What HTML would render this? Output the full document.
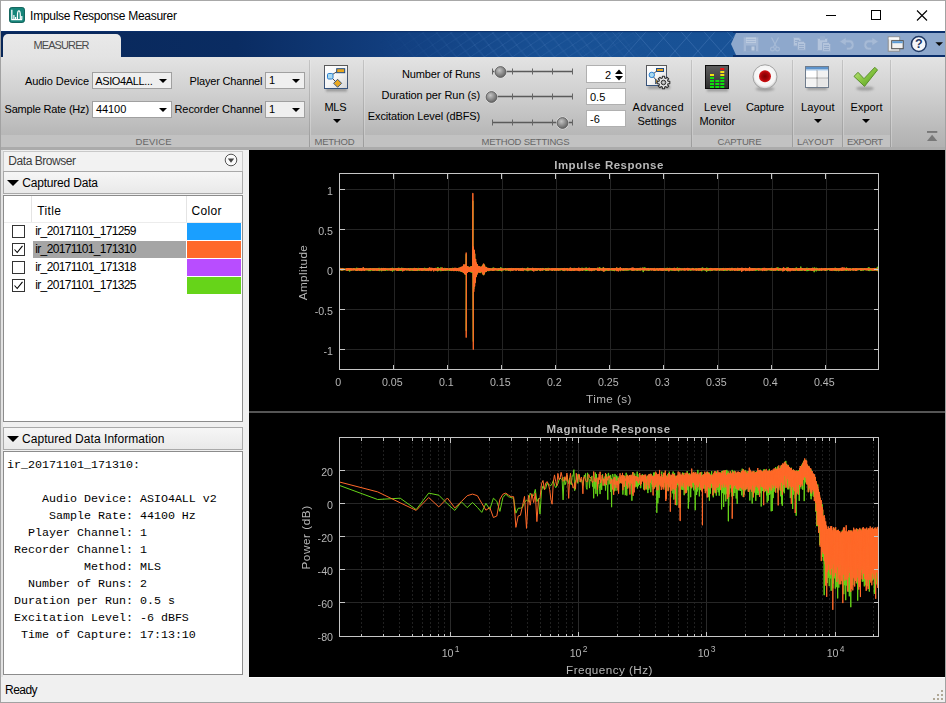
<!DOCTYPE html>
<html><head><meta charset="utf-8"><title>Impulse Response Measurer</title>
<style>

html,body{margin:0;padding:0;}
body{width:946px;height:703px;overflow:hidden;background:#f0f0f0;font-family:"Liberation Sans",sans-serif;font-size:12px;color:#000;}
#win{position:relative;width:946px;height:703px;overflow:hidden;background:#f0f0f0;box-sizing:border-box;}
.abs{position:absolute;}
#wb-top{position:absolute;left:0;top:0;width:946px;height:1px;background:#a8a8a8;z-index:50;}
#wb-left{position:absolute;left:0;top:0;width:1px;height:703px;background:#a2a2a2;z-index:50;}
#wb-right{position:absolute;left:945px;top:0;width:1px;height:703px;background:#a2a2a2;z-index:50;}
#wb-bot{position:absolute;left:0;top:702px;width:946px;height:1px;background:#a2a2a2;z-index:50;}
#titlebar{position:absolute;left:0;top:0;width:946px;height:31px;background:#fff;}
#title{position:absolute;left:30px;top:8px;font-size:12.4px;color:#000;white-space:nowrap;letter-spacing:0px;}
#tabbar{position:absolute;left:0;top:31px;width:946px;height:26px;background:linear-gradient(90deg,#092759 0%,#0a2c62 25%,#123f80 42%,#185094 58%,#1a5599 100%);overflow:hidden;}
#tab{position:absolute;left:3px;top:3px;width:118px;height:24px;background:linear-gradient(#e9e9e9,#e3e3e3);border-radius:5px 5px 0 0;}
#tab span{position:absolute;left:31px;top:5px;font-size:11.5px;color:#4a4a4a;letter-spacing:0.1px;}
#qat{position:absolute;left:731px;top:2px;width:215px;height:22px;}
#strip{position:absolute;left:0;top:57px;width:946px;height:93px;background:linear-gradient(#e3e3e3 0%,#d2d2d2 35%,#b9b9b9 80%,#b0b0b0 100%);}
#labels{position:absolute;left:0;top:135px;width:891px;height:12px;background:#c2c2c2;}
#labels span{position:absolute;top:2px;font-size:10.5px;color:#5f5f5f;white-space:nowrap;letter-spacing:0.2px;}
#stripline{position:absolute;left:0;top:147px;width:946px;height:3px;background:#ababab;}
.vsep{position:absolute;top:60px;width:1px;height:87px;background:linear-gradient(#c4c4c4,#9c9c9c);}
.vsep2{position:absolute;top:60px;width:1px;height:87px;background:linear-gradient(#e6e6e6,#c4c4c4);}
.tl{position:absolute;font-size:12px;white-space:nowrap;color:#000;}
.combo{position:absolute;height:17px;border:1px solid #a0a0a0;background:#efefef;box-sizing:border-box;font-size:11px;}
.combo span{position:absolute;left:3px;top:1px;white-space:nowrap;}
.combo i{position:absolute;right:4px;top:6px;width:0;height:0;border-left:4px solid transparent;border-right:4px solid transparent;border-top:4px solid #000;}
.tf{position:absolute;height:17px;width:40px;border:1px solid #b0b0b0;background:#fff;box-sizing:border-box;font-size:11px;}
.tf span{position:absolute;top:1.5px;white-space:nowrap;}
.btnl{position:absolute;font-size:12px;text-align:center;white-space:nowrap;line-height:14px;}
.dd{position:absolute;width:0;height:0;border-left:4px solid transparent;border-right:4px solid transparent;border-top:4px solid #000;}
#left{position:absolute;left:1px;top:150px;width:248px;height:527px;background:#f0f0f0;}
#status{position:absolute;left:1px;top:677px;width:944px;height:25px;background:#f0f0f0;}
#status span{position:absolute;left:4px;top:6px;font-size:12px;}
#plotbg{position:absolute;left:249px;top:150px;width:696px;height:527px;background:#000;}
.ph{position:absolute;box-sizing:border-box;border:1px solid #a9a9a9;background:linear-gradient(#f6f6f6,#e9e9e9);font-size:12px;}
.mono{font-family:"Liberation Mono",monospace;font-size:11px;white-space:pre;line-height:17px;}

</style></head>
<body>
<div id="win">
<div id="wb-top"></div><div id="wb-left"></div><div id="wb-right"></div><div id="wb-bot"></div>

<div id="titlebar">
<svg class="abs" style="left:9px;top:7px" width="16" height="16" viewBox="0 0 17 17">
<rect x="0.5" y="0.5" width="16" height="16" rx="2.5" fill="#16857a" stroke="#0d5f57"/>
<path d="M3 3 V13.5 H14" fill="none" stroke="#fff" stroke-width="1.4"/>
<path d="M5.2 13 V8.5 M7 13 V10.5 M9 13 V9 C9 6 9.6 4 10.5 4 C11.4 4 12 6 12 9 V13 M13.6 13 V9.5" fill="none" stroke="#fff" stroke-width="1.3"/>
</svg>
<div class="abs" style="left:30.1px;top:9.6px;font-size:12px;line-height:13.9px;letter-spacing:-0.271px;color:#000;white-space:nowrap;">Impulse Response Measurer</div>
<svg class="abs" style="left:820px;top:8px" width="120" height="16" viewBox="0 0 120 16">
<path d="M6 7.5 H16" stroke="#000" stroke-width="1" fill="none"/>
<rect x="51.500" y="2.500" width="9" height="9" stroke="#000" stroke-width="1" fill="none"/>
<path d="M97 2.5 L107 12.5 M107 2.5 L97 12.5" stroke="#000" stroke-width="1.1" fill="none"/>
</svg>
</div>
<div id="tabbar">
<svg class="abs" style="left:0;top:0" width="946" height="26" viewBox="0 0 946 26">
<defs><pattern id="hatch" width="46" height="52" patternUnits="userSpaceOnUse" patternTransform="translate(8,-6)">
<path d="M0 0 L46 52 M46 0 L0 52 M-23 0 L23 52 M69 0 L23 52 M23 0 L69 52 M23 0 L-23 52" stroke="#4d7fbd" stroke-width="1" fill="none" opacity="0.500"/></pattern>
<pattern id="hatch2" width="14" height="12" patternUnits="userSpaceOnUse" patternTransform="translate(3,2) skewX(-20)">
<path d="M0 0 L14 12 M14 0 L0 12" stroke="#3f72b3" stroke-width="0.800" fill="none" opacity="0.550"/></pattern>
<linearGradient id="hfade" x1="0" x2="1" y1="0" y2="0"><stop offset="0" stop-color="#fff" stop-opacity="0"/><stop offset="0.6" stop-color="#fff" stop-opacity="0"/><stop offset="0.68" stop-color="#fff" stop-opacity="0.800"/><stop offset="1" stop-color="#fff" stop-opacity="1"/></linearGradient>
<linearGradient id="hfade2" x1="0" x2="1" y1="0" y2="0"><stop offset="0" stop-color="#fff" stop-opacity="0"/><stop offset="0.4" stop-color="#fff" stop-opacity="0"/><stop offset="0.52" stop-color="#fff" stop-opacity="0.900"/><stop offset="0.62" stop-color="#fff" stop-opacity="0.900"/><stop offset="0.7" stop-color="#fff" stop-opacity="0"/><stop offset="1" stop-color="#fff" stop-opacity="0"/></linearGradient>
<mask id="hm"><rect width="946" height="26" fill="url(#hfade)"/></mask><mask id="hm2"><rect width="946" height="26" fill="url(#hfade2)"/></mask></defs>
<rect width="946" height="26" fill="url(#hatch2)" mask="url(#hm2)"/>
<rect width="946" height="26" fill="url(#hatch)" mask="url(#hm)"/>
<rect x="0" y="0" width="946" height="1.200" fill="#0b2f6b" opacity="0.850"/><rect x="733" y="0" width="213" height="2" fill="#0b2f6b"/><rect x="733" y="24" width="213" height="2" fill="#0b2f6b"/><path d="M731 13 L736 2 H946 V24 H736 Z" fill="#8ea8cc"/>
</svg>
<div id="tab"></div>
<svg id="qat" viewBox="0 0 215 22">
<!-- save -->
<path d="M12.500 4 H27.500 V18.500 H12.500 Z" fill="#a4b8d5" stroke="#94abcc" stroke-width="0.800"/>
<rect x="15" y="4.500" width="10" height="5.500" fill="#bccbe0"/>
<rect x="15.500" y="6" width="9" height="1" fill="#a4b8d5"/><rect x="15.500" y="8" width="9" height="1" fill="#a4b8d5"/>
<rect x="15" y="12.500" width="10" height="6" fill="#8fa7c9"/>
<rect x="20.500" y="13.500" width="3" height="4" fill="#bccbe0"/>
<!-- cut -->
<g fill="none" stroke="#a6bad6" stroke-width="1.200">
<path d="M40.500 4.500 L45.500 14 M47.500 4.500 L42.500 14"/><circle cx="41.500" cy="16" r="1.900"/><circle cx="46.500" cy="16" r="1.900"/>
</g>
<!-- copy -->
<g fill="#b3c4dc" stroke="#98aece" stroke-width="1">
<path d="M62.500 4.500 H68 L70 6.500 V13 H62.500 Z"/><path d="M66.500 8.500 H72.500 L74.500 10.500 V17 H66.500 Z"/>
</g>
<path d="M64 7.500 H68 M64 9.500 H66 M68 11.500 H73 M68 13.500 H73 M68 15.500 H73" stroke="#8ea6c8" stroke-width="0.800" fill="none"/>
<!-- paste -->
<g fill="#b3c4dc" stroke="#98aece" stroke-width="1">
<rect x="86.500" y="5.500" width="10" height="12"/><rect x="89.500" y="3.800" width="4" height="3" fill="#98aece"/><path d="M91.500 9.500 H97.500 L99.500 11.500 V18.300 H91.500 Z"/>
</g>
<path d="M93 12.500 H98 M93 14.500 H98 M93 16.500 H98" stroke="#8ea6c8" stroke-width="0.800" fill="none"/>
<!-- undo -->
<path d="M108.500 8.600 L115 4.300 V6.800 H119 C124.500 6.800 124.500 17 119 17 H115.500 V14.300 H118.500 C121 14.300 121 9.800 118.500 9.800 H115 V12.800 Z" fill="#a6bad6" stroke="#90a8ca" stroke-width="0.800"/>
<!-- redo -->
<path d="M147.500 8.600 L141 4.300 V6.800 H137 C131.500 6.800 131.500 17 137 17 H140.500 V14.300 H137.500 C135 14.300 135 9.800 137.500 9.800 H141 V12.800 Z" fill="#a6bad6" stroke="#90a8ca" stroke-width="0.800"/>
<!-- windows -->
<rect x="157.200" y="3.900" width="11.500" height="14.300" fill="#ececec" stroke="#8e8e8e" stroke-width="1"/>
<rect x="157.700" y="4.400" width="10.500" height="2" fill="#fbfbfb"/>
<rect x="160.700" y="7.700" width="11.500" height="8" fill="#f2f2f2" stroke="#4a4a4a" stroke-width="1"/>
<rect x="161.200" y="8.200" width="10.500" height="2" fill="#5b9bd5"/>
<!-- help -->
<circle cx="187.800" cy="11" r="7.400" fill="#f4f6fa" stroke="#1f3864" stroke-width="1.500"/>
<text x="187.800" y="15.300" font-family="Liberation Sans, sans-serif" font-weight="bold" font-size="12.500" text-anchor="middle" fill="#1f3864">?</text>
<path d="M204.400 9.200 H212 L208.200 13 Z" fill="#0a0a0a"/>
</svg>
</div>
<div class="abs" style="left:33.5px;top:38.6px;font-size:11px;line-height:12.8px;letter-spacing:-0.906px;color:#4a4a4a;white-space:nowrap;">MEASURER</div>

<div id="strip"></div>
<div id="labels">
</div>
<div class="abs" style="left:135.5px;top:136.1px;font-size:9.5px;line-height:11.0px;letter-spacing:0.126px;color:#666666;white-space:nowrap;">DEVICE</div>
<div class="abs" style="left:314.5px;top:136.1px;font-size:9.5px;line-height:11.0px;letter-spacing:-0.233px;color:#666666;white-space:nowrap;">METHOD</div>
<div class="abs" style="left:481.5px;top:136.1px;font-size:9.5px;line-height:11.0px;letter-spacing:-0.236px;color:#666666;white-space:nowrap;">METHOD SETTINGS</div>
<div class="abs" style="left:717.5px;top:136.1px;font-size:9.5px;line-height:11.0px;letter-spacing:-0.232px;color:#666666;white-space:nowrap;">CAPTURE</div>
<div class="abs" style="left:797.0px;top:136.1px;font-size:9.5px;line-height:11.0px;letter-spacing:-0.041px;color:#666666;white-space:nowrap;">LAYOUT</div>
<div class="abs" style="left:846.9px;top:136.1px;font-size:9.5px;line-height:11.0px;letter-spacing:-0.538px;color:#666666;white-space:nowrap;">EXPORT</div>
<div id="stripline"></div>
<div class="vsep" style="left:309px"></div><div class="vsep2" style="left:310px"></div>
<div class="vsep" style="left:363px"></div><div class="vsep2" style="left:364px"></div>
<div class="vsep" style="left:691px"></div><div class="vsep2" style="left:692px"></div>
<div class="vsep" style="left:792px"></div><div class="vsep2" style="left:793px"></div>
<div class="vsep" style="left:842px"></div><div class="vsep2" style="left:843px"></div>
<div class="vsep" style="left:890px"></div><div class="vsep2" style="left:891px"></div>

<div class="abs" style="left:24.9px;top:74.6px;font-size:11px;line-height:12.8px;letter-spacing:-0.056px;color:#000;white-space:nowrap;">Audio Device</div>
<div class="combo" style="left:92px;top:72px;width:80px"><i></i></div><div class="abs" style="left:95.2px;top:74.9px;font-size:11px;line-height:12.8px;letter-spacing:-0.364px;color:#000;white-space:nowrap;">ASIO4ALL...</div>
<div class="abs" style="left:4.5px;top:103.1px;font-size:11px;line-height:12.8px;letter-spacing:-0.188px;color:#000;white-space:nowrap;">Sample Rate (Hz)</div>
<div class="combo" style="left:92px;top:101px;width:80px;background:#fff"><i></i></div><div class="abs" style="left:95.9px;top:103.4px;font-size:11px;line-height:12.8px;letter-spacing:-0.047px;color:#000;white-space:nowrap;">44100</div>
<div class="abs" style="left:189.5px;top:74.6px;font-size:11px;line-height:12.8px;letter-spacing:-0.170px;color:#000;white-space:nowrap;">Player Channel</div>
<div class="combo" style="left:265px;top:72px;width:40px"><span>1</span><i></i></div>
<div class="abs" style="left:174.5px;top:103.1px;font-size:11px;line-height:12.8px;letter-spacing:-0.085px;color:#000;white-space:nowrap;">Recorder Channel</div>
<div class="combo" style="left:265px;top:101px;width:40px"><span>1</span><i></i></div>

<!-- MLS icon -->
<svg class="abs" style="left:322px;top:63px" width="29" height="31" viewBox="-2 -2 29 31">
<defs><linearGradient id="boxb" x1="0" y1="0" x2="0" y2="1"><stop offset="0" stop-color="#5a5a5a"/><stop offset="0.35" stop-color="#50596a"/><stop offset="1" stop-color="#35527c"/></linearGradient>
<linearGradient id="boxf" x1="0" y1="0" x2="1" y2="1"><stop offset="0" stop-color="#ffffff"/><stop offset="0.5" stop-color="#f6f6f6"/><stop offset="1" stop-color="#d4d4d4"/></linearGradient>
<filter id="blur1" x="-20%" y="-50%" width="140%" height="300%"><feGaussianBlur stdDeviation="1.2"/></filter></defs>
<rect x="2" y="23" width="21" height="3.500" fill="#6a6a6a" opacity="0.55" filter="url(#blur1)"/>
<rect x="0.500" y="0.500" width="23" height="23" fill="url(#boxf)" stroke="url(#boxb)"/>
<path d="M6 11 L14 6 M6 11 L13 18" stroke="#4a4a4a" stroke-width="1" fill="none"/>
<rect x="3.500" y="8.500" width="5.500" height="5.500" rx="1.200" fill="#a9daf0" stroke="#2b7fd2"/>
<rect x="12.700" y="3.700" width="8" height="4" fill="#eaa820" stroke="#1f4c86"/>
<path d="M13.600 14.300 L17.600 18.300 L13.600 22.300 L9.600 18.300 Z" fill="#eaa820" stroke="#2a4a78" stroke-width="0.900"/>
</svg>
<div class="abs" style="left:324.5px;top:100.9px;font-size:11px;line-height:12.8px;letter-spacing:-0.309px;color:#000;white-space:nowrap;">MLS</div>
<div class="dd" style="left:333px;top:119px"></div>

<div class="abs" style="left:401.9px;top:67.6px;font-size:11px;line-height:12.8px;letter-spacing:-0.138px;color:#000;white-space:nowrap;">Number of Runs</div>
<div class="abs" style="left:381.5px;top:89.2px;font-size:11px;line-height:12.8px;letter-spacing:-0.050px;color:#000;white-space:nowrap;">Duration per Run (s)</div>
<div class="abs" style="left:367.8px;top:110.1px;font-size:11px;line-height:12.8px;letter-spacing:-0.115px;color:#000;white-space:nowrap;">Excitation Level (dBFS)</div>
<svg class="abs" style="left:0;top:0" width="946" height="150" viewBox="0 0 946 150">
<defs><radialGradient id="thumbg" cx="0.4" cy="0.35" r="0.7"><stop offset="0" stop-color="#c4c4c4"/><stop offset="0.6" stop-color="#868686"/><stop offset="1" stop-color="#5e5e5e"/></radialGradient></defs>
<g><line x1="492" y1="71.5" x2="573" y2="71.5" stroke="#5a5a5a" stroke-width="1.300"/><line x1="492.5" y1="68.5" x2="492.5" y2="74.5" stroke="#666" stroke-width="1"/><line x1="512.5" y1="68.5" x2="512.5" y2="74.5" stroke="#666" stroke-width="1"/><line x1="532.5" y1="68.5" x2="532.5" y2="74.5" stroke="#666" stroke-width="1"/><line x1="552.5" y1="68.5" x2="552.5" y2="74.5" stroke="#666" stroke-width="1"/><line x1="572.5" y1="68.5" x2="572.5" y2="74.5" stroke="#666" stroke-width="1"/>
<circle cx="500.5" cy="72.0" r="6.400" fill="#e6e6e6" opacity="0.800"/><circle cx="500.5" cy="72.0" r="5.400" fill="url(#thumbg)" stroke="#5c5c5c" stroke-width="0.900"/></g>
<g><line x1="492" y1="96.5" x2="573" y2="96.5" stroke="#5a5a5a" stroke-width="1.300"/><line x1="492.5" y1="93.5" x2="492.5" y2="99.5" stroke="#666" stroke-width="1"/><line x1="512.5" y1="93.5" x2="512.5" y2="99.5" stroke="#666" stroke-width="1"/><line x1="532.5" y1="93.5" x2="532.5" y2="99.5" stroke="#666" stroke-width="1"/><line x1="552.5" y1="93.5" x2="552.5" y2="99.5" stroke="#666" stroke-width="1"/><line x1="572.5" y1="93.5" x2="572.5" y2="99.5" stroke="#666" stroke-width="1"/>
<circle cx="491.5" cy="97.0" r="6.400" fill="#e6e6e6" opacity="0.800"/><circle cx="491.5" cy="97.0" r="5.400" fill="url(#thumbg)" stroke="#5c5c5c" stroke-width="0.900"/></g>
<g><line x1="492" y1="122.5" x2="573" y2="122.5" stroke="#5a5a5a" stroke-width="1.300"/><line x1="492.5" y1="119.5" x2="492.5" y2="125.5" stroke="#666" stroke-width="1"/><line x1="512.5" y1="119.5" x2="512.5" y2="125.5" stroke="#666" stroke-width="1"/><line x1="532.5" y1="119.5" x2="532.5" y2="125.5" stroke="#666" stroke-width="1"/><line x1="552.5" y1="119.5" x2="552.5" y2="125.5" stroke="#666" stroke-width="1"/><line x1="572.5" y1="119.5" x2="572.5" y2="125.5" stroke="#666" stroke-width="1"/>
<circle cx="562.5" cy="123.0" r="6.400" fill="#e6e6e6" opacity="0.800"/><circle cx="562.5" cy="123.0" r="5.400" fill="url(#thumbg)" stroke="#5c5c5c" stroke-width="0.900"/></g>
</svg>
<div class="tf" style="left:586px;top:65px;height:18px"><span style="right:14px;top:2.500px">2</span>
<svg class="abs" style="left:27px;top:2.500px" width="10" height="12" viewBox="0 0 10 12"><path d="M1 5 L5 0.500 L9 5 Z M1 7 L5 11.500 L9 7 Z" fill="#000"/></svg></div>
<div class="tf" style="left:586px;top:88px"><span style="left:3px">0.5</span></div>
<div class="tf" style="left:586px;top:110px"><span style="left:3px">-6</span></div>

<!-- Advanced settings icon -->
<svg class="abs" style="left:644px;top:63px" width="30" height="31" viewBox="-2 -2 30 31">
<rect x="2" y="20.500" width="22" height="3.500" fill="#6a6a6a" opacity="0.500" filter="url(#blur1)"/>
<rect x="0.500" y="0.500" width="20" height="20" fill="url(#boxf)" stroke="url(#boxb)"/>
<path d="M5.800 10 L12 5 M5.800 10 L11 16" stroke="#4a4a4a" stroke-width="1" fill="none"/>
<circle cx="5.800" cy="9.900" r="2.700" fill="#a9daf0" stroke="#2b7fd2"/>
<rect x="10.500" y="3.500" width="7" height="3" fill="#eaa820" stroke="#1f4c86"/>
<path d="M9.500 14 L12 16.500 L9.500 19 Z" fill="#eaa820" stroke="#2a4a78" stroke-width="0.800"/>
<g transform="translate(17.500,17.500)">
<path d="M4.54 -1.21 L6.31 -1.08 L6.31 1.08 L4.54 1.21 L4.07 2.36 L5.23 3.69 L3.69 5.23 L2.36 4.07 L1.21 4.54 L1.08 6.31 L-1.08 6.31 L-1.21 4.54 L-2.36 4.07 L-3.69 5.23 L-5.23 3.69 L-4.07 2.36 L-4.54 1.21 L-6.31 1.08 L-6.31 -1.08 L-4.54 -1.21 L-4.07 -2.36 L-5.23 -3.69 L-3.69 -5.23 L-2.36 -4.07 L-1.21 -4.54 L-1.08 -6.31 L1.08 -6.31 L1.21 -4.54 L2.36 -4.07 L3.69 -5.23 L5.23 -3.69 L4.07 -2.36 Z" fill="#e4e4e4" stroke="#2e2e2e" stroke-width="1.100" stroke-linejoin="round"/>
<circle cx="0" cy="0" r="2.300" fill="#9a9a9a" stroke="#3a3a3a" stroke-width="1"/>
<circle cx="0" cy="0" r="1.100" fill="#d8d8d8"/>
</g>
</svg>
<div class="abs" style="left:632.5px;top:100.9px;font-size:11px;line-height:12.8px;letter-spacing:0.296px;color:#000;white-space:nowrap;">Advanced</div><div class="abs" style="left:637.5px;top:114.9px;font-size:11px;line-height:12.8px;letter-spacing:-0.107px;color:#000;white-space:nowrap;">Settings</div>

<!-- Level monitor icon -->
<svg class="abs" style="left:703px;top:63px" width="29" height="31" viewBox="-2 -2 29 31">
<defs><linearGradient id="lvg" x1="0" y1="0" x2="0" y2="1"><stop offset="0" stop-color="#5e5e5e"/><stop offset="1" stop-color="#2c2c2c"/></linearGradient></defs>
<rect x="2" y="23" width="21" height="3.500" fill="#6a6a6a" opacity="0.500" filter="url(#blur1)"/>
<rect x="0.500" y="0.500" width="23" height="23" fill="url(#lvg)" stroke="#0c0c0c"/>
<rect x="5" y="21" width="4" height="2" fill="#0ee00e"/><rect x="5" y="18" width="4" height="2" fill="#0ee00e"/><rect x="5" y="15" width="4" height="2" fill="#0ee00e"/><rect x="5" y="12" width="4" height="2" fill="#0ee00e"/><rect x="5" y="9" width="4" height="2" fill="#f2e214"/><rect x="10.3" y="21" width="4" height="2" fill="#0ee00e"/><rect x="10.3" y="18" width="4" height="2" fill="#0ee00e"/><rect x="10.3" y="15" width="4" height="2" fill="#0ee00e"/><rect x="15.3" y="21" width="4" height="2" fill="#0ee00e"/><rect x="15.3" y="18" width="4" height="2" fill="#0ee00e"/><rect x="15.3" y="15" width="4" height="2" fill="#0ee00e"/><rect x="15.3" y="12" width="4" height="2" fill="#0ee00e"/><rect x="15.3" y="9" width="4" height="2" fill="#f2e214"/><rect x="15.3" y="6" width="4" height="2" fill="#f2e214"/><rect x="15.3" y="3" width="4" height="2" fill="#ee1010"/>
</svg>
<div class="abs" style="left:704.0px;top:100.9px;font-size:11px;line-height:12.8px;letter-spacing:0.176px;color:#000;white-space:nowrap;">Level</div><div class="abs" style="left:699.5px;top:114.9px;font-size:11px;line-height:12.8px;letter-spacing:-0.163px;color:#000;white-space:nowrap;">Monitor</div>

<!-- Capture icon -->
<svg class="abs" style="left:751px;top:62px" width="28" height="32" viewBox="0 0 28 32">
<defs><radialGradient id="capg" cx="0.5" cy="0.45" r="0.55"><stop offset="0" stop-color="#ffffff"/><stop offset="0.78" stop-color="#f4f4f4"/><stop offset="1" stop-color="#c2c2c2"/></radialGradient>
<radialGradient id="redg" cx="0.5" cy="0.5" r="0.55"><stop offset="0" stop-color="#7e0000"/><stop offset="0.55" stop-color="#a80408"/><stop offset="1" stop-color="#e01a1a"/></radialGradient></defs>
<ellipse cx="14" cy="27" rx="9.500" ry="2.200" fill="#707070" opacity="0.500" filter="url(#blur1)"/>
<circle cx="14" cy="14.800" r="12" fill="url(#capg)" stroke="#a2a2a2" stroke-width="1"/>
<circle cx="14" cy="14.300" r="6" fill="url(#redg)"/>
</svg>
<div class="abs" style="left:746.0px;top:100.9px;font-size:11px;line-height:12.8px;letter-spacing:-0.156px;color:#000;white-space:nowrap;">Capture</div>

<!-- Layout icon -->
<svg class="abs" style="left:803px;top:64px" width="29" height="30" viewBox="-2 -2 29 30">
<rect x="2" y="20.500" width="20" height="3.500" fill="#6a6a6a" opacity="0.500" filter="url(#blur1)"/>
<rect x="0.500" y="0.500" width="23" height="21" fill="#f8f8f8" stroke="#6f7c8c"/>
<rect x="1" y="1" width="22" height="2.600" fill="#5d93cb"/>
<rect x="1" y="3.600" width="22" height="1" fill="#b7d3ee"/>
<path d="M12 4.500 V21 M1 12 H23" stroke="#8a8a8a" stroke-width="1.200"/>
<rect x="1.500" y="5" width="10" height="6.400" fill="#ffffff"/><rect x="12.700" y="5" width="10" height="6.400" fill="#f1f1f1"/>
<rect x="1.500" y="12.700" width="10" height="8" fill="#f3f3f3"/><rect x="12.700" y="12.700" width="10" height="8" fill="#e6e6e6"/>
</svg>
<div class="abs" style="left:801.1px;top:100.9px;font-size:11px;line-height:12.8px;letter-spacing:0.075px;color:#000;white-space:nowrap;">Layout</div>
<div class="dd" style="left:814px;top:119px"></div>

<!-- Export icon -->
<svg class="abs" style="left:850px;top:62px" width="32" height="32" viewBox="850 62 32 32">
<defs><linearGradient id="chk" x1="0" y1="0" x2="1" y2="1"><stop offset="0" stop-color="#c7ea86"/><stop offset="0.5" stop-color="#86c440"/><stop offset="1" stop-color="#4f9a1e"/></linearGradient></defs>
<ellipse cx="865" cy="88.500" rx="9" ry="2" fill="#6a6a6a" opacity="0.500" filter="url(#blur1)"/>
<path d="M854 76.400 L858 72.300 L864 78.700 L874.800 67.300 L877.500 70 L864.500 86.400 Z" fill="url(#chk)" stroke="#5a8f2c" stroke-width="1" stroke-linejoin="round"/>
</svg>
<div class="abs" style="left:850.5px;top:100.9px;font-size:11px;line-height:12.8px;letter-spacing:0.042px;color:#000;white-space:nowrap;">Export</div>
<div class="dd" style="left:862px;top:119px"></div>

<!-- collapse icon -->
<svg class="abs" style="left:927px;top:131px" width="11" height="11" viewBox="0 0 11 11">
<rect x="0" y="0" width="10.300" height="1.900" fill="#787878"/>
<path d="M5.100 3.800 L10.300 10 H0 Z" fill="#787878"/>
</svg>


<div class="abs" style="left:1px;top:150px;width:248px;height:527px;background:#f0f0f0"></div>
<div class="abs" style="left:1px;top:150px;width:2px;height:527px;background:#e3e3e3"></div>
<div class="abs" style="left:3px;top:151px;width:240px;height:20px;border:1px solid #c9c9c9;border-bottom:none;box-sizing:border-box;background:#f2f2f2"></div>
<div class="abs" style="left:8.3px;top:154.9px;font-size:12px;line-height:13.9px;letter-spacing:-0.445px;color:#3c3c3c;white-space:nowrap;">Data Browser</div>
<svg class="abs" style="left:224px;top:153px" width="14" height="14" viewBox="0 0 14 14"><circle cx="7" cy="7" r="5.800" fill="#fafafa" stroke="#555" stroke-width="1"/><path d="M3.800 5.500 H10.200 L7 9.700 Z" fill="#444"/></svg>

<div class="ph" style="left:3px;top:171px;width:240px;height:23px"></div>
<div class="abs" style="left:7px;top:180px;width:0;height:0;border-left:6px solid transparent;border-right:6px solid transparent;border-top:6px solid #000"></div>
<div class="abs" style="left:22.2px;top:176.8px;font-size:12px;line-height:13.9px;letter-spacing:-0.187px;color:#000;white-space:nowrap;">Captured Data</div>

<div class="abs" style="left:3px;top:195px;width:240px;height:227px;border:1px solid #8c8c8c;box-sizing:border-box;background:#fff"></div>
<div class="abs" style="left:31px;top:196px;width:1px;height:26px;background:#e4e4e4"></div>
<div class="abs" style="left:186px;top:196px;width:1px;height:26px;background:#e4e4e4"></div>
<div class="abs" style="left:4px;top:222px;width:238px;height:1px;background:#ececec"></div>
<div class="abs" style="left:37.3px;top:204.6px;font-size:12px;line-height:13.9px;letter-spacing:0.369px;color:#000;white-space:nowrap;">Title</div>
<div class="abs" style="left:191.5px;top:204.6px;font-size:12px;line-height:13.9px;letter-spacing:0.331px;color:#000;white-space:nowrap;">Color</div>
<svg class="abs" style="left:12px;top:225px" width="13" height="13" viewBox="0 0 13 13"><rect x="0.500" y="0.500" width="12" height="12" fill="#fff" stroke="#333"/></svg><div class="abs" style="left:35.3px;top:225.3px;font-size:12px;line-height:13.9px;letter-spacing:-0.668px;color:#000;white-space:nowrap;">ir_20171101_171259</div><div class="abs" style="left:187px;top:223px;width:54px;height:17px;background:#1a9fff"></div><div class="abs" style="left:33px;top:241px;width:153px;height:17px;background:#a5a5a5"></div><svg class="abs" style="left:12px;top:243px" width="13" height="13" viewBox="0 0 13 13"><rect x="0.500" y="0.500" width="12" height="12" fill="#fff" stroke="#333"/><path d="M2.500 6.500 L5.200 9.500 L10.500 2.800" stroke="#000" stroke-width="1.100" fill="none"/></svg><div class="abs" style="left:35.3px;top:243.3px;font-size:12px;line-height:13.9px;letter-spacing:-0.668px;color:#000;white-space:nowrap;">ir_20171101_171310</div><div class="abs" style="left:187px;top:241px;width:54px;height:17px;background:#ff6929"></div><svg class="abs" style="left:12px;top:261px" width="13" height="13" viewBox="0 0 13 13"><rect x="0.500" y="0.500" width="12" height="12" fill="#fff" stroke="#333"/></svg><div class="abs" style="left:35.3px;top:261.3px;font-size:12px;line-height:13.9px;letter-spacing:-0.668px;color:#000;white-space:nowrap;">ir_20171101_171318</div><div class="abs" style="left:187px;top:259px;width:54px;height:17px;background:#b84dff"></div><svg class="abs" style="left:12px;top:279px" width="13" height="13" viewBox="0 0 13 13"><rect x="0.500" y="0.500" width="12" height="12" fill="#fff" stroke="#333"/><path d="M2.500 6.500 L5.200 9.500 L10.500 2.800" stroke="#000" stroke-width="1.100" fill="none"/></svg><div class="abs" style="left:35.3px;top:279.3px;font-size:12px;line-height:13.9px;letter-spacing:-0.668px;color:#000;white-space:nowrap;">ir_20171101_171325</div><div class="abs" style="left:187px;top:277px;width:54px;height:17px;background:#66d419"></div>

<div class="ph" style="left:3px;top:427px;width:240px;height:23px"></div>
<div class="abs" style="left:7px;top:436px;width:0;height:0;border-left:6px solid transparent;border-right:6px solid transparent;border-top:6px solid #000"></div>
<div class="abs" style="left:22.0px;top:432.9px;font-size:12px;line-height:13.9px;letter-spacing:0.045px;color:#000;white-space:nowrap;">Captured Data Information</div>
<div class="abs" style="left:3px;top:451px;width:240px;height:224px;border:1px solid #8c8c8c;box-sizing:border-box;background:#fff"></div>
<div class="abs mono" style="left:7px;top:457px;font-size:11.670px">ir_20171101_171310:

     Audio Device: ASIO4ALL v2
      Sample Rate: 44100 Hz
   Player Channel: 1
 Recorder Channel: 1
           Method: MLS
   Number of Runs: 2
 Duration per Run: 0.5 s
 Excitation Level: -6 dBFS
  Time of Capture: 17:13:10</div>


<div id="plotbg"></div>
<svg class="abs" style="left:0;top:0;will-change:transform" width="946" height="703" viewBox="0 0 946 703" shape-rendering="auto">
<defs>
<clipPath id="ctop"><rect x="339.5" y="173.5" width="539.0" height="196.0"/></clipPath>
<clipPath id="cbot"><rect x="339.5" y="437.5" width="539.0" height="199.0"/></clipPath>
</defs>
<rect x="249" y="411" width="696" height="2" fill="#555"/>
<g shape-rendering="crispEdges"><line x1="394.5" y1="173.5" x2="394.5" y2="369.5" stroke="#242424"/><line x1="448.5" y1="173.5" x2="448.5" y2="369.5" stroke="#242424"/><line x1="502.5" y1="173.5" x2="502.5" y2="369.5" stroke="#242424"/><line x1="556.5" y1="173.5" x2="556.5" y2="369.5" stroke="#242424"/><line x1="610.5" y1="173.5" x2="610.5" y2="369.5" stroke="#242424"/><line x1="664.5" y1="173.5" x2="664.5" y2="369.5" stroke="#242424"/><line x1="718.5" y1="173.5" x2="718.5" y2="369.5" stroke="#242424"/><line x1="772.5" y1="173.5" x2="772.5" y2="369.5" stroke="#242424"/><line x1="826.5" y1="173.5" x2="826.5" y2="369.5" stroke="#242424"/><line x1="339.5" y1="189.5" x2="878.5" y2="189.5" stroke="#242424"/><line x1="339.5" y1="229.5" x2="878.5" y2="229.5" stroke="#242424"/><line x1="339.5" y1="269.5" x2="878.5" y2="269.5" stroke="#242424"/><line x1="339.5" y1="309.5" x2="878.5" y2="309.5" stroke="#242424"/><line x1="339.5" y1="349.5" x2="878.5" y2="349.5" stroke="#242424"/></g>
<g clip-path="url(#ctop)">
<path d="M339.5 268.4L339.7 268.4L339.7 270.9L340.0 268.9L340.0 269.5L340.2 268.7L340.2 270.0L340.5 269.5L340.5 269.9L340.7 270.0L340.7 268.9L341.0 268.9L341.0 269.7L341.3 268.6L341.3 270.1L341.5 270.1L341.5 269.0L341.8 268.6L341.8 270.2L342.0 270.2L342.0 269.7L342.3 268.2L342.3 270.5L342.5 269.3L342.5 268.4L342.7 268.4L342.7 270.2L343.0 269.2L343.0 269.3L343.2 270.0L343.2 268.9L343.5 269.7L343.5 269.1L343.7 268.6L343.7 269.9L344.0 269.3L344.0 269.4L344.3 270.0L344.3 268.8L344.5 269.0L344.5 269.9L344.8 268.9L344.8 270.1L345.0 269.3L345.0 268.9L345.2 268.9L345.2 270.2L345.5 269.7L345.5 269.7L345.7 269.7L345.7 268.8L346.0 269.4L346.0 269.0L346.2 269.0L346.2 270.0L346.5 269.2L346.5 269.2L346.7 268.7L346.7 270.4L347.0 269.8L347.0 269.3L347.3 268.7L347.3 270.3L347.5 268.9L347.5 269.2L347.8 270.7L347.8 268.5L348.0 269.3L348.0 269.5L348.3 270.3L348.3 268.1L348.5 269.5L348.5 270.0L348.7 270.9L348.7 268.3L349.0 269.6L349.0 269.6L349.2 268.5L349.2 270.0L349.5 269.1L349.5 269.7L349.7 271.5L349.7 268.6L350.0 270.5L350.0 269.9L350.3 270.5L350.3 268.7L350.5 269.3L350.5 269.4L350.8 270.4L350.8 268.5L351.0 269.4L351.0 269.3L351.2 268.8L351.2 269.9L351.5 269.6L351.5 269.2L351.7 269.0L351.7 270.1L352.0 269.3L352.0 269.4L352.2 270.2L352.2 268.9L352.5 269.2L352.5 269.6L352.7 268.6L352.7 269.8L353.0 269.6L353.0 269.2L353.3 269.8L353.3 268.5L353.5 268.5L353.5 269.8L353.8 270.2L353.8 268.9L354.0 269.7L354.0 268.5L354.3 268.5L354.3 269.7L354.5 269.1L354.5 269.4L354.7 269.9L354.7 268.8L355.0 269.8L355.0 268.6L355.2 268.6L355.2 270.4L355.5 269.9L355.5 269.5L355.7 268.7L355.7 270.3L356.0 269.6L356.0 269.1L356.3 268.8L356.3 270.6L356.5 269.3L356.5 269.4L356.8 270.5L356.8 267.7L357.0 269.6L357.0 268.5L357.2 268.5L357.2 270.2L357.5 268.7L357.5 269.2L357.7 270.3L357.7 268.7L358.0 269.6L358.0 269.2L358.2 268.2L358.2 270.6L358.5 269.9L358.5 269.0L358.7 268.4L358.7 270.1L359.0 269.1L359.0 269.1L359.3 270.2L359.3 268.6L359.5 269.1L359.5 269.3L359.8 268.4L359.8 270.4L360.0 269.5L360.0 269.6L360.3 270.0L360.3 268.8L360.5 269.1L360.5 269.1L360.7 270.1L360.7 269.0L361.0 269.4L361.0 269.1L361.2 268.6L361.2 270.5L361.5 268.8L361.5 269.6L361.7 270.3L361.7 268.3L362.0 269.1L362.0 269.5L362.3 270.3L362.3 268.8L362.5 269.1L362.5 269.3L362.8 269.7L362.8 268.7L363.0 268.7L363.0 269.2L363.2 269.9L363.2 268.7L363.5 269.8L363.5 269.6L363.7 270.1L363.7 268.7L364.0 269.7L364.0 268.9L364.2 270.3L364.2 268.4L364.5 270.3L364.5 270.2L364.7 270.2L364.7 268.7L365.0 269.1L365.0 269.0L365.3 270.1L365.3 268.8L365.5 268.9L365.5 269.1L365.8 268.9L365.8 270.1L366.0 269.9L366.0 268.8L366.3 268.6L366.3 269.9L366.5 269.4L366.5 269.8L366.7 268.8L366.7 270.3L367.0 269.1L367.0 269.3L367.2 270.1L367.2 268.8L367.5 269.1L367.5 269.9L367.7 270.3L367.7 268.9L368.0 269.4L368.0 268.7L368.3 270.1L368.3 268.7L368.5 269.3L368.5 269.6L368.8 268.8L368.8 271.1L369.0 269.2L369.0 270.0L369.2 268.6L369.2 270.4L369.5 269.9L369.5 268.8L369.7 270.6L369.7 268.5L370.0 270.1L370.0 268.6L370.2 268.6L370.2 271.1L370.5 269.8L370.5 268.8L370.7 268.3L370.7 270.6L371.0 269.3L371.0 269.5L371.3 269.9L371.3 268.9L371.5 269.2L371.5 269.2L371.8 268.6L371.8 270.4L372.0 269.4L372.0 268.9L372.3 270.2L372.3 268.6L372.5 269.6L372.5 268.7L372.7 268.2L372.7 270.4L373.0 269.7L373.0 269.8L373.2 270.5L373.2 268.5L373.5 268.6L373.5 269.5L373.7 270.3L373.7 268.4L374.0 269.5L374.0 270.5L374.3 270.5L374.3 268.7L374.5 268.7L374.5 269.0L374.8 268.6L374.8 269.9L375.0 268.6L375.0 269.0L375.2 270.4L375.2 268.9L375.5 269.7L375.5 269.6L375.7 270.3L375.7 268.8L376.0 269.6L376.0 269.4L376.2 268.4L376.2 269.9L376.5 269.9L376.5 269.6L376.7 268.6L376.7 269.9L377.0 269.9L377.0 269.5L377.3 268.7L377.3 270.0L377.5 269.2L377.5 269.5L377.8 268.7L377.8 270.3L378.0 269.8L378.0 268.5L378.3 270.5L378.3 268.1L378.5 268.1L378.5 269.0L378.7 268.4L378.7 270.2L379.0 268.9L379.0 270.7L379.2 267.9L379.2 271.0L379.5 268.5L379.5 268.4L379.7 268.4L379.7 271.1L380.0 269.2L380.0 269.1L380.3 270.3L380.3 268.7L380.5 269.1L380.5 269.8L380.8 270.1L380.8 268.8L381.0 268.8L381.0 269.1L381.2 270.0L381.2 268.6L381.5 269.7L381.5 271.2L381.7 271.2L381.7 268.1L382.0 268.1L382.0 270.0L382.2 268.6L382.2 270.5L382.5 269.5L382.5 269.9L382.7 270.7L382.7 268.5L383.0 269.7L383.0 269.4L383.3 268.6L383.3 269.9L383.5 269.3L383.5 269.6L383.8 270.4L383.8 268.4L384.0 269.7L384.0 269.5L384.3 268.1L384.3 270.4L384.5 268.5L384.5 269.9L384.7 270.7L384.7 268.1L385.0 270.3L385.0 269.2L385.2 268.0L385.2 270.6L385.5 270.5L385.5 270.2L385.7 270.3L385.7 268.5L386.0 268.7L386.0 268.8L386.3 268.5L386.3 270.4L386.5 269.3L386.5 269.9L386.8 270.2L386.8 268.9L387.0 269.3L387.0 268.8L387.2 268.8L387.2 270.4L387.5 269.8L387.5 268.9L387.7 268.7L387.7 270.2L388.0 269.3L388.0 269.8L388.2 268.8L388.2 269.9L388.5 269.9L388.5 269.2L388.7 268.8L388.7 270.0L389.0 269.4L389.0 269.5L389.3 270.0L389.3 268.6L389.5 269.5L389.5 269.0L389.8 268.6L389.8 270.2L390.0 270.2L390.0 268.6L390.3 270.5L390.3 268.2L390.5 269.3L390.5 269.5L390.7 268.7L390.7 270.3L391.0 269.7L391.0 269.4L391.2 268.6L391.2 269.8L391.5 268.8L391.5 269.3L391.7 270.6L391.7 268.6L392.0 269.7L392.0 269.4L392.3 267.8L392.3 271.4L392.5 271.4L392.5 269.3L392.8 271.1L392.8 268.4L393.0 268.4L393.0 270.5L393.2 270.5L393.2 268.1L393.5 269.0L393.5 269.6L393.7 270.1L393.7 268.9L394.0 269.2L394.0 269.2L394.2 270.3L394.2 268.7L394.5 269.5L394.5 269.7L394.7 268.7L394.7 270.2L395.0 269.2L395.0 269.5L395.3 268.3L395.3 270.1L395.5 269.6L395.5 268.8L395.8 269.9L395.8 268.7L396.0 269.4L396.0 269.3L396.3 270.1L396.3 268.5L396.5 268.5L396.5 269.0L396.7 270.5L396.7 268.3L397.0 269.8L397.0 269.4L397.2 270.0L397.2 268.4L397.5 269.3L397.5 269.2L397.7 270.2L397.7 268.7L398.0 269.7L398.0 269.3L398.3 270.6L398.3 268.2L398.5 269.1L398.5 268.9L398.8 270.6L398.8 267.7L399.0 269.7L399.0 268.7L399.2 268.6L399.2 270.6L399.5 269.3L399.5 268.6L399.7 270.8L399.7 268.5L400.0 270.5L400.0 269.8L400.2 270.9L400.2 268.0L400.5 269.6L400.5 269.9L400.7 268.2L400.7 270.6L401.0 268.9L401.0 268.8L401.3 268.4L401.3 270.5L401.5 270.5L401.5 268.3L401.8 270.5L401.8 267.7L402.0 269.4L402.0 269.5L402.3 270.0L402.3 268.4L402.5 269.2L402.5 269.2L402.7 268.3L402.7 270.0L403.0 269.4L403.0 269.3L403.2 268.7L403.2 269.9L403.5 269.9L403.5 269.4L403.7 270.3L403.7 268.2L404.0 268.2L404.0 269.0L404.3 268.4L404.3 269.8L404.5 269.1L404.5 268.9L404.8 268.9L404.8 269.9L405.0 269.3L405.0 268.9L405.2 268.9L405.2 270.0L405.5 269.3L405.5 269.2L405.7 268.4L405.7 269.8L406.0 269.0L406.0 269.5L406.2 268.9L406.2 269.8L406.5 269.8L406.5 269.0L406.7 268.9L406.7 270.3L407.0 269.2L407.0 270.3L407.3 270.3L407.3 268.7L407.5 269.6L407.5 269.7L407.8 269.9L407.8 268.6L408.0 269.2L408.0 270.0L408.3 270.0L408.3 268.5L408.5 269.9L408.5 269.9L408.7 270.0L408.7 268.3L409.0 268.7L409.0 269.4L409.2 268.5L409.2 270.1L409.5 269.2L409.5 269.3L409.7 268.5L409.7 270.1L410.0 269.2L410.0 269.7L410.3 270.6L410.3 268.2L410.5 269.6L410.5 270.1L410.8 270.4L410.8 268.7L411.0 269.2L411.0 268.9L411.2 268.6L411.2 270.2L411.5 269.1L411.5 269.6L411.7 268.7L411.7 270.0L412.0 269.1L412.0 269.0L412.2 270.7L412.2 268.4L412.5 269.7L412.5 268.5L412.7 268.5L412.7 270.9L413.0 269.4L413.0 269.2L413.3 270.4L413.3 268.6L413.5 270.2L413.5 269.2L413.8 268.8L413.8 270.0L414.0 269.5L414.0 269.6L414.3 270.5L414.3 268.5L414.5 269.3L414.5 269.0L414.7 268.0L414.7 270.3L415.0 269.3L415.0 269.2L415.2 268.8L415.2 270.4L415.5 270.1L415.5 268.8L415.7 268.1L415.7 271.0L416.0 268.9L416.0 269.2L416.3 268.5L416.3 270.4L416.5 268.6L416.5 270.1L416.8 268.3L416.8 270.5L417.0 268.8L417.0 269.1L417.2 268.5L417.2 270.9L417.5 269.5L417.5 270.7L417.7 270.7L417.7 268.5L418.0 269.3L418.0 269.2L418.2 269.8L418.2 268.6L418.5 268.6L418.5 268.9L418.7 270.6L418.7 268.1L419.0 268.3L419.0 269.6L419.3 268.3L419.3 269.9L419.5 269.4L419.5 270.5L419.8 270.5L419.8 268.6L420.0 269.3L420.0 269.2L420.3 268.6L420.3 269.9L420.5 269.6L420.5 269.3L420.7 268.4L420.7 269.9L421.0 268.9L421.0 268.8L421.2 268.4L421.2 270.0L421.5 269.3L421.5 268.5L421.7 268.2L421.7 271.0L422.0 269.0L422.0 269.4L422.3 268.6L422.3 270.6L422.5 269.3L422.5 270.4L422.8 270.4L422.8 268.4L423.0 269.3L423.0 269.0L423.2 270.2L423.2 268.7L423.5 268.7L423.5 269.4L423.7 268.7L423.7 270.5L424.0 269.3L424.0 269.9L424.2 268.1L424.2 270.0L424.5 268.9L424.5 269.7L424.7 267.8L424.7 270.4L425.0 270.1L425.0 268.5L425.3 270.5L425.3 268.4L425.5 269.0L425.5 269.5L425.8 269.7L425.8 268.4L426.0 269.4L426.0 269.5L426.3 270.2L426.3 268.6L426.5 269.3L426.5 269.5L426.7 270.2L426.7 268.8L427.0 269.5L427.0 268.4L427.2 268.4L427.2 270.4L427.5 269.7L427.5 269.5L427.7 268.4L427.7 270.1L428.0 269.2L428.0 270.9L428.3 270.9L428.3 268.6L428.5 268.7L428.5 270.0L428.8 268.7L428.8 270.5L429.0 268.9L429.0 269.8L429.2 268.8L429.2 270.2L429.5 269.5L429.5 269.2L429.7 270.0L429.7 268.9L430.0 269.0L430.0 269.3L430.2 270.0L430.2 268.3L430.5 269.4L430.5 269.3L430.7 269.8L430.7 268.4L431.0 269.0L431.0 269.6L431.3 270.2L431.3 268.6L431.5 269.1L431.5 268.8L431.8 268.8L431.8 269.8L432.0 269.7L432.0 269.0L432.3 270.0L432.3 268.6L432.5 269.1L432.5 270.0L432.7 270.0L432.7 269.0L433.0 269.9L433.0 269.6L433.2 270.2L433.2 268.8L433.5 269.5L433.5 269.6L433.7 269.1L433.7 270.2L434.0 270.2L434.0 269.2L434.3 269.9L434.3 268.9L434.5 269.4L434.5 270.0L434.8 268.5L434.8 270.0L435.0 269.7L435.0 270.0L435.2 270.0L435.2 268.8L435.5 269.9L435.5 269.4L435.7 269.9L435.7 268.8L436.0 269.5L436.0 269.6L436.2 269.0L436.2 269.9L436.5 269.1L436.5 268.9L436.7 268.8L436.7 270.4L437.0 270.3L437.0 269.9L437.3 267.6L437.3 271.2L437.5 271.2L437.5 268.9L437.8 271.1L437.8 267.5L438.0 269.8L438.0 270.7L438.3 270.7L438.3 267.6L438.5 269.5L438.5 268.3L438.7 270.6L438.7 268.0L439.0 269.8L439.0 268.8L439.2 270.1L439.2 268.7L439.5 269.6L439.5 269.4L439.7 268.6L439.7 270.3L440.0 270.3L440.0 269.3L440.3 268.8L440.3 270.2L440.5 269.7L440.5 270.3L440.8 271.2L440.8 267.5L441.0 269.5L441.0 270.4L441.2 267.7L441.2 271.0L441.5 268.7L441.5 270.1L441.7 270.5L441.7 268.1L442.0 269.4L442.0 270.0L442.2 268.3L442.2 270.7L442.5 269.3L442.5 268.9L442.7 268.3L442.7 270.6L443.0 269.5L443.0 269.3L443.3 268.5L443.3 270.8L443.5 269.0L443.5 269.7L443.8 268.1L443.8 270.3L444.0 268.6L444.0 269.7L444.3 270.3L444.3 268.5L444.5 269.4L444.5 270.1L444.7 270.5L444.7 267.9L445.0 269.8L445.0 268.3L445.2 268.3L445.2 270.7L445.5 270.2L445.5 269.7L445.7 268.5L445.7 270.5L446.0 269.8L446.0 269.3L446.3 270.3L446.3 268.6L446.5 269.6L446.5 269.0L446.8 268.0L446.8 270.2L447.0 269.7L447.0 269.7L447.2 270.5L447.2 268.7L447.5 269.1L447.5 269.1L447.7 268.8L447.7 270.2L448.0 269.7L448.0 269.4L448.2 269.7L448.2 268.8L448.5 269.5L448.5 269.5L448.7 268.9L448.7 270.3L449.0 269.5L449.0 270.2L449.3 270.8L449.3 268.5L449.5 268.9L449.5 269.2L449.8 268.1L449.8 271.0L450.0 269.8L450.0 269.6L450.3 270.1L450.3 268.4L450.5 269.4L450.5 269.0L450.7 270.2L450.7 268.6L451.0 269.4L451.0 269.1L451.2 268.4L451.2 270.3L451.5 269.5L451.5 269.2L451.7 268.4L451.7 270.6L452.0 270.3L452.0 268.5L452.3 268.5L452.3 270.8L452.5 269.4L452.5 269.2L452.8 270.3L452.8 267.8L453.0 269.7L453.0 270.1L453.2 270.1L453.2 268.7L453.5 269.9L453.5 269.4L453.7 270.0L453.7 268.7L454.0 269.5L454.0 269.7L454.2 270.6L454.2 268.7L454.5 269.2L454.5 269.1L454.7 268.2L454.7 270.2L455.0 269.4L455.0 269.6L455.3 268.1L455.3 270.7L455.5 269.4L455.5 268.4L455.8 270.7L455.8 268.3L456.0 268.7L456.0 268.9L456.3 268.5L456.3 270.2L456.5 268.5L456.5 269.6L456.7 268.0L456.7 271.2L457.0 269.7L457.0 270.1L457.2 270.9L457.2 268.3L457.5 270.4L457.5 268.8L457.7 270.4L457.7 268.7L458.0 270.2L458.0 268.5L458.3 270.9L458.3 268.0L458.5 269.2L458.5 270.3L458.8 270.3L458.8 268.3L459.0 268.3L459.0 270.2L459.2 267.7L459.2 270.8L459.5 269.3L459.5 269.9L459.7 268.0L459.7 270.8L460.0 270.1L460.0 268.2L460.2 267.8L460.2 271.4L460.5 269.4L460.5 268.4L460.7 271.4L460.7 268.2L461.0 268.3L461.0 270.4L461.3 270.8L461.3 267.0L461.5 267.0L461.5 271.6L461.8 271.6L461.8 267.4L462.0 270.8L462.0 268.1L462.3 271.4L462.3 267.0L462.5 270.6L462.5 268.6L462.7 267.3L462.7 271.4L463.0 271.2L463.0 266.3L463.2 266.3L463.2 272.8L463.5 268.0L463.5 272.5L463.7 266.1L463.7 272.8L464.0 267.5L464.0 272.5L464.3 266.2L464.3 272.7L464.5 272.5L464.5 265.8L464.8 273.6L464.8 264.9L465.0 271.8L465.0 265.1L465.2 274.7L465.2 264.6L465.5 271.9L465.5 266.0L465.7 264.3L465.7 274.7L466.0 268.7L466.0 269.7L466.2 254.2L466.2 330.8L466.5 269.8L466.5 269.2L466.7 267.2L466.7 271.8L467.0 270.8L467.0 267.2L467.3 266.5L467.3 271.9L467.5 270.9L467.5 266.9L467.8 266.6L467.8 271.7L468.0 268.4L468.0 270.6L468.3 267.8L468.3 271.5L468.5 268.3L468.5 269.9L468.7 270.8L468.7 267.2L469.0 269.3L469.0 267.8L469.2 271.3L469.2 267.3L469.5 268.7L469.5 270.6L469.7 271.1L469.7 267.6L470.0 267.6L470.0 271.3L470.3 272.3L470.3 266.4L470.5 270.0L470.5 267.5L470.8 267.0L470.8 271.9L471.0 271.1L471.0 269.2L471.2 272.0L471.2 266.8L471.5 271.1L471.5 267.9L471.7 266.2L471.7 272.4L472.0 267.1L472.0 269.7L472.2 272.9L472.2 267.2L472.5 267.2L472.5 270.8L472.7 270.9L472.7 200.8L473.0 200.8L473.0 291.1L473.3 341.6L473.3 248.8L473.5 281.2L473.5 259.3L473.8 249.9L473.8 288.9L474.0 256.0L474.0 279.1L474.3 251.6L474.3 285.2L474.5 257.2L474.5 277.9L474.7 253.9L474.7 283.6L475.0 275.2L475.0 259.3L475.2 259.3L475.2 282.2L475.5 261.0L475.5 273.2L475.7 261.6L475.7 276.2L476.0 265.5L476.0 273.7L476.3 264.2L476.3 276.7L476.5 264.7L476.5 272.7L476.8 264.4L476.8 274.8L477.0 266.0L477.0 272.9L477.2 273.0L477.2 264.5L477.5 266.9L477.5 271.9L477.7 265.7L477.7 273.2L478.0 271.9L478.0 267.8L478.2 271.9L478.2 266.1L478.5 270.4L478.5 267.3L478.7 266.9L478.7 271.6L479.0 268.1L479.0 271.2L479.3 266.7L479.3 271.8L479.5 267.9L479.5 271.3L479.8 272.1L479.8 267.1L480.0 270.6L480.0 268.2L480.3 273.1L480.3 267.4L480.5 269.5L480.5 267.0L480.7 267.0L480.7 272.5L481.0 270.8L481.0 268.3L481.2 267.0L481.2 271.7L481.5 267.8L481.5 270.8L481.7 266.7L481.7 271.7L482.0 268.0L482.0 266.9L482.3 272.9L482.3 265.8L482.5 266.3L482.5 272.7L482.8 265.3L482.8 273.9L483.0 265.9L483.0 273.8L483.2 274.7L483.2 264.3L483.5 264.3L483.5 273.7L483.7 264.9L483.7 275.2L484.0 274.6L484.0 266.8L484.2 274.0L484.2 264.4L484.5 271.1L484.5 267.3L484.7 272.6L484.7 266.1L485.0 268.0L485.0 270.2L485.3 272.1L485.3 267.6L485.5 270.4L485.5 267.9L485.8 266.8L485.8 272.0L486.0 269.2L486.0 270.5L486.3 267.5L486.3 271.9L486.5 269.4L486.5 270.8L486.7 268.0L486.7 271.3L487.0 268.2L487.0 270.1L487.2 270.5L487.2 267.9L487.5 270.1L487.5 268.8L487.7 271.0L487.7 268.1L488.0 269.0L488.0 269.1L488.3 268.5L488.3 270.6L488.5 268.7L488.5 269.4L488.8 268.4L488.8 271.2L489.0 268.8L489.0 270.0L489.2 270.7L489.2 268.0L489.5 268.8L489.5 270.0L489.7 268.6L489.7 270.2L490.0 269.4L490.0 269.6L490.2 268.5L490.2 270.0L490.5 269.1L490.5 269.4L490.7 270.5L490.7 268.7L491.0 269.2L491.0 269.4L491.3 268.6L491.3 270.0L491.5 270.0L491.5 270.0L491.8 268.4L491.8 270.0L492.0 269.3L492.0 270.4L492.3 270.4L492.3 268.9L492.5 269.6L492.5 268.5L492.7 268.3L492.7 270.7L493.0 269.1L493.0 269.7L493.2 267.5L493.2 270.1L493.5 269.3L493.5 270.0L493.7 270.3L493.7 268.4L494.0 268.7L494.0 268.7L494.3 268.5L494.3 270.1L494.5 269.6L494.5 269.2L494.8 268.6L494.8 270.1L495.0 269.6L495.0 269.5L495.2 270.1L495.2 268.6L495.5 269.7L495.5 269.7L495.7 268.9L495.7 270.1L496.0 269.3L496.0 269.2L496.2 269.0L496.2 270.4L496.5 270.0L496.5 269.8L496.7 268.6L496.7 269.9L497.0 269.2L497.0 270.3L497.3 270.5L497.3 268.8L497.5 270.1L497.5 269.5L497.8 268.7L497.8 270.4L498.0 269.2L498.0 270.5L498.3 270.5L498.3 268.2L498.5 268.6L498.5 268.9L498.7 270.7L498.7 268.4L499.0 269.4L499.0 269.6L499.2 268.3L499.2 270.5L499.5 269.8L499.5 269.0L499.7 270.6L499.7 268.7L500.0 270.6L500.0 268.7L500.3 268.5L500.3 270.7L500.5 268.9L500.5 268.3L500.8 270.5L500.8 267.2L501.0 269.9L501.0 270.5L501.2 271.0L501.2 268.0L501.5 270.3L501.5 269.5L501.7 271.4L501.7 268.4L502.0 268.5L502.0 268.6L502.2 268.6L502.2 270.4L502.5 269.5L502.5 268.9L502.7 268.9L502.7 270.1L503.0 269.1L503.0 269.2L503.3 268.6L503.3 270.2L503.5 269.7L503.5 269.7L503.8 268.7L503.8 270.2L504.0 268.9L504.0 269.0L504.3 268.6L504.3 269.9L504.5 269.2L504.5 269.5L504.7 270.0L504.7 268.7L505.0 269.2L505.0 270.1L505.2 270.2L505.2 268.8L505.5 268.8L505.5 268.9L505.7 268.6L505.7 270.5L506.0 269.6L506.0 269.1L506.3 268.8L506.3 270.0L506.5 270.0L506.5 269.4L506.8 268.8L506.8 269.9L507.0 269.2L507.0 269.5L507.2 268.1L507.2 270.4L507.5 269.6L507.5 269.0L507.7 269.0L507.7 270.1L508.0 269.0L508.0 269.7L508.2 270.5L508.2 268.6L508.5 269.6L508.5 269.4L508.7 271.0L508.7 268.9L509.0 269.8L509.0 270.2L509.3 268.4L509.3 270.3L509.5 269.1L509.5 269.5L509.8 268.3L509.8 270.1L510.0 270.1L510.0 270.7L510.3 271.2L510.3 268.7L510.5 269.7L510.5 269.8L510.7 270.2L510.7 268.1L511.0 270.2L511.0 269.9L511.2 268.4L511.2 270.1L511.5 269.3L511.5 269.5L511.7 270.2L511.7 268.8L512.0 269.7L512.0 270.1L512.3 270.1L512.3 269.0L512.5 269.1L512.5 269.4L512.8 270.0L512.8 268.2L513.0 270.0L513.0 269.7L513.2 270.1L513.2 268.7L513.5 269.5L513.5 269.0L513.7 269.8L513.7 268.8L514.0 269.6L514.0 269.5L514.2 270.0L514.2 268.5L514.5 268.6L514.5 269.4L514.7 270.1L514.7 268.7L515.0 270.0L515.0 269.7L515.3 269.9L515.3 268.9L515.5 269.4L515.5 268.8L515.8 268.5L515.8 270.2L516.0 269.5L516.0 269.1L516.3 269.9L516.3 268.8L516.5 269.7L516.5 269.7L516.7 269.9L516.7 268.6L517.0 269.6L517.0 269.6L517.2 268.6L517.2 270.0L517.5 268.7L517.5 269.6L517.7 268.3L517.7 270.0L518.0 269.1L518.0 269.6L518.3 270.1L518.3 268.6L518.5 269.1L518.5 269.0L518.8 268.5L518.8 270.7L519.0 269.6L519.0 269.3L519.2 268.9L519.2 269.8L519.5 269.3L519.5 269.2L519.7 268.7L519.7 270.0L520.0 269.6L520.0 269.2L520.2 270.4L520.2 268.3L520.5 269.5L520.5 269.9L520.7 270.6L520.7 268.5L521.0 269.5L521.0 269.8L521.3 270.2L521.3 268.7L521.5 269.6L521.5 269.9L521.8 270.6L521.8 268.8L522.0 269.0L522.0 269.8L522.3 270.0L522.3 268.5L522.5 269.6L522.5 269.8L522.7 269.9L522.7 268.5L523.0 269.1L523.0 269.7L523.2 269.9L523.2 268.6L523.5 269.7L523.5 269.8L523.7 270.0L523.7 268.7L524.0 269.2L524.0 269.7L524.3 268.6L524.3 270.0L524.5 270.0L524.5 269.8L524.8 268.5L524.8 270.2L525.0 269.3L525.0 269.6L525.2 268.8L525.2 270.3L525.5 269.2L525.5 270.0L525.7 270.0L525.7 268.9L526.0 269.8L526.0 269.8L526.2 269.9L526.2 268.8L526.5 268.8L526.5 268.5L526.7 268.5L526.7 270.6L527.0 269.5L527.0 269.3L527.3 268.5L527.3 270.2L527.5 269.1L527.5 268.8L527.8 267.6L527.8 271.2L528.0 269.6L528.0 269.1L528.3 270.1L528.3 268.4L528.5 269.3L528.5 268.8L528.7 270.4L528.7 268.7L529.0 269.6L529.0 269.5L529.2 268.8L529.2 270.4L529.5 269.1L529.5 269.7L529.7 269.9L529.7 268.6L530.0 269.5L530.0 269.3L530.3 268.6L530.3 270.3L530.5 269.1L530.5 269.6L530.8 268.7L530.8 270.2L531.0 269.4L531.0 268.5L531.2 268.5L531.2 270.2L531.5 269.9L531.5 269.3L531.7 268.9L531.7 270.2L532.0 269.9L532.0 269.2L532.2 268.0L532.2 270.2L532.5 269.2L532.5 269.7L532.7 270.6L532.7 268.4L533.0 269.7L533.0 269.4L533.3 268.8L533.3 270.0L533.5 269.3L533.5 269.3L533.8 268.5L533.8 270.2L534.0 269.2L534.0 269.9L534.3 268.7L534.3 270.1L534.5 269.6L534.5 269.8L534.7 269.9L534.7 268.5L535.0 269.4L535.0 269.5L535.2 270.3L535.2 268.4L535.5 268.4L535.5 269.9L535.7 270.2L535.7 268.6L536.0 268.7L536.0 269.5L536.3 270.8L536.3 268.3L536.5 269.0L536.5 270.1L536.8 270.2L536.8 268.6L537.0 269.5L537.0 269.3L537.2 270.7L537.2 268.4L537.5 269.3L537.5 270.1L537.7 270.1L537.7 268.7L538.0 269.0L538.0 269.1L538.2 269.7L538.2 269.0L538.5 269.5L538.5 269.6L538.7 268.4L538.7 270.1L539.0 269.6L539.0 269.3L539.3 270.3L539.3 269.0L539.5 269.6L539.5 269.6L539.8 270.5L539.8 269.0L540.0 270.3L540.0 269.0L540.3 270.3L540.3 268.5L540.5 268.7L540.5 269.6L540.7 270.7L540.7 268.2L541.0 269.7L541.0 269.5L541.2 268.0L541.2 269.9L541.5 269.6L541.5 268.7L541.7 268.7L541.7 270.2L542.0 268.8L542.0 269.3L542.3 270.4L542.3 268.4L542.5 268.4L542.5 269.9L542.8 270.4L542.8 268.5L543.0 269.7L543.0 268.9L543.2 269.9L543.2 268.5L543.5 269.0L543.5 269.6L543.7 268.9L543.7 270.0L544.0 270.0L544.0 269.6L544.2 268.6L544.2 270.1L544.5 270.1L544.5 269.6L544.7 269.8L544.7 268.7L545.0 269.4L545.0 269.8L545.3 270.1L545.3 268.4L545.5 268.7L545.5 268.7L545.8 270.8L545.8 268.3L546.0 269.6L546.0 270.0L546.3 268.1L546.3 271.0L546.5 269.3L546.5 270.3L546.7 268.9L546.7 270.4L547.0 269.7L547.0 270.2L547.2 268.5L547.2 270.3L547.5 269.2L547.5 269.5L547.7 268.4L547.7 270.5L548.0 269.4L548.0 270.3L548.3 270.3L548.3 267.9L548.5 270.3L548.5 270.3L548.8 270.3L548.8 268.4L549.0 269.2L549.0 269.6L549.2 269.9L549.2 268.6L549.5 269.8L549.5 268.9L549.7 268.1L549.7 269.7L550.0 269.7L550.0 269.3L550.2 270.2L550.2 268.9L550.5 269.1L550.5 269.3L550.7 269.0L550.7 270.0L551.0 269.4L551.0 269.6L551.3 270.3L551.3 268.7L551.5 269.3L551.5 269.0L551.8 268.7L551.8 270.1L552.0 269.5L552.0 269.1L552.3 270.7L552.3 268.4L552.5 268.4L552.5 269.1L552.7 270.3L552.7 268.7L553.0 269.3L553.0 269.2L553.2 268.8L553.2 270.2L553.5 269.4L553.5 268.7L553.7 270.1L553.7 268.3L554.0 269.4L554.0 269.1L554.3 268.5L554.3 270.8L554.5 269.1L554.5 269.9L554.8 270.4L554.8 268.2L555.0 268.9L555.0 270.1L555.2 270.1L555.2 268.8L555.5 269.4L555.5 269.1L555.7 268.4L555.7 270.0L556.0 269.5L556.0 269.8L556.2 268.7L556.2 270.6L556.5 269.3L556.5 269.8L556.7 269.8L556.7 268.2L557.0 269.1L557.0 269.4L557.3 269.0L557.3 270.5L557.5 269.8L557.5 270.0L557.8 270.1L557.8 268.3L558.0 269.5L558.0 268.7L558.3 270.1L558.3 268.0L558.5 268.3L558.5 269.2L558.7 270.4L558.7 268.4L559.0 269.8L559.0 269.6L559.2 268.4L559.2 270.1L559.5 269.2L559.5 269.2L559.7 270.2L559.7 268.6L560.0 269.2L560.0 269.6L560.3 268.8L560.3 270.4L560.5 268.9L560.5 268.9L560.8 270.1L560.8 268.4L561.0 269.1L561.0 268.4L561.2 268.4L561.2 270.2L561.5 269.0L561.5 269.4L561.7 268.4L561.7 270.0L562.0 269.2L562.0 269.3L562.2 268.8L562.2 270.1L562.5 269.3L562.5 269.1L562.7 268.6L562.7 270.5L563.0 268.8L563.0 268.7L563.3 268.4L563.3 270.1L563.5 269.0L563.5 269.5L563.8 270.2L563.8 268.7L564.0 269.1L564.0 269.3L564.3 268.5L564.3 271.1L564.5 268.7L564.5 268.0L564.7 268.0L564.7 270.3L565.0 269.7L565.0 269.2L565.2 268.3L565.2 270.2L565.5 269.3L565.5 269.7L565.7 268.8L565.7 270.3L566.0 269.9L566.0 269.5L566.3 270.0L566.3 268.8L566.5 269.2L566.5 269.5L566.8 268.9L566.8 270.1L567.0 269.6L567.0 269.1L567.2 268.8L567.2 270.1L567.5 269.3L567.5 270.0L567.7 270.0L567.7 268.5L568.0 268.7L568.0 269.5L568.2 269.8L568.2 268.8L568.5 269.6L568.5 269.9L568.7 270.2L568.7 268.7L569.0 268.9L569.0 269.0L569.3 270.0L569.3 268.8L569.5 269.6L569.5 269.0L569.8 268.7L569.8 270.9L570.0 269.8L570.0 268.0L570.3 268.0L570.3 270.6L570.5 269.5L570.5 270.5L570.7 268.6L570.7 270.9L571.0 269.6L571.0 269.5L571.2 268.3L571.2 270.4L571.5 269.7L571.5 269.9L571.7 268.3L571.7 270.9L572.0 269.0L572.0 269.5L572.3 270.5L572.3 268.4L572.5 269.0L572.5 269.0L572.8 270.4L572.8 268.7L573.0 268.7L573.0 269.4L573.2 268.6L573.2 270.4L573.5 269.6L573.5 269.5L573.7 270.1L573.7 268.6L574.0 268.9L574.0 270.1L574.2 267.9L574.2 270.5L574.5 270.0L574.5 269.3L574.7 270.2L574.7 268.4L575.0 268.4L575.0 269.5L575.3 268.2L575.3 270.0L575.5 269.5L575.5 269.5L575.8 269.9L575.8 268.8L576.0 269.4L576.0 269.3L576.3 270.2L576.3 268.8L576.5 269.7L576.5 270.0L576.7 270.0L576.7 268.7L577.0 268.7L577.0 269.8L577.2 270.2L577.2 268.9L577.5 269.2L577.5 269.1L577.7 270.0L577.7 268.5L578.0 269.2L578.0 269.2L578.3 270.3L578.3 268.6L578.5 269.6L578.5 269.3L578.8 268.6L578.8 270.2L579.0 268.6L579.0 269.1L579.2 270.3L579.2 268.7L579.5 269.7L579.5 269.6L579.7 269.8L579.7 268.6L580.0 269.3L580.0 270.0L580.2 270.0L580.2 268.3L580.5 269.0L580.5 269.1L580.7 269.9L580.7 268.6L581.0 268.8L581.0 269.0L581.3 268.3L581.3 270.5L581.5 268.6L581.5 269.6L581.8 267.8L581.8 270.1L582.0 269.1L582.0 268.8L582.3 270.2L582.3 267.9L582.5 269.0L582.5 269.4L582.7 270.0L582.7 268.5L583.0 268.8L583.0 268.2L583.2 268.2L583.2 270.5L583.5 269.8L583.5 269.4L583.7 268.6L583.7 269.9L584.0 269.1L584.0 269.6L584.3 270.2L584.3 268.9L584.5 268.9L584.5 269.1L584.8 269.0L584.8 270.1L585.0 269.8L585.0 269.6L585.2 270.4L585.2 267.8L585.5 269.3L585.5 268.8L585.7 268.4L585.7 270.7L586.0 270.7L586.0 269.0L586.2 267.7L586.2 270.9L586.5 268.9L586.5 269.3L586.7 267.8L586.7 270.5L587.0 268.9L587.0 269.2L587.3 270.6L587.3 268.6L587.5 269.2L587.5 269.1L587.8 270.4L587.8 268.7L588.0 269.3L588.0 270.0L588.3 268.6L588.3 270.1L588.5 269.2L588.5 269.2L588.7 268.9L588.7 269.7L589.0 269.3L589.0 268.7L589.2 270.4L589.2 268.5L589.5 269.0L589.5 269.4L589.7 268.5L589.7 271.1L590.0 269.3L590.0 269.6L590.3 268.5L590.3 270.5L590.5 269.6L590.5 270.3L590.8 270.3L590.8 268.6L591.0 269.6L591.0 268.8L591.2 270.5L591.2 268.2L591.5 268.5L591.5 270.0L591.7 270.0L591.7 268.0L592.0 268.8L592.0 269.3L592.2 270.4L592.2 268.5L592.5 269.7L592.5 270.4L592.7 270.4L592.7 268.2L593.0 270.2L593.0 269.5L593.3 270.4L593.3 268.8L593.5 268.9L593.5 269.8L593.8 270.1L593.8 268.6L594.0 269.6L594.0 269.8L594.3 269.9L594.3 268.7L594.5 269.6L594.5 268.8L594.7 268.6L594.7 270.4L595.0 269.4L595.0 269.2L595.2 270.0L595.2 268.7L595.5 269.5L595.5 269.0L595.7 268.5L595.7 269.8L596.0 269.7L596.0 269.2L596.3 268.8L596.3 269.9L596.5 269.2L596.5 269.8L596.8 268.5L596.8 270.1L597.0 269.0L597.0 269.4L597.2 270.2L597.2 268.5L597.5 269.0L597.5 269.3L597.7 268.8L597.7 270.0L598.0 269.3L598.0 269.3L598.2 270.1L598.2 268.2L598.5 268.7L598.5 269.3L598.7 268.6L598.7 270.5L599.0 269.6L599.0 269.2L599.3 271.0L599.3 267.4L599.5 270.2L599.5 270.0L599.8 267.4L599.8 270.1L600.0 269.8L600.0 270.0L600.3 270.0L600.3 268.6L600.5 269.7L600.5 269.6L600.7 268.2L600.7 269.8L601.0 269.7L601.0 269.8L601.2 268.1L601.2 270.2L601.5 269.0L601.5 269.2L601.7 270.4L601.7 268.7L602.0 269.1L602.0 269.1L602.3 270.2L602.3 268.1L602.5 268.5L602.5 269.4L602.8 268.0L602.8 271.0L603.0 268.7L603.0 269.6L603.2 267.6L603.2 270.8L603.5 270.8L603.5 267.5L603.7 267.5L603.7 270.0L604.0 268.6L604.0 268.6L604.2 271.1L604.2 268.6L604.5 268.9L604.5 269.0L604.7 271.3L604.7 268.6L605.0 270.1L605.0 269.3L605.3 270.3L605.3 268.3L605.5 269.6L605.5 269.8L605.8 268.1L605.8 270.4L606.0 268.8L606.0 269.4L606.3 270.4L606.3 268.3L606.5 268.7L606.5 269.3L606.7 270.4L606.7 268.4L607.0 269.8L607.0 268.6L607.2 268.6L607.2 270.5L607.5 269.1L607.5 268.5L607.7 268.5L607.7 270.2L608.0 269.7L608.0 269.1L608.3 270.6L608.3 268.4L608.5 268.5L608.5 269.4L608.8 268.6L608.8 270.1L609.0 269.3L609.0 268.6L609.2 268.6L609.2 270.2L609.5 269.4L609.5 269.2L609.7 268.8L609.7 270.5L610.0 269.3L610.0 269.4L610.2 269.1L610.2 269.9L610.5 269.8L610.5 269.6L610.7 268.5L610.7 270.5L611.0 269.1L611.0 269.0L611.3 270.2L611.3 268.4L611.5 269.9L611.5 269.9L611.8 268.7L611.8 270.1L612.0 269.5L612.0 269.4L612.3 269.9L612.3 268.7L612.5 269.4L612.5 269.0L612.7 270.9L612.7 268.6L613.0 268.7L613.0 269.0L613.2 270.5L613.2 268.7L613.5 269.1L613.5 269.2L613.7 268.1L613.7 270.7L614.0 269.8L614.0 270.3L614.3 268.6L614.3 271.1L614.5 271.1L614.5 268.9L614.8 268.3L614.8 270.5L615.0 269.7L615.0 268.8L615.2 268.7L615.2 270.1L615.5 269.7L615.5 269.3L615.7 270.1L615.7 268.7L616.0 268.9L616.0 269.3L616.2 270.1L616.2 268.6L616.5 268.6L616.5 269.9L616.7 270.6L616.7 267.9L617.0 269.5L617.0 269.3L617.3 270.9L617.3 267.8L617.5 269.0L617.5 270.2L617.8 268.2L617.8 270.6L618.0 270.6L618.0 269.2L618.3 268.4L618.3 270.5L618.5 269.0L618.5 270.1L618.7 269.0L618.7 270.1L619.0 269.5L619.0 269.2L619.2 269.7L619.2 268.1L619.5 269.5L619.5 269.0L619.7 267.9L619.7 270.2L620.0 269.3L620.0 268.3L620.3 268.3L620.3 271.1L620.5 271.1L620.5 268.9L620.8 270.6L620.8 268.3L621.0 269.7L621.0 270.2L621.2 270.2L621.2 268.8L621.5 269.8L621.5 269.3L621.7 269.9L621.7 268.7L622.0 269.1L622.0 269.4L622.2 268.8L622.2 270.0L622.5 269.2L622.5 269.2L622.7 268.9L622.7 270.5L623.0 270.0L623.0 269.2L623.3 270.2L623.3 268.6L623.5 269.8L623.5 269.6L623.8 270.1L623.8 268.6L624.0 268.6L624.0 269.7L624.3 270.6L624.3 268.8L624.5 268.8L624.5 270.3L624.7 270.4L624.7 268.9L625.0 269.2L625.0 268.8L625.2 268.6L625.2 270.1L625.5 269.1L625.5 268.6L625.7 270.1L625.7 268.3L626.0 270.1L626.0 269.6L626.3 270.4L626.3 268.2L626.5 269.2L626.5 269.8L626.8 269.0L626.8 270.3L627.0 269.8L627.0 269.3L627.2 270.4L627.2 269.0L627.5 269.7L627.5 269.3L627.7 268.6L627.7 270.1L628.0 269.6L628.0 269.0L628.2 268.6L628.2 270.2L628.5 269.4L628.5 269.2L628.7 269.0L628.7 270.4L629.0 269.5L629.0 268.8L629.3 268.8L629.3 269.7L629.5 269.5L629.5 269.8L629.8 268.8L629.8 270.3L630.0 269.5L630.0 269.3L630.3 268.8L630.3 270.0L630.5 269.3L630.5 268.5L630.7 268.5L630.7 269.9L631.0 269.4L631.0 269.1L631.2 270.1L631.2 268.5L631.5 269.4L631.5 269.6L631.7 268.8L631.7 270.4L632.0 270.4L632.0 269.9L632.3 270.5L632.3 268.2L632.5 269.5L632.5 269.0L632.8 270.2L632.8 268.6L633.0 269.7L633.0 269.6L633.2 268.6L633.2 269.9L633.5 269.9L633.5 268.4L633.7 268.4L633.7 269.9L634.0 269.4L634.0 269.4L634.2 269.9L634.2 268.9L634.5 269.3L634.5 269.2L634.7 268.7L634.7 270.5L635.0 269.2L635.0 269.7L635.3 268.9L635.3 270.0L635.5 269.6L635.5 269.0L635.8 268.7L635.8 270.3L636.0 268.9L636.0 269.2L636.3 268.6L636.3 270.3L636.5 269.5L636.5 269.1L636.7 270.2L636.7 268.8L637.0 268.9L637.0 268.7L637.2 268.6L637.2 270.5L637.5 268.9L637.5 269.9L637.7 268.5L637.7 270.9L638.0 270.5L638.0 269.6L638.3 268.5L638.3 270.1L638.5 270.0L638.5 269.2L638.8 268.6L638.8 270.3L639.0 270.0L639.0 269.3L639.2 270.1L639.2 268.8L639.5 269.7L639.5 268.9L639.7 268.9L639.7 270.2L640.0 269.4L640.0 269.8L640.2 267.8L640.2 269.8L640.5 269.7L640.5 269.0L640.7 270.4L640.7 268.9L641.0 269.1L641.0 269.6L641.3 270.0L641.3 268.7L641.5 269.3L641.5 269.5L641.8 270.2L641.8 268.8L642.0 269.4L642.0 269.3L642.3 270.1L642.3 268.8L642.5 269.2L642.5 269.2L642.7 270.3L642.7 268.0L643.0 268.0L643.0 268.8L643.2 267.7L643.2 272.1L643.5 268.4L643.5 269.4L643.7 270.9L643.7 267.9L644.0 269.8L644.0 269.1L644.3 270.2L644.3 268.7L644.5 269.4L644.5 269.9L644.8 269.9L644.8 267.3L645.0 269.0L645.0 269.8L645.2 268.2L645.2 270.0L645.5 270.0L645.5 268.7L645.7 270.0L645.7 268.5L646.0 269.2L646.0 268.7L646.2 268.6L646.2 270.5L646.5 269.2L646.5 269.8L646.7 270.2L646.7 268.5L647.0 269.5L647.0 270.2L647.3 270.2L647.3 268.4L647.5 269.3L647.5 269.2L647.8 268.4L647.8 270.2L648.0 270.2L648.0 269.2L648.3 268.8L648.3 270.6L648.5 269.8L648.5 270.5L648.7 270.5L648.7 269.0L649.0 269.0L649.0 269.6L649.2 268.6L649.2 270.4L649.5 269.5L649.5 269.2L649.7 270.5L649.7 268.3L650.0 269.5L650.0 269.6L650.3 268.3L650.3 270.2L650.5 269.2L650.5 269.0L650.8 268.4L650.8 269.9L651.0 269.3L651.0 269.3L651.2 268.7L651.2 270.0L651.5 269.4L651.5 269.4L651.7 268.8L651.7 270.2L652.0 269.2L652.0 269.3L652.2 270.1L652.2 268.9L652.5 269.3L652.5 269.6L652.7 268.4L652.7 269.9L653.0 269.2L653.0 269.2L653.3 268.7L653.3 269.9L653.5 269.8L653.5 268.7L653.8 270.6L653.8 268.7L654.0 269.5L654.0 268.9L654.3 268.8L654.3 270.3L654.5 270.3L654.5 269.8L654.7 270.6L654.7 268.8L655.0 269.4L655.0 270.1L655.2 268.9L655.2 270.2L655.5 269.3L655.5 269.2L655.7 268.9L655.7 270.2L656.0 269.5L656.0 269.7L656.3 268.9L656.3 270.4L656.5 269.7L656.5 269.1L656.8 270.3L656.8 268.5L657.0 268.5L657.0 269.6L657.2 268.4L657.2 270.0L657.5 269.8L657.5 269.4L657.7 270.0L657.7 268.8L658.0 269.2L658.0 269.0L658.2 268.9L658.2 269.8L658.5 269.8L658.5 269.6L658.7 268.6L658.7 270.1L659.0 270.1L659.0 268.6L659.3 268.6L659.3 270.0L659.5 269.1L659.5 269.1L659.8 268.9L659.8 270.1L660.0 269.1L660.0 269.1L660.3 270.2L660.3 268.9L660.5 269.7L660.5 268.8L660.7 268.0L660.7 270.1L661.0 270.1L661.0 269.0L661.2 268.7L661.2 270.1L661.5 269.5L661.5 269.2L661.7 270.7L661.7 268.5L662.0 269.9L662.0 269.5L662.3 268.3L662.3 270.8L662.5 270.2L662.5 269.8L662.8 270.6L662.8 268.2L663.0 269.4L663.0 269.8L663.2 270.3L663.2 268.5L663.5 268.5L663.5 269.1L663.7 270.0L663.7 268.4L664.0 269.1L664.0 268.2L664.2 268.2L664.2 270.2L664.5 269.6L664.5 269.2L664.7 269.0L664.7 270.0L665.0 269.1L665.0 269.3L665.3 270.6L665.3 268.7L665.5 269.9L665.5 268.4L665.8 268.4L665.8 270.1L666.0 268.8L666.0 269.4L666.3 270.8L666.3 268.0L666.5 268.4L666.5 268.5L666.7 268.2L666.7 270.2L667.0 269.5L667.0 269.3L667.2 270.6L667.2 267.8L667.5 270.0L667.5 270.0L667.7 270.1L667.7 269.0L668.0 269.2L668.0 270.0L668.3 270.4L668.3 269.0L668.5 269.8L668.5 270.0L668.8 270.1L668.8 268.5L669.0 269.0L669.0 269.1L669.2 269.8L669.2 268.6L669.5 269.6L669.5 269.8L669.7 270.9L669.7 267.9L670.0 269.5L670.0 269.2L670.2 268.6L670.2 270.3L670.5 269.2L670.5 268.3L670.7 268.3L670.7 270.1L671.0 269.5L671.0 269.3L671.3 268.7L671.3 270.2L671.5 269.3L671.5 269.7L671.8 270.6L671.8 268.2L672.0 269.2L672.0 269.5L672.3 268.9L672.3 270.4L672.5 269.9L672.5 269.7L672.7 268.8L672.7 270.2L673.0 270.2L673.0 269.6L673.2 270.3L673.2 268.3L673.5 269.7L673.5 270.0L673.7 270.1L673.7 268.4L674.0 269.4L674.0 269.8L674.3 268.5L674.3 270.5L674.5 269.4L674.5 269.4L674.8 268.7L674.8 270.1L675.0 269.7L675.0 269.0L675.2 268.9L675.2 270.2L675.5 269.1L675.5 269.3L675.7 268.8L675.7 270.4L676.0 269.8L676.0 268.8L676.2 268.8L676.2 269.9L676.5 269.2L676.5 269.1L676.7 270.3L676.7 268.5L677.0 269.0L677.0 268.9L677.3 270.5L677.3 267.6L677.5 268.7L677.5 268.7L677.8 270.2L677.8 268.6L678.0 269.3L678.0 269.0L678.3 268.5L678.3 270.7L678.5 269.7L678.5 269.0L678.7 268.1L678.7 271.3L679.0 269.3L679.0 268.6L679.2 270.4L679.2 267.9L679.5 269.6L679.5 269.0L679.7 268.5L679.7 270.2L680.0 269.3L680.0 269.0L680.3 268.3L680.3 270.2L680.5 268.6L680.5 268.9L680.8 268.4L680.8 270.3L681.0 268.8L681.0 269.4L681.2 270.1L681.2 268.6L681.5 269.7L681.5 269.6L681.7 268.7L681.7 270.0L682.0 269.8L682.0 269.5L682.2 270.2L682.2 269.0L682.5 269.3L682.5 269.8L682.7 270.1L682.7 268.8L683.0 269.1L683.0 268.6L683.3 268.6L683.3 270.2L683.5 269.8L683.5 268.9L683.8 268.9L683.8 270.2L684.0 269.5L684.0 269.3L684.3 268.7L684.3 269.8L684.5 269.6L684.5 269.2L684.7 268.6L684.7 270.1L685.0 269.6L685.0 269.2L685.2 269.9L685.2 268.7L685.5 269.1L685.5 269.6L685.7 269.9L685.7 268.9L686.0 269.2L686.0 269.6L686.3 270.0L686.3 268.9L686.5 268.9L686.5 269.7L686.8 270.0L686.8 268.6L687.0 269.2L687.0 269.5L687.2 268.6L687.2 270.1L687.5 270.1L687.5 269.0L687.7 268.9L687.7 270.0L688.0 268.9L688.0 269.2L688.2 268.4L688.2 270.1L688.5 269.8L688.5 269.1L688.7 270.5L688.7 268.7L689.0 269.0L689.0 269.3L689.3 268.6L689.3 270.1L689.5 270.1L689.5 270.2L689.8 270.2L689.8 269.1L690.0 269.6L690.0 269.7L690.3 270.4L690.3 268.6L690.5 270.3L690.5 269.7L690.7 268.8L690.7 270.2L691.0 270.0L691.0 269.4L691.2 270.5L691.2 268.9L691.5 269.4L691.5 269.9L691.7 269.9L691.7 268.6L692.0 269.3L692.0 269.4L692.3 268.9L692.3 270.0L692.5 269.7L692.5 269.4L692.8 270.0L692.8 268.2L693.0 268.2L693.0 269.3L693.2 270.3L693.2 268.6L693.5 268.6L693.5 269.7L693.7 268.8L693.7 269.9L694.0 269.4L694.0 269.1L694.2 270.1L694.2 268.8L694.5 269.1L694.5 269.7L694.7 268.8L694.7 270.0L695.0 269.2L695.0 269.5L695.3 270.1L695.3 268.7L695.5 269.1L695.5 269.4L695.8 270.0L695.8 268.5L696.0 269.4L696.0 269.9L696.3 270.0L696.3 268.8L696.5 269.5L696.5 270.1L696.7 270.2L696.7 268.5L697.0 269.9L697.0 269.6L697.2 270.5L697.2 268.8L697.5 268.8L697.5 268.9L697.7 268.9L697.7 269.7L698.0 269.5L698.0 269.3L698.3 270.1L698.3 268.8L698.5 269.8L698.5 269.5L698.8 270.2L698.8 268.9L699.0 268.9L699.0 269.1L699.2 270.5L699.2 268.6L699.5 269.4L699.5 269.7L699.7 270.4L699.7 268.4L700.0 269.4L700.0 269.2L700.2 269.9L700.2 268.4L700.5 269.8L700.5 269.3L700.7 268.5L700.7 270.0L701.0 269.2L701.0 269.1L701.3 268.5L701.3 270.2L701.5 268.6L701.5 269.3L701.8 271.2L701.8 267.9L702.0 267.9L702.0 270.4L702.3 270.4L702.3 268.4L702.5 269.7L702.5 268.8L702.7 270.1L702.7 267.5L703.0 269.3L703.0 269.7L703.2 270.2L703.2 268.1L703.5 269.8L703.5 269.2L703.7 268.7L703.7 269.8L704.0 269.2L704.0 269.2L704.3 268.9L704.3 270.4L704.5 269.7L704.5 269.6L704.8 270.0L704.8 268.3L705.0 269.6L705.0 268.8L705.2 270.3L705.2 268.6L705.5 268.8L705.5 269.7L705.7 270.3L705.7 268.0L706.0 270.3L706.0 268.2L706.2 268.1L706.2 271.1L706.5 268.9L706.5 269.1L706.7 271.7L706.7 267.8L707.0 269.3L707.0 268.4L707.3 271.0L707.3 267.9L707.5 268.7L707.5 270.2L707.8 270.9L707.8 268.1L708.0 270.4L708.0 268.6L708.3 270.4L708.3 268.5L708.5 268.7L708.5 269.3L708.7 268.3L708.7 270.5L709.0 269.9L709.0 269.6L709.2 268.9L709.2 270.6L709.5 269.2L709.5 269.5L709.7 270.5L709.7 268.6L710.0 269.7L710.0 270.4L710.3 268.3L710.3 271.1L710.5 269.6L710.5 268.2L710.8 268.2L710.8 270.3L711.0 269.7L711.0 269.4L711.2 268.4L711.2 270.3L711.5 269.1L711.5 269.5L711.7 268.2L711.7 270.5L712.0 270.2L712.0 269.2L712.2 268.4L712.2 270.1L712.5 269.2L712.5 270.3L712.7 268.7L712.7 270.4L713.0 269.2L713.0 270.1L713.3 270.1L713.3 268.9L713.5 269.7L713.5 269.9L713.8 268.7L713.8 269.9L714.0 269.0L714.0 268.9L714.3 270.1L714.3 268.5L714.5 269.7L714.5 269.5L714.7 268.5L714.7 270.2L715.0 268.9L715.0 269.2L715.2 270.4L715.2 268.4L715.5 269.8L715.5 269.1L715.7 268.3L715.7 270.2L716.0 269.2L716.0 269.7L716.3 270.2L716.3 268.6L716.5 269.9L716.5 269.1L716.8 269.8L716.8 268.5L717.0 268.8L717.0 268.8L717.2 268.1L717.2 270.2L717.5 269.5L717.5 269.2L717.7 270.1L717.7 268.6L718.0 269.7L718.0 269.3L718.2 270.1L718.2 268.3L718.5 269.7L718.5 269.1L718.7 270.1L718.7 268.8L719.0 268.9L719.0 270.3L719.3 270.3L719.3 268.5L719.5 269.7L719.5 269.2L719.8 271.0L719.8 268.5L720.0 268.5L720.0 269.0L720.3 268.3L720.3 270.2L720.5 269.8L720.5 269.2L720.7 270.0L720.7 268.2L721.0 269.5L721.0 269.0L721.2 270.2L721.2 268.9L721.5 269.3L721.5 269.4L721.7 268.1L721.7 270.1L722.0 269.9L722.0 269.3L722.3 268.2L722.3 270.2L722.5 269.4L722.5 269.8L722.8 270.2L722.8 268.7L723.0 269.5L723.0 269.8L723.2 269.1L723.2 270.7L723.5 270.1L723.5 269.8L723.7 268.5L723.7 270.4L724.0 269.6L724.0 268.9L724.2 270.3L724.2 268.3L724.5 269.3L724.5 270.1L724.7 270.8L724.7 268.7L725.0 268.8L725.0 269.4L725.3 270.1L725.3 268.8L725.5 269.6L725.5 269.5L725.8 268.4L725.8 270.6L726.0 269.8L726.0 269.5L726.3 268.3L726.3 270.3L726.5 269.7L726.5 268.9L726.7 268.5L726.7 270.0L727.0 268.7L727.0 270.4L727.2 270.4L727.2 268.4L727.5 268.9L727.5 269.7L727.7 268.4L727.7 270.3L728.0 268.8L728.0 269.2L728.3 270.0L728.3 268.8L728.5 269.0L728.5 269.7L728.8 268.5L728.8 270.4L729.0 269.2L729.0 269.3L729.2 268.6L729.2 270.1L729.5 268.7L729.5 269.3L729.7 268.6L729.7 270.0L730.0 269.9L730.0 269.5L730.2 268.5L730.2 270.8L730.5 269.8L730.5 269.7L730.7 270.1L730.7 268.6L731.0 269.3L731.0 269.5L731.3 267.9L731.3 270.3L731.5 268.9L731.5 269.2L731.8 268.2L731.8 270.0L732.0 270.0L732.0 269.9L732.3 267.9L732.3 270.3L732.5 269.7L732.5 268.6L732.7 268.6L732.7 270.4L733.0 269.6L733.0 269.0L733.2 270.0L733.2 268.6L733.5 268.8L733.5 269.3L733.7 269.8L733.7 268.7L734.0 268.7L734.0 269.5L734.3 268.4L734.3 270.3L734.5 269.1L734.5 269.4L734.8 268.4L734.8 269.9L735.0 269.1L735.0 269.2L735.2 268.6L735.2 269.8L735.5 269.8L735.5 269.6L735.7 270.3L735.7 268.8L736.0 269.7L736.0 269.2L736.2 268.7L736.2 270.2L736.5 270.0L736.5 269.6L736.7 270.0L736.7 268.5L737.0 269.8L737.0 268.9L737.3 268.4L737.3 270.3L737.5 269.0L737.5 269.0L737.8 268.5L737.8 270.6L738.0 270.6L738.0 268.8L738.3 268.5L738.3 270.3L738.5 268.7L738.5 269.9L738.7 270.2L738.7 268.2L739.0 268.6L739.0 269.2L739.2 268.5L739.2 271.0L739.5 269.1L739.5 269.8L739.7 268.4L739.7 270.1L740.0 269.0L740.0 269.4L740.3 268.7L740.3 270.1L740.5 268.7L740.5 269.7L740.8 270.3L740.8 268.3L741.0 269.7L741.0 268.7L741.2 269.9L741.2 268.4L741.5 269.2L741.5 268.3L741.7 268.3L741.7 270.3L742.0 269.4L742.0 269.6L742.2 270.2L742.2 268.1L742.5 268.9L742.5 269.3L742.7 270.3L742.7 268.3L743.0 269.6L743.0 269.3L743.3 268.5L743.3 270.0L743.5 270.0L743.5 269.5L743.8 270.1L743.8 268.3L744.0 269.7L744.0 269.3L744.3 269.8L744.3 268.7L744.5 269.4L744.5 269.0L744.7 270.1L744.7 268.6L745.0 269.1L745.0 268.8L745.2 270.0L745.2 268.1L745.5 269.9L745.5 269.2L745.7 268.2L745.7 270.5L746.0 269.8L746.0 269.3L746.3 269.9L746.3 268.8L746.5 268.8L746.5 269.0L746.8 268.8L746.8 270.0L747.0 270.0L747.0 269.3L747.2 268.7L747.2 270.1L747.5 269.6L747.5 269.1L747.7 268.7L747.7 270.3L748.0 270.2L748.0 269.7L748.2 268.8L748.2 270.2L748.5 269.2L748.5 269.5L748.7 270.3L748.7 268.8L749.0 269.4L749.0 269.7L749.3 268.4L749.3 269.9L749.5 269.4L749.5 269.9L749.8 268.6L749.8 270.0L750.0 270.0L750.0 270.0L750.3 270.0L750.3 268.8L750.5 269.2L750.5 269.5L750.7 270.2L750.7 268.5L751.0 269.0L751.0 270.2L751.2 270.2L751.2 268.4L751.5 268.4L751.5 270.2L751.7 270.2L751.7 268.7L752.0 269.4L752.0 270.2L752.3 268.2L752.3 270.3L752.5 269.9L752.5 269.7L752.8 268.4L752.8 270.3L753.0 269.5L753.0 268.8L753.2 268.4L753.2 270.0L753.5 269.1L753.5 268.8L753.7 268.8L753.7 270.0L754.0 269.5L754.0 269.0L754.2 270.2L754.2 268.3L754.5 268.9L754.5 269.8L754.7 270.1L754.7 268.6L755.0 269.9L755.0 269.9L755.3 268.6L755.3 270.5L755.5 269.6L755.5 269.2L755.8 270.6L755.8 268.3L756.0 269.5L756.0 269.2L756.3 270.2L756.3 268.6L756.5 269.4L756.5 269.0L756.7 268.8L756.7 270.3L757.0 270.2L757.0 269.6L757.2 268.6L757.2 270.0L757.5 269.0L757.5 268.9L757.7 270.2L757.7 268.7L758.0 269.1L758.0 269.0L758.3 270.7L758.3 268.4L758.5 268.4L758.5 269.8L758.8 270.1L758.8 268.1L759.0 269.8L759.0 269.1L759.2 269.8L759.2 268.8L759.5 269.3L759.5 269.7L759.7 268.6L759.7 270.0L760.0 269.5L760.0 269.4L760.2 270.3L760.2 268.5L760.5 269.0L760.5 269.2L760.7 268.6L760.7 270.1L761.0 269.1L761.0 269.6L761.3 270.2L761.3 268.4L761.5 269.2L761.5 270.0L761.8 270.0L761.8 268.7L762.0 269.6L762.0 270.0L762.3 270.0L762.3 269.0L762.5 269.8L762.5 269.5L762.7 268.8L762.7 270.0L763.0 269.9L763.0 269.7L763.2 270.2L763.2 268.7L763.5 269.5L763.5 269.6L763.7 269.9L763.7 268.6L764.0 269.7L764.0 269.2L764.3 268.4L764.3 270.3L764.5 270.1L764.5 269.0L764.8 270.1L764.8 268.9L765.0 269.5L765.0 270.5L765.2 270.5L765.2 268.7L765.5 270.2L765.5 269.1L765.7 270.0L765.7 268.4L766.0 269.4L766.0 269.7L766.2 268.7L766.2 270.0L766.5 268.9L766.5 269.6L766.7 268.5L766.7 270.8L767.0 270.8L767.0 269.1L767.3 270.0L767.3 268.4L767.5 269.7L767.5 269.2L767.8 269.8L767.8 268.7L768.0 269.3L768.0 269.3L768.3 269.7L768.3 268.7L768.5 269.2L768.5 268.8L768.7 270.2L768.7 268.6L769.0 269.4L769.0 269.1L769.2 270.0L769.2 268.7L769.5 269.4L769.5 269.5L769.7 268.7L769.7 270.3L770.0 270.3L770.0 268.8L770.3 268.8L770.3 270.1L770.5 269.0L770.5 269.0L770.8 268.5L770.8 270.3L771.0 269.4L771.0 269.4L771.2 270.4L771.2 267.9L771.5 267.9L771.5 270.5L771.7 270.8L771.7 268.0L772.0 268.7L772.0 269.2L772.2 268.3L772.2 270.1L772.5 270.1L772.5 269.1L772.7 268.6L772.7 270.2L773.0 270.1L773.0 269.4L773.3 268.6L773.3 270.1L773.5 270.1L773.5 268.9L773.8 270.5L773.8 268.5L774.0 269.6L774.0 269.6L774.3 268.6L774.3 270.4L774.5 270.0L774.5 269.1L774.7 268.3L774.7 270.5L775.0 268.6L775.0 270.1L775.2 270.1L775.2 269.0L775.5 269.2L775.5 268.7L775.7 268.7L775.7 269.9L776.0 269.6L776.0 269.6L776.3 268.2L776.3 270.1L776.5 269.5L776.5 269.6L776.8 270.3L776.8 268.4L777.0 269.1L777.0 269.5L777.2 268.7L777.2 270.3L777.5 269.1L777.5 269.6L777.7 267.4L777.7 270.1L778.0 269.1L778.0 269.9L778.2 270.8L778.2 268.1L778.5 268.1L778.5 268.3L778.7 270.3L778.7 267.8L779.0 269.0L779.0 269.1L779.3 268.7L779.3 270.2L779.5 269.0L779.5 269.9L779.8 270.1L779.8 268.6L780.0 269.7L780.0 269.7L780.3 270.2L780.3 268.8L780.5 269.6L780.5 268.8L780.7 268.3L780.7 270.1L781.0 269.4L781.0 269.6L781.2 268.9L781.2 270.6L781.5 269.7L781.5 269.4L781.7 270.1L781.7 268.5L782.0 269.7L782.0 269.3L782.3 269.9L782.3 268.7L782.5 269.3L782.5 269.7L782.8 269.9L782.8 268.6L783.0 269.4L783.0 269.4L783.2 270.1L783.2 268.7L783.5 269.4L783.5 269.2L783.7 268.5L783.7 270.4L784.0 269.4L784.0 270.0L784.2 268.8L784.2 270.3L784.5 269.8L784.5 269.5L784.7 270.4L784.7 268.4L785.0 269.5L785.0 269.1L785.3 268.0L785.3 269.7L785.5 269.2L785.5 268.9L785.8 268.8L785.8 270.1L786.0 269.0L786.0 268.5L786.3 270.7L786.3 268.3L786.5 268.3L786.5 269.5L786.7 270.1L786.7 267.8L787.0 269.6L787.0 269.4L787.2 267.4L787.2 270.5L787.5 268.5L787.5 270.1L787.7 268.3L787.7 271.3L788.0 269.2L788.0 269.6L788.3 268.2L788.3 270.8L788.5 269.4L788.5 269.8L788.8 268.3L788.8 270.3L789.0 268.5L789.0 270.0L789.2 270.0L789.2 268.3L789.5 270.0L789.5 270.0L789.7 268.0L789.7 270.3L790.0 269.6L790.0 269.2L790.2 268.3L790.2 270.4L790.5 268.8L790.5 269.3L790.7 270.3L790.7 268.8L791.0 269.7L791.0 269.5L791.3 270.1L791.3 268.5L791.5 269.4L791.5 269.1L791.8 268.7L791.8 270.0L792.0 269.1L792.0 269.0L792.3 270.1L792.3 268.4L792.5 269.5L792.5 268.9L792.7 268.5L792.7 270.0L793.0 270.0L793.0 269.5L793.2 268.7L793.2 270.3L793.5 269.7L793.5 270.3L793.7 270.3L793.7 268.1L794.0 269.3L794.0 269.2L794.3 270.0L794.3 268.3L794.5 269.1L794.5 269.3L794.8 268.9L794.8 270.7L795.0 269.3L795.0 269.1L795.2 268.5L795.2 270.6L795.5 269.9L795.5 269.2L795.7 268.7L795.7 270.1L796.0 269.0L796.0 269.5L796.2 267.6L796.2 270.4L796.5 269.1L796.5 269.6L796.7 267.8L796.7 270.4L797.0 269.3L797.0 269.4L797.3 270.2L797.3 268.5L797.5 268.8L797.5 268.8L797.8 268.4L797.8 270.3L798.0 270.3L798.0 269.3L798.3 268.6L798.3 269.8L798.5 269.2L798.5 269.6L798.7 268.5L798.7 270.2L799.0 268.7L799.0 270.1L799.2 270.7L799.2 268.5L799.5 268.7L799.5 270.7L799.7 270.7L799.7 268.1L800.0 268.9L800.0 269.9L800.3 270.5L800.3 268.4L800.5 270.5L800.5 270.1L800.8 266.6L800.8 270.9L801.0 268.7L801.0 269.1L801.2 270.5L801.2 268.0L801.5 269.3L801.5 269.4L801.7 268.7L801.7 270.2L802.0 269.0L802.0 269.6L802.2 270.3L802.2 268.7L802.5 270.1L802.5 268.4L802.7 268.2L802.7 270.5L803.0 268.8L803.0 269.1L803.3 269.9L803.3 268.5L803.5 269.7L803.5 269.2L803.8 268.2L803.8 270.1L804.0 268.8L804.0 268.9L804.3 268.7L804.3 270.5L804.5 269.2L804.5 270.0L804.7 268.2L804.7 270.2L805.0 269.9L805.0 269.2L805.2 268.5L805.2 270.2L805.5 269.6L805.5 269.8L805.7 268.7L805.7 270.6L806.0 269.3L806.0 268.7L806.3 268.7L806.3 270.4L806.5 269.3L806.5 270.1L806.8 267.8L806.8 271.1L807.0 271.1L807.0 269.3L807.2 270.2L807.2 267.9L807.5 269.9L807.5 268.9L807.7 271.1L807.7 268.0L808.0 269.8L808.0 268.9L808.2 270.0L808.2 268.1L808.5 269.7L808.5 269.8L808.7 271.0L808.7 268.1L809.0 269.1L809.0 269.4L809.3 270.0L809.3 268.6L809.5 269.4L809.5 269.1L809.8 270.4L809.8 268.8L810.0 269.4L810.0 269.1L810.3 269.8L810.3 268.6L810.5 269.1L810.5 269.9L810.7 269.9L810.7 268.6L811.0 268.6L811.0 269.3L811.2 270.4L811.2 269.2L811.5 269.2L811.5 269.1L811.7 268.8L811.7 270.9L812.0 269.9L812.0 269.3L812.3 270.4L812.3 268.2L812.5 269.7L812.5 269.9L812.8 267.7L812.8 270.5L813.0 268.8L813.0 269.0L813.2 270.9L813.2 268.0L813.5 268.2L813.5 269.9L813.7 268.3L813.7 270.6L814.0 270.6L814.0 269.1L814.2 272.2L814.2 267.9L814.5 267.9L814.5 269.3L814.7 267.6L814.7 270.3L815.0 269.0L815.0 269.0L815.3 268.6L815.3 270.4L815.5 269.5L815.5 269.8L815.8 268.8L815.8 270.6L816.0 270.6L816.0 268.2L816.3 267.8L816.3 271.3L816.5 269.4L816.5 270.2L816.7 270.2L816.7 268.8L817.0 269.7L817.0 268.2L817.2 270.2L817.2 268.0L817.5 269.9L817.5 269.7L817.7 268.2L817.7 270.3L818.0 269.4L818.0 269.0L818.3 269.0L818.3 270.5L818.5 269.7L818.5 269.2L818.8 270.3L818.8 268.9L819.0 269.8L819.0 269.5L819.2 268.9L819.2 270.2L819.5 269.2L819.5 269.6L819.7 271.0L819.7 268.7L820.0 269.1L820.0 269.7L820.2 270.4L820.2 268.8L820.5 269.8L820.5 269.2L820.7 269.0L820.7 269.8L821.0 269.8L821.0 269.1L821.3 270.3L821.3 269.0L821.5 269.7L821.5 269.3L821.8 268.5L821.8 270.0L822.0 269.5L822.0 269.6L822.3 270.4L822.3 268.8L822.5 269.7L822.5 269.3L822.7 268.6L822.7 270.1L823.0 268.9L823.0 269.5L823.2 268.7L823.2 270.0L823.5 269.6L823.5 269.1L823.7 269.9L823.7 268.8L824.0 268.8L824.0 268.9L824.3 269.9L824.3 268.7L824.5 269.7L824.5 269.2L824.8 268.5L824.8 270.5L825.0 270.3L825.0 269.7L825.2 268.2L825.2 270.7L825.5 268.6L825.5 270.1L825.7 270.9L825.7 268.5L826.0 270.2L826.0 269.9L826.2 269.9L826.2 268.2L826.5 269.4L826.5 270.2L826.7 268.5L826.7 270.5L827.0 268.7L827.0 269.7L827.3 270.2L827.3 268.6L827.5 269.1L827.5 269.3L827.8 268.6L827.8 270.0L828.0 270.0L828.0 269.2L828.3 268.3L828.3 270.0L828.5 269.0L828.5 269.7L828.7 269.9L828.7 268.6L829.0 269.7L829.0 269.6L829.2 270.0L829.2 268.7L829.5 269.9L829.5 270.5L829.7 270.5L829.7 268.6L830.0 269.4L830.0 268.9L830.3 268.3L830.3 270.0L830.5 269.1L830.5 269.7L830.8 268.4L830.8 269.7L831.0 269.5L831.0 270.2L831.2 270.2L831.2 269.0L831.5 269.3L831.5 269.5L831.7 270.2L831.7 268.1L832.0 269.2L832.0 268.7L832.2 268.5L832.2 270.2L832.5 269.4L832.5 269.7L832.7 270.1L832.7 268.4L833.0 268.4L833.0 269.2L833.3 268.2L833.3 270.1L833.5 269.1L833.5 268.6L833.8 268.2L833.8 270.4L834.0 269.4L834.0 269.4L834.3 270.2L834.3 268.8L834.5 269.6L834.5 269.1L834.7 270.8L834.7 268.4L835.0 270.0L835.0 269.1L835.2 270.7L835.2 267.7L835.5 268.5L835.5 270.5L835.7 268.0L835.7 270.8L836.0 269.1L836.0 269.7L836.3 271.1L836.3 268.3L836.5 270.1L836.5 269.2L836.8 268.7L836.8 270.5L837.0 269.3L837.0 269.8L837.2 270.2L837.2 268.3L837.5 269.1L837.5 269.7L837.7 270.5L837.7 268.3L838.0 269.5L838.0 269.3L838.2 268.1L838.2 270.1L838.5 269.6L838.5 270.2L838.7 268.7L838.7 271.2L839.0 270.1L839.0 269.1L839.3 270.5L839.3 268.5L839.5 269.1L839.5 269.4L839.8 268.8L839.8 270.3L840.0 269.0L840.0 269.2L840.3 268.0L840.3 270.2L840.5 269.9L840.5 268.9L840.7 268.5L840.7 270.2L841.0 269.0L841.0 269.5L841.2 268.4L841.2 269.9L841.5 269.3L841.5 269.4L841.7 270.5L841.7 268.5L842.0 268.6L842.0 269.4L842.3 270.1L842.3 268.2L842.5 269.4L842.5 268.8L842.8 270.9L842.8 268.7L843.0 269.4L843.0 269.7L843.2 268.6L843.2 270.1L843.5 270.1L843.5 269.4L843.7 270.0L843.7 268.7L844.0 268.9L844.0 268.7L844.2 268.7L844.2 270.0L844.5 269.3L844.5 269.6L844.7 270.2L844.7 269.0L845.0 269.5L845.0 269.0L845.3 268.3L845.3 270.1L845.5 269.4L845.5 269.4L845.8 270.6L845.8 268.1L846.0 269.7L846.0 269.0L846.3 271.0L846.3 267.6L846.5 269.1L846.5 270.3L846.7 270.6L846.7 267.8L847.0 269.1L847.0 268.6L847.2 268.5L847.2 270.2L847.5 269.5L847.5 269.7L847.7 270.4L847.7 268.5L848.0 269.2L848.0 269.1L848.3 270.4L848.3 268.8L848.5 269.3L848.5 269.2L848.8 268.7L848.8 270.0L849.0 269.3L849.0 269.1L849.2 268.8L849.2 270.2L849.5 269.7L849.5 269.5L849.7 269.9L849.7 268.5L850.0 269.5L850.0 269.5L850.2 270.1L850.2 268.7L850.5 269.9L850.5 270.5L850.7 270.5L850.7 268.6L851.0 269.7L851.0 269.5L851.3 270.1L851.3 268.8L851.5 269.8L851.5 269.8L851.8 268.7L851.8 270.2L852.0 269.2L852.0 269.8L852.3 268.8L852.3 270.1L852.5 269.0L852.5 269.9L852.7 269.0L852.7 270.0L853.0 269.7L853.0 268.7L853.2 270.0L853.2 268.7L853.5 269.2L853.5 268.8L853.7 268.5L853.7 270.5L854.0 270.5L854.0 268.9L854.3 270.0L854.3 268.8L854.5 269.5L854.5 268.9L854.8 270.0L854.8 268.9L855.0 269.2L855.0 269.2L855.2 268.9L855.2 270.4L855.5 269.4L855.5 269.0L855.7 268.8L855.7 270.1L856.0 269.1L856.0 269.7L856.2 270.8L856.2 268.4L856.5 269.3L856.5 269.1L856.7 270.0L856.7 268.5L857.0 268.5L857.0 269.2L857.3 268.7L857.3 270.2L857.5 269.7L857.5 269.6L857.8 269.9L857.8 268.6L858.0 269.5L858.0 269.6L858.3 268.5L858.3 270.2L858.5 269.7L858.5 269.4L858.7 270.0L858.7 268.7L859.0 269.9L859.0 269.4L859.2 268.8L859.2 270.1L859.5 269.6L859.5 269.4L859.7 268.6L859.7 270.0L860.0 269.3L860.0 269.3L860.3 270.4L860.3 268.5L860.5 269.2L860.5 270.0L860.8 268.3L860.8 270.6L861.0 269.9L861.0 270.2L861.2 270.9L861.2 268.7L861.5 269.1L861.5 269.0L861.7 269.9L861.7 268.2L862.0 269.8L862.0 270.1L862.2 270.6L862.2 268.3L862.5 269.7L862.5 269.1L862.7 268.4L862.7 269.9L863.0 269.4L863.0 269.7L863.3 268.4L863.3 270.5L863.5 270.5L863.5 269.0L863.8 270.0L863.8 268.6L864.0 269.1L864.0 269.3L864.3 268.9L864.3 270.1L864.5 269.4L864.5 269.7L864.7 269.7L864.7 268.8L865.0 269.1L865.0 269.5L865.2 268.8L865.2 270.2L865.5 269.6L865.5 269.2L865.7 269.9L865.7 268.9L866.0 269.6L866.0 269.2L866.3 270.1L866.3 268.7L866.5 269.6L866.5 269.1L866.8 268.8L866.8 269.8L867.0 269.2L867.0 269.1L867.2 270.0L867.2 268.5L867.5 268.5L867.5 269.3L867.7 270.3L867.7 268.3L868.0 268.8L868.0 269.4L868.2 270.8L868.2 267.7L868.5 270.6L868.5 268.9L868.7 270.3L868.7 267.4L869.0 267.9L869.0 268.6L869.3 271.1L869.3 267.7L869.5 269.7L869.5 269.6L869.8 268.3L869.8 270.3L870.0 269.9L870.0 268.7L870.3 270.6L870.3 268.5L870.5 269.7L870.5 269.8L870.7 270.2L870.7 268.2L871.0 269.9L871.0 270.1L871.2 270.5L871.2 268.5L871.5 270.1L871.5 269.6L871.7 270.2L871.7 268.5L872.0 269.3L872.0 269.7L872.3 269.0L872.3 270.0L872.5 270.0L872.5 270.3L872.8 270.3L872.8 268.7L873.0 269.6L873.0 268.9L873.2 268.3L873.2 270.0L873.5 269.1L873.5 269.6L873.7 268.9L873.7 270.5L874.0 269.2L874.0 269.0L874.2 268.2L874.2 270.5L874.5 269.0L874.5 269.9L874.7 270.1L874.7 268.6L875.0 268.6L875.0 269.1L875.3 270.2L875.3 268.6L875.5 269.4L875.5 269.5L875.8 268.6L875.8 269.9L876.0 269.2L876.0 268.9L876.3 270.2L876.3 268.0L876.5 268.0L876.5 269.4L876.7 270.5L876.7 268.2L877.0 269.0L877.0 269.5L877.2 267.6L877.2 270.8L877.5 269.8L877.5 269.7L877.7 266.8L877.7 271.2L878.0 269.7L878.0 268.9L878.3 268.3L878.3 270.7L878.5 269.1L878.5 269.2L878.8 271.1L878.8 268.4L879.0 270.5L879.0 268.6L879.2 268.6L879.2 270.1L879.5 269.5" fill="none" stroke="#66d419" stroke-width="1" stroke-linejoin="round"/>
<path d="M339.5 269.1L339.7 267.7L339.7 270.4L340.0 269.9L340.0 269.9L340.2 269.9L340.2 268.8L340.5 269.5L340.5 269.6L340.7 269.9L340.7 268.5L341.0 269.0L341.0 269.5L341.3 270.5L341.3 268.6L341.5 269.3L341.5 269.1L341.8 269.0L341.8 270.0L342.0 270.0L342.0 269.2L342.3 268.5L342.3 270.2L342.5 269.5L342.5 269.9L342.7 270.2L342.7 268.6L343.0 268.9L343.0 269.6L343.2 270.0L343.2 268.5L343.5 269.3L343.5 269.6L343.7 268.8L343.7 270.3L344.0 269.5L344.0 269.8L344.3 269.0L344.3 270.0L344.5 269.3L344.5 269.4L344.8 268.7L344.8 269.8L345.0 269.6L345.0 269.4L345.2 270.1L345.2 269.0L345.5 269.5L345.5 269.6L345.7 270.1L345.7 268.9L346.0 269.2L346.0 269.2L346.2 268.9L346.2 270.2L346.5 268.9L346.5 269.7L346.7 270.5L346.7 268.2L347.0 268.8L347.0 270.2L347.3 268.4L347.3 271.0L347.5 268.9L347.5 269.1L347.8 268.5L347.8 270.2L348.0 268.8L348.0 269.5L348.3 269.9L348.3 268.0L348.5 269.8L348.5 269.7L348.7 270.1L348.7 268.5L349.0 269.5L349.0 270.2L349.2 270.3L349.2 268.5L349.5 269.2L349.5 269.6L349.7 268.4L349.7 270.1L350.0 268.8L350.0 269.1L350.3 269.9L350.3 268.5L350.5 269.1L350.5 268.9L350.8 268.7L350.8 270.4L351.0 269.4L351.0 268.9L351.2 268.1L351.2 270.1L351.5 270.1L351.5 269.3L351.7 270.5L351.7 268.8L352.0 269.4L352.0 269.0L352.2 269.0L352.2 270.1L352.5 269.7L352.5 269.4L352.7 268.6L352.7 270.3L353.0 270.3L353.0 269.4L353.3 270.1L353.3 268.4L353.5 269.7L353.5 268.8L353.8 268.8L353.8 270.4L354.0 270.4L354.0 269.8L354.3 268.7L354.3 270.1L354.5 269.9L354.5 269.2L354.7 268.7L354.7 269.9L355.0 269.3L355.0 269.1L355.2 269.0L355.2 270.1L355.5 270.1L355.5 269.5L355.7 270.4L355.7 268.8L356.0 269.3L356.0 269.2L356.3 268.8L356.3 270.4L356.5 270.4L356.5 269.9L356.8 268.8L356.8 270.8L357.0 269.0L357.0 269.4L357.2 270.4L357.2 268.5L357.5 269.3L357.5 269.9L357.7 268.6L357.7 270.6L358.0 269.3L358.0 269.2L358.2 270.1L358.2 268.6L358.5 269.8L358.5 269.3L358.7 269.8L358.7 268.4L359.0 268.6L359.0 269.6L359.3 270.5L359.3 268.1L359.5 269.9L359.5 270.3L359.8 268.5L359.8 270.4L360.0 269.0L360.0 270.2L360.3 270.2L360.3 268.2L360.5 269.1L360.5 270.1L360.7 270.1L360.7 268.1L361.0 268.7L361.0 270.9L361.2 270.9L361.2 268.3L361.5 269.2L361.5 269.7L361.7 270.6L361.7 268.9L362.0 269.5L362.0 269.1L362.3 270.0L362.3 268.9L362.5 269.1L362.5 268.8L362.8 270.5L362.8 268.6L363.0 269.2L363.0 269.1L363.2 270.6L363.2 267.1L363.5 269.2L363.5 268.8L363.7 267.9L363.7 270.0L364.0 269.2L364.0 269.2L364.2 268.7L364.2 270.5L364.5 270.2L364.5 269.5L364.7 270.9L364.7 268.7L365.0 269.5L365.0 269.2L365.3 268.6L365.3 270.2L365.5 269.3L365.5 269.2L365.8 270.2L365.8 268.7L366.0 269.9L366.0 269.7L366.3 269.7L366.3 268.4L366.5 268.7L366.5 269.2L366.7 268.9L366.7 270.1L367.0 269.2L367.0 270.2L367.2 270.2L367.2 268.7L367.5 270.1L367.5 269.4L367.7 268.7L367.7 270.0L368.0 269.5L368.0 269.2L368.3 270.2L368.3 268.6L368.5 268.8L368.5 269.1L368.8 270.1L368.8 268.8L369.0 269.8L369.0 269.0L369.2 269.0L369.2 270.1L369.5 269.2L369.5 269.8L369.7 268.7L369.7 270.4L370.0 269.3L370.0 269.4L370.2 268.5L370.2 269.8L370.5 269.5L370.5 269.1L370.7 268.4L370.7 269.7L371.0 269.7L371.0 269.5L371.3 270.1L371.3 268.6L371.5 269.2L371.5 269.2L371.8 268.6L371.8 269.9L372.0 269.9L372.0 269.2L372.3 268.9L372.3 270.0L372.5 269.6L372.5 269.1L372.7 268.8L372.7 270.4L373.0 270.4L373.0 269.7L373.2 268.4L373.2 270.3L373.5 269.6L373.5 269.1L373.7 268.8L373.7 270.3L374.0 269.1L374.0 269.4L374.3 268.7L374.3 270.3L374.5 269.7L374.5 268.8L374.8 268.8L374.8 270.4L375.0 269.9L375.0 269.3L375.2 269.9L375.2 268.5L375.5 269.2L375.5 268.7L375.7 268.7L375.7 270.2L376.0 268.9L376.0 269.0L376.2 268.9L376.2 270.3L376.5 269.5L376.5 269.7L376.7 270.7L376.7 268.5L377.0 269.3L377.0 268.7L377.3 268.7L377.3 270.6L377.5 269.9L377.5 270.2L377.8 270.4L377.8 268.6L378.0 268.6L378.0 269.6L378.3 268.7L378.3 270.1L378.5 268.9L378.5 269.1L378.7 270.3L378.7 268.9L379.0 268.9L379.0 269.7L379.2 270.0L379.2 269.0L379.5 269.0L379.5 269.5L379.7 268.8L379.7 270.2L380.0 269.5L380.0 269.4L380.3 268.9L380.3 270.0L380.5 269.0L380.5 269.7L380.8 270.3L380.8 268.8L381.0 270.0L381.0 269.8L381.2 268.4L381.2 270.2L381.5 270.2L381.5 269.7L381.7 270.3L381.7 268.4L382.0 269.8L382.0 269.5L382.2 269.1L382.2 270.1L382.5 269.8L382.5 268.6L382.7 268.6L382.7 270.2L383.0 269.2L383.0 269.2L383.3 270.5L383.3 268.0L383.5 268.3L383.5 268.1L383.8 268.1L383.8 270.4L384.0 269.1L384.0 269.5L384.3 268.7L384.3 270.0L384.5 269.0L384.5 269.7L384.7 270.2L384.7 268.6L385.0 269.6L385.0 269.4L385.2 270.5L385.2 268.1L385.5 269.4L385.5 269.0L385.7 268.7L385.7 270.1L386.0 269.6L386.0 269.5L386.3 268.6L386.3 270.0L386.5 269.2L386.5 269.4L386.8 270.0L386.8 268.7L387.0 269.4L387.0 269.9L387.2 268.8L387.2 270.0L387.5 269.5L387.5 269.4L387.7 270.1L387.7 268.5L388.0 269.7L388.0 269.2L388.2 268.9L388.2 270.5L388.5 269.3L388.5 268.6L388.7 268.6L388.7 270.1L389.0 269.3L389.0 269.6L389.3 270.2L389.3 268.8L389.5 269.8L389.5 269.0L389.8 270.1L389.8 268.9L390.0 270.1L390.0 269.6L390.3 268.5L390.3 270.4L390.5 269.0L390.5 269.3L390.7 270.1L390.7 268.6L391.0 269.8L391.0 269.2L391.2 270.3L391.2 268.1L391.5 269.6L391.5 270.4L391.7 270.4L391.7 268.3L392.0 269.4L392.0 269.4L392.3 270.2L392.3 268.6L392.5 268.6L392.5 270.2L392.8 270.2L392.8 269.1L393.0 269.3L393.0 269.3L393.2 268.6L393.2 269.9L393.5 268.9L393.5 269.6L393.7 270.1L393.7 269.1L394.0 269.9L394.0 269.6L394.2 270.0L394.2 268.7L394.5 268.7L394.5 269.4L394.7 270.3L394.7 268.7L395.0 269.7L395.0 269.0L395.3 270.2L395.3 268.5L395.5 269.6L395.5 269.1L395.8 268.7L395.8 270.0L396.0 269.8L396.0 269.2L396.3 268.7L396.3 270.0L396.5 269.8L396.5 270.4L396.7 270.4L396.7 268.6L397.0 270.2L397.0 268.2L397.2 268.2L397.2 270.9L397.5 269.5L397.5 270.0L397.7 268.5L397.7 270.7L398.0 269.2L398.0 268.7L398.3 268.0L398.3 270.6L398.5 270.6L398.5 270.0L398.8 270.4L398.8 268.5L399.0 268.5L399.0 269.3L399.2 270.1L399.2 268.4L399.5 268.9L399.5 269.2L399.7 268.9L399.7 269.8L400.0 269.4L400.0 269.7L400.2 270.1L400.2 268.5L400.5 269.7L400.5 269.6L400.7 268.7L400.7 270.2L401.0 269.2L401.0 269.5L401.3 268.6L401.3 269.9L401.5 269.0L401.5 269.1L401.8 270.0L401.8 268.5L402.0 269.3L402.0 269.4L402.3 268.5L402.3 270.4L402.5 269.8L402.5 268.9L402.7 268.2L402.7 271.4L403.0 269.2L403.0 269.6L403.2 268.3L403.2 270.4L403.5 268.8L403.5 270.6L403.7 270.6L403.7 268.6L404.0 269.7L404.0 269.5L404.3 270.6L404.3 268.5L404.5 269.6L404.5 269.2L404.8 270.3L404.8 268.4L405.0 269.0L405.0 269.7L405.2 270.0L405.2 268.5L405.5 269.4L405.5 269.6L405.7 268.6L405.7 270.2L406.0 269.5L406.0 269.7L406.2 270.3L406.2 268.5L406.5 269.6L406.5 269.3L406.7 270.0L406.7 268.6L407.0 269.2L407.0 269.5L407.3 268.7L407.3 270.1L407.5 269.9L407.5 270.1L407.8 270.1L407.8 268.8L408.0 268.8L408.0 269.6L408.3 270.2L408.3 268.7L408.5 269.2L408.5 270.1L408.7 270.3L408.7 268.4L409.0 270.0L409.0 269.6L409.2 269.0L409.2 270.6L409.5 270.6L409.5 269.1L409.7 270.4L409.7 268.9L410.0 269.5L410.0 269.7L410.3 270.3L410.3 268.6L410.5 269.6L410.5 269.7L410.8 269.9L410.8 268.8L411.0 269.8L411.0 269.0L411.2 268.6L411.2 269.9L411.5 268.9L411.5 269.7L411.7 268.8L411.7 270.4L412.0 269.3L412.0 269.2L412.2 268.9L412.2 269.9L412.5 269.3L412.5 269.2L412.7 268.8L412.7 270.1L413.0 269.0L413.0 270.2L413.3 270.2L413.3 268.8L413.5 269.0L413.5 268.9L413.8 270.5L413.8 268.4L414.0 269.1L414.0 270.3L414.3 267.9L414.3 270.3L414.5 269.1L414.5 268.9L414.7 270.5L414.7 268.4L415.0 269.4L415.0 269.1L415.2 270.4L415.2 268.5L415.5 268.8L415.5 268.8L415.7 270.5L415.7 268.4L416.0 268.9L416.0 270.0L416.3 270.6L416.3 268.2L416.5 269.8L416.5 269.9L416.8 270.2L416.8 268.6L417.0 269.7L417.0 269.2L417.2 269.9L417.2 268.9L417.5 269.9L417.5 269.2L417.7 268.8L417.7 270.3L418.0 270.3L418.0 269.5L418.2 268.9L418.2 270.0L418.5 269.3L418.5 269.8L418.7 270.1L418.7 268.9L419.0 269.2L419.0 269.7L419.3 268.9L419.3 270.0L419.5 269.6L419.5 269.1L419.8 268.2L419.8 270.3L420.0 270.3L420.0 269.8L420.3 268.2L420.3 270.6L420.5 269.6L420.5 268.5L420.7 268.5L420.7 270.0L421.0 269.2L421.0 269.4L421.2 268.2L421.2 270.1L421.5 270.1L421.5 269.5L421.7 268.4L421.7 270.5L422.0 269.5L422.0 270.6L422.3 270.6L422.3 268.4L422.5 269.4L422.5 269.0L422.8 268.4L422.8 269.9L423.0 269.6L423.0 269.5L423.2 270.3L423.2 268.5L423.5 269.8L423.5 269.6L423.7 270.3L423.7 268.6L424.0 269.4L424.0 269.5L424.2 270.4L424.2 268.9L424.5 269.7L424.5 269.6L424.7 268.7L424.7 269.9L425.0 269.0L425.0 269.4L425.3 268.8L425.3 270.4L425.5 269.8L425.5 269.5L425.8 268.7L425.8 270.6L426.0 269.6L426.0 269.7L426.3 269.0L426.3 270.5L426.5 269.3L426.5 269.8L426.7 270.6L426.7 268.8L427.0 269.4L427.0 269.1L427.2 268.6L427.2 270.0L427.5 269.5L427.5 270.5L427.7 270.5L427.7 268.7L428.0 269.9L428.0 269.1L428.3 270.3L428.3 268.9L428.5 268.9L428.5 269.7L428.8 270.6L428.8 268.1L429.0 268.1L429.0 269.4L429.2 267.9L429.2 270.0L429.5 269.6L429.5 270.1L429.7 270.4L429.7 267.4L430.0 269.3L430.0 270.0L430.2 268.0L430.2 270.8L430.5 270.8L430.5 270.2L430.7 270.2L430.7 267.9L431.0 269.5L431.0 268.4L431.3 268.3L431.3 271.1L431.5 268.9L431.5 269.0L431.8 267.8L431.8 270.2L432.0 269.1L432.0 269.6L432.3 268.7L432.3 270.1L432.5 269.8L432.5 268.4L432.7 268.4L432.7 270.1L433.0 269.0L433.0 269.6L433.2 270.3L433.2 268.2L433.5 270.3L433.5 269.9L433.7 271.4L433.7 268.6L434.0 269.4L434.0 269.2L434.3 268.3L434.3 270.2L434.5 269.2L434.5 268.9L434.8 270.5L434.8 268.2L435.0 269.3L435.0 268.7L435.2 270.2L435.2 268.4L435.5 268.4L435.5 269.8L435.7 267.9L435.7 270.5L436.0 269.5L436.0 270.0L436.2 270.7L436.2 269.0L436.5 269.3L436.5 268.9L436.7 269.7L436.7 268.6L437.0 268.9L437.0 269.5L437.3 268.5L437.3 270.0L437.5 269.3L437.5 269.6L437.8 268.7L437.8 270.9L438.0 269.6L438.0 269.6L438.3 268.4L438.3 270.1L438.5 269.3L438.5 269.1L438.7 268.4L438.7 270.3L439.0 269.9L439.0 269.2L439.2 268.5L439.2 270.1L439.5 269.0L439.5 270.0L439.7 270.2L439.7 268.8L440.0 268.8L440.0 269.9L440.3 269.0L440.3 270.1L440.5 269.0L440.5 269.7L440.8 268.8L440.8 269.9L441.0 269.7L441.0 270.2L441.2 270.2L441.2 268.6L441.5 270.1L441.5 269.1L441.7 270.2L441.7 268.3L442.0 268.3L442.0 269.3L442.2 267.5L442.2 270.4L442.5 270.4L442.5 269.2L442.7 268.0L442.7 271.0L443.0 268.9L443.0 269.7L443.3 268.4L443.3 270.3L443.5 269.4L443.5 269.0L443.8 270.5L443.8 269.0L444.0 269.0L444.0 269.9L444.3 270.1L444.3 268.9L444.5 269.4L444.5 269.1L444.7 268.8L444.7 269.8L445.0 269.1L445.0 269.6L445.2 268.5L445.2 270.1L445.5 269.3L445.5 269.5L445.7 268.7L445.7 270.4L446.0 270.2L446.0 268.6L446.3 268.6L446.3 270.3L446.5 269.3L446.5 268.6L446.8 268.2L446.8 270.0L447.0 269.4L447.0 269.3L447.2 270.3L447.2 268.3L447.5 269.6L447.5 268.9L447.7 268.5L447.7 270.1L448.0 268.8L448.0 269.8L448.2 269.9L448.2 268.6L448.5 269.2L448.5 269.8L448.7 268.9L448.7 270.2L449.0 269.4L449.0 269.4L449.3 269.7L449.3 268.9L449.5 269.4L449.5 268.9L449.8 268.7L449.8 270.1L450.0 270.0L450.0 269.6L450.3 270.4L450.3 268.8L450.5 269.2L450.5 269.1L450.7 270.4L450.7 268.4L451.0 269.2L451.0 270.4L451.2 270.4L451.2 268.8L451.5 269.9L451.5 269.2L451.7 271.0L451.7 268.7L452.0 269.2L452.0 269.6L452.3 270.3L452.3 268.7L452.5 269.8L452.5 269.5L452.8 270.2L452.8 268.6L453.0 268.6L453.0 269.1L453.2 270.0L453.2 268.6L453.5 269.8L453.5 270.6L453.7 268.0L453.7 271.1L454.0 270.6L454.0 270.3L454.2 268.5L454.2 270.8L454.5 270.8L454.5 269.4L454.7 267.8L454.7 270.5L455.0 269.5L455.0 268.9L455.3 270.8L455.3 268.5L455.5 269.4L455.5 268.7L455.8 267.8L455.8 270.7L456.0 269.0L456.0 269.9L456.3 270.5L456.3 268.4L456.5 269.4L456.5 270.3L456.7 268.4L456.7 270.6L457.0 269.4L457.0 270.2L457.2 268.3L457.2 270.8L457.5 269.5L457.5 269.9L457.7 270.8L457.7 268.1L458.0 269.9L458.0 268.7L458.3 270.8L458.3 268.0L458.5 268.0L458.5 269.5L458.8 271.3L458.8 267.9L459.0 268.3L459.0 270.3L459.2 268.0L459.2 270.7L459.5 268.4L459.5 269.9L459.7 271.0L459.7 267.7L460.0 270.7L460.0 267.9L460.2 267.9L460.2 271.0L460.5 270.3L460.5 268.2L460.7 267.3L460.7 271.1L461.0 267.4L461.0 269.2L461.3 266.7L461.3 271.5L461.5 269.3L461.5 270.1L461.8 271.7L461.8 267.2L462.0 270.8L462.0 268.5L462.3 267.1L462.3 271.7L462.5 271.7L462.5 268.4L462.7 271.8L462.7 266.6L463.0 270.5L463.0 266.7L463.2 272.2L463.2 265.7L463.5 265.7L463.5 271.3L463.7 273.0L463.7 264.4L464.0 267.1L464.0 272.9L464.3 273.4L464.3 265.4L464.5 272.4L464.5 266.9L464.8 273.9L464.8 266.2L465.0 272.6L465.0 267.2L465.2 274.3L465.2 264.0L465.5 272.7L465.5 265.8L465.7 264.9L465.7 274.5L466.0 269.7L466.0 268.7L466.2 252.6L466.2 337.6L466.5 269.9L466.5 270.0L466.7 266.8L466.7 272.6L467.0 270.7L467.0 267.2L467.3 272.7L467.3 266.6L467.5 272.6L467.5 267.3L467.8 272.1L467.8 266.0L468.0 267.0L468.0 270.4L468.3 267.2L468.3 272.0L468.5 268.1L468.5 271.0L468.7 271.7L468.7 267.2L469.0 267.8L469.0 268.7L469.2 271.7L469.2 267.4L469.5 267.5L469.5 270.5L469.7 272.0L469.7 267.3L470.0 268.6L470.0 271.2L470.3 272.0L470.3 267.5L470.5 270.4L470.5 267.9L470.8 266.7L470.8 271.9L471.0 271.4L471.0 267.1L471.2 267.0L471.2 272.0L471.5 271.0L471.5 267.1L471.7 266.4L471.7 272.1L472.0 268.1L472.0 271.9L472.2 272.2L472.2 266.8L472.5 267.0L472.5 271.4L472.7 272.0L472.7 193.2L473.0 193.2L473.0 293.5L473.3 349.6L473.3 246.5L473.5 282.9L473.5 248.9L473.8 248.9L473.8 291.8L474.0 257.5L474.0 281.9L474.3 286.7L474.3 250.1L474.5 251.3L474.5 280.6L474.7 286.3L474.7 253.5L475.0 279.4L475.0 261.5L475.2 282.8L475.2 258.8L475.5 264.3L475.5 277.2L475.7 259.1L475.7 277.6L476.0 263.3L476.0 274.4L476.3 262.5L476.3 276.7L476.5 264.4L476.5 273.9L476.8 264.0L476.8 274.7L477.0 264.3L477.0 273.0L477.2 273.7L477.2 264.6L477.5 267.0L477.5 272.9L477.7 272.9L477.7 266.1L478.0 271.0L478.0 266.5L478.2 266.5L478.2 272.2L478.5 271.6L478.5 268.1L478.7 272.2L478.7 266.2L479.0 266.2L479.0 270.4L479.3 266.4L479.3 272.8L479.5 267.3L479.5 271.6L479.8 266.5L479.8 271.8L480.0 270.9L480.0 267.7L480.3 271.6L480.3 266.8L480.5 271.1L480.5 267.2L480.7 267.2L480.7 272.3L481.0 271.9L481.0 267.1L481.2 267.1L481.2 271.6L481.5 267.5L481.5 270.7L481.7 266.8L481.7 272.0L482.0 268.0L482.0 266.9L482.3 266.1L482.3 273.3L482.5 267.8L482.5 272.3L482.8 273.3L482.8 265.7L483.0 265.7L483.0 273.5L483.2 274.6L483.2 263.9L483.5 263.9L483.5 273.9L483.7 275.1L483.7 263.7L484.0 272.6L484.0 266.3L484.2 274.1L484.2 265.2L484.5 271.4L484.5 266.4L484.7 265.5L484.7 271.8L485.0 267.0L485.0 272.0L485.3 272.0L485.3 267.1L485.5 270.5L485.5 268.3L485.8 271.7L485.8 267.9L486.0 268.0L486.0 270.6L486.3 271.5L486.3 267.3L486.5 268.2L486.5 271.1L486.7 271.1L486.7 267.3L487.0 268.2L487.0 269.6L487.2 270.8L487.2 268.0L487.5 270.0L487.5 268.9L487.7 268.1L487.7 270.8L488.0 270.3L488.0 268.0L488.3 268.0L488.3 270.8L488.5 268.9L488.5 269.9L488.8 268.6L488.8 270.7L489.0 268.9L489.0 269.7L489.2 270.5L489.2 268.5L489.5 268.5L489.5 269.5L489.7 270.3L489.7 268.4L490.0 269.5L490.0 269.1L490.2 268.6L490.2 270.4L490.5 268.9L490.5 269.0L490.7 270.2L490.7 268.8L491.0 269.1L491.0 268.9L491.3 270.5L491.3 268.9L491.5 269.8L491.5 270.0L491.8 270.0L491.8 268.7L492.0 269.5L492.0 270.2L492.3 270.2L492.3 268.7L492.5 269.6L492.5 268.4L492.7 268.3L492.7 270.6L493.0 270.0L493.0 268.5L493.2 268.5L493.2 270.6L493.5 270.0L493.5 269.5L493.7 269.0L493.7 270.4L494.0 270.3L494.0 269.1L494.3 270.4L494.3 267.9L494.5 268.9L494.5 269.8L494.8 270.3L494.8 268.2L495.0 269.7L495.0 268.6L495.2 270.1L495.2 268.4L495.5 269.5L495.5 269.0L495.7 268.1L495.7 269.9L496.0 268.9L496.0 270.3L496.2 270.3L496.2 268.5L496.5 269.7L496.5 268.9L496.7 268.9L496.7 270.2L497.0 269.6L497.0 269.4L497.3 269.8L497.3 268.8L497.5 269.8L497.5 269.6L497.8 270.5L497.8 268.6L498.0 269.4L498.0 270.0L498.3 270.3L498.3 268.6L498.5 269.8L498.5 269.9L498.7 269.9L498.7 268.9L499.0 269.6L499.0 269.3L499.2 270.0L499.2 268.6L499.5 268.6L499.5 269.8L499.7 268.9L499.7 269.8L500.0 269.1L500.0 269.1L500.3 270.0L500.3 268.6L500.5 269.5L500.5 270.3L500.8 270.3L500.8 268.5L501.0 270.1L501.0 269.6L501.2 270.3L501.2 268.4L501.5 270.0L501.5 269.1L501.7 268.7L501.7 270.9L502.0 269.2L502.0 269.1L502.2 270.1L502.2 268.5L502.5 268.9L502.5 269.6L502.7 268.6L502.7 270.3L503.0 269.5L503.0 269.7L503.3 270.2L503.3 268.9L503.5 269.3L503.5 269.2L503.8 270.0L503.8 268.8L504.0 269.5L504.0 269.4L504.3 270.1L504.3 268.9L504.5 269.2L504.5 269.3L504.7 269.0L504.7 269.8L505.0 269.2L505.0 269.1L505.2 270.1L505.2 268.4L505.5 269.2L505.5 269.4L505.7 268.2L505.7 269.8L506.0 269.5L506.0 268.9L506.3 268.8L506.3 270.3L506.5 269.0L506.5 269.5L506.8 268.8L506.8 270.1L507.0 269.5L507.0 269.0L507.2 268.6L507.2 270.2L507.5 269.7L507.5 269.3L507.7 270.0L507.7 269.1L508.0 269.3L508.0 269.8L508.2 270.0L508.2 268.6L508.5 268.6L508.5 269.8L508.7 268.4L508.7 270.7L509.0 269.5L509.0 270.2L509.3 270.2L509.3 268.3L509.5 269.8L509.5 268.8L509.8 270.4L509.8 268.4L510.0 269.5L510.0 269.3L510.3 270.3L510.3 268.5L510.5 269.5L510.5 269.0L510.7 268.8L510.7 270.1L511.0 270.1L511.0 269.0L511.2 270.2L511.2 268.3L511.5 268.3L511.5 268.4L511.7 268.4L511.7 270.5L512.0 270.5L512.0 269.0L512.3 268.6L512.3 270.5L512.5 270.5L512.5 269.4L512.8 268.5L512.8 270.4L513.0 270.0L513.0 269.5L513.2 268.7L513.2 270.3L513.5 269.3L513.5 269.5L513.7 270.4L513.7 268.1L514.0 269.1L514.0 269.1L514.2 270.1L514.2 268.6L514.5 269.4L514.5 269.5L514.7 268.7L514.7 270.2L515.0 269.2L515.0 269.3L515.3 268.9L515.3 269.9L515.5 269.8L515.5 269.0L515.8 268.1L515.8 270.5L516.0 270.5L516.0 268.6L516.3 268.5L516.3 270.6L516.5 269.0L516.5 269.5L516.7 270.2L516.7 268.7L517.0 269.2L517.0 269.6L517.2 268.7L517.2 270.2L517.5 269.2L517.5 269.8L517.7 269.8L517.7 268.7L518.0 268.8L518.0 269.8L518.3 270.3L518.3 268.3L518.5 270.2L518.5 269.2L518.8 268.5L518.8 270.3L519.0 268.8L519.0 269.3L519.2 270.6L519.2 268.8L519.5 269.3L519.5 269.8L519.7 269.8L519.7 268.6L520.0 269.8L520.0 269.7L520.2 268.9L520.2 270.4L520.5 270.3L520.5 270.6L520.7 270.6L520.7 268.4L521.0 269.7L521.0 269.2L521.3 270.2L521.3 268.4L521.5 268.6L521.5 269.0L521.8 270.5L521.8 268.3L522.0 268.7L522.0 270.1L522.3 270.7L522.3 268.0L522.5 268.0L522.5 269.8L522.7 270.2L522.7 268.5L523.0 268.8L523.0 268.6L523.2 271.1L523.2 268.5L523.5 270.1L523.5 269.0L523.7 268.9L523.7 269.9L524.0 269.9L524.0 269.3L524.3 268.6L524.3 269.9L524.5 269.4L524.5 269.1L524.8 268.8L524.8 270.1L525.0 269.3L525.0 269.2L525.2 270.0L525.2 269.1L525.5 269.6L525.5 269.9L525.7 268.8L525.7 270.1L526.0 269.7L526.0 269.9L526.2 268.6L526.2 270.2L526.5 269.4L526.5 269.5L526.7 269.0L526.7 270.1L527.0 269.8L527.0 270.1L527.3 270.2L527.3 268.3L527.5 268.3L527.5 268.9L527.8 268.2L527.8 270.4L528.0 270.4L528.0 268.9L528.3 268.0L528.3 270.2L528.5 269.0L528.5 269.2L528.7 268.6L528.7 269.8L529.0 269.8L529.0 269.3L529.2 268.6L529.2 270.2L529.5 269.4L529.5 269.4L529.7 268.4L529.7 270.2L530.0 269.1L530.0 269.7L530.3 268.7L530.3 270.1L530.5 269.4L530.5 268.6L530.8 269.8L530.8 268.5L531.0 269.8L531.0 269.4L531.2 270.0L531.2 269.0L531.5 269.3L531.5 269.3L531.7 269.9L531.7 268.7L532.0 269.3L532.0 269.5L532.2 268.4L532.2 270.4L532.5 268.6L532.5 268.9L532.7 270.8L532.7 267.8L533.0 269.5L533.0 270.5L533.3 271.0L533.3 268.2L533.5 269.3L533.5 270.7L533.8 271.5L533.8 268.2L534.0 270.4L534.0 269.2L534.3 270.3L534.3 268.5L534.5 268.8L534.5 269.2L534.7 269.8L534.7 268.8L535.0 269.6L535.0 270.5L535.2 270.5L535.2 268.5L535.5 268.5L535.5 269.8L535.7 270.3L535.7 268.7L536.0 269.7L536.0 268.7L536.3 268.7L536.3 270.2L536.5 270.2L536.5 270.2L536.8 270.2L536.8 268.4L537.0 269.4L537.0 269.2L537.2 268.7L537.2 270.6L537.5 269.6L537.5 269.7L537.7 268.7L537.7 270.0L538.0 269.2L538.0 269.2L538.2 269.9L538.2 268.4L538.5 269.2L538.5 269.6L538.7 270.1L538.7 268.4L539.0 270.0L539.0 269.9L539.3 270.2L539.3 268.8L539.5 269.5L539.5 270.1L539.8 268.3L539.8 270.1L540.0 269.5L540.0 269.6L540.3 268.4L540.3 271.0L540.5 271.0L540.5 269.8L540.7 268.4L540.7 270.6L541.0 269.1L541.0 269.8L541.2 270.2L541.2 269.0L541.5 269.2L541.5 269.6L541.7 268.8L541.7 270.2L542.0 269.1L542.0 269.1L542.3 268.6L542.3 270.3L542.5 270.1L542.5 268.4L542.8 268.4L542.8 270.5L543.0 269.1L543.0 269.4L543.2 269.9L543.2 268.6L543.5 269.2L543.5 268.7L543.7 268.5L543.7 269.7L544.0 269.1L544.0 269.3L544.2 269.0L544.2 270.0L544.5 269.2L544.5 269.3L544.7 269.9L544.7 268.9L545.0 269.5L545.0 268.9L545.3 268.9L545.3 270.1L545.5 269.1L545.5 270.1L545.8 268.4L545.8 270.2L546.0 270.2L546.0 269.1L546.3 269.1L546.3 270.4L546.5 270.4L546.5 270.2L546.7 270.2L546.7 268.8L547.0 269.5L547.0 269.8L547.2 270.0L547.2 268.7L547.5 269.6L547.5 269.5L547.7 270.3L547.7 268.7L548.0 269.2L548.0 269.6L548.3 268.9L548.3 270.4L548.5 270.4L548.5 269.4L548.8 270.0L548.8 268.8L549.0 269.3L549.0 269.3L549.2 268.4L549.2 270.2L549.5 270.2L549.5 269.9L549.7 269.9L549.7 268.6L550.0 269.2L550.0 269.7L550.2 268.6L550.2 270.0L550.5 269.2L550.5 269.1L550.7 268.7L550.7 270.1L551.0 269.8L551.0 269.6L551.3 270.5L551.3 268.3L551.5 269.6L551.5 269.8L551.8 268.5L551.8 270.0L552.0 269.6L552.0 269.3L552.3 268.7L552.3 270.7L552.5 269.5L552.5 269.3L552.7 268.5L552.7 270.8L553.0 269.3L553.0 269.4L553.2 270.0L553.2 268.6L553.5 269.1L553.5 268.6L553.7 269.8L553.7 268.6L554.0 268.7L554.0 269.6L554.3 270.3L554.3 268.6L554.5 269.4L554.5 270.1L554.8 268.6L554.8 270.3L555.0 270.3L555.0 269.3L555.2 270.2L555.2 268.4L555.5 269.8L555.5 269.6L555.7 268.6L555.7 270.1L556.0 269.5L556.0 270.4L556.2 268.2L556.2 270.5L556.5 269.3L556.5 269.5L556.7 268.6L556.7 270.3L557.0 270.3L557.0 269.6L557.3 268.4L557.3 270.1L557.5 269.1L557.5 269.9L557.8 269.9L557.8 268.7L558.0 268.7L558.0 269.0L558.3 270.5L558.3 268.8L558.5 268.8L558.5 269.5L558.7 268.8L558.7 270.5L559.0 270.5L559.0 269.6L559.2 270.2L559.2 269.0L559.5 269.0L559.5 269.0L559.7 270.2L559.7 268.6L560.0 269.0L560.0 269.3L560.3 268.6L560.3 269.9L560.5 269.6L560.5 270.1L560.8 270.1L560.8 268.8L561.0 269.9L561.0 269.7L561.2 268.8L561.2 269.9L561.5 269.0L561.5 269.4L561.7 270.0L561.7 268.8L562.0 268.8L562.0 269.9L562.2 268.4L562.2 270.2L562.5 269.1L562.5 268.7L562.7 270.2L562.7 268.5L563.0 268.5L563.0 268.7L563.3 268.1L563.3 270.5L563.5 269.3L563.5 269.5L563.8 268.3L563.8 270.9L564.0 269.1L564.0 269.0L564.3 270.1L564.3 268.4L564.5 269.1L564.5 269.8L564.7 270.1L564.7 268.5L565.0 268.5L565.0 268.9L565.2 268.6L565.2 270.4L565.5 269.7L565.5 269.3L565.7 270.1L565.7 268.6L566.0 268.6L566.0 269.3L566.3 268.7L566.3 269.9L566.5 268.9L566.5 269.1L566.8 268.0L566.8 270.5L567.0 269.4L567.0 270.0L567.2 268.7L567.2 270.5L567.5 270.5L567.5 270.9L567.7 270.9L567.7 268.2L568.0 269.2L568.0 270.0L568.2 270.5L568.2 268.8L568.5 269.2L568.5 269.3L568.7 269.0L568.7 270.1L569.0 270.0L569.0 269.1L569.3 270.4L569.3 268.3L569.5 268.3L569.5 269.3L569.8 270.4L569.8 268.7L570.0 268.7L570.0 269.6L570.3 271.0L570.3 267.6L570.5 269.7L570.5 269.7L570.7 268.4L570.7 270.5L571.0 269.5L571.0 270.8L571.2 270.8L571.2 268.6L571.5 269.8L571.5 268.6L571.7 270.5L571.7 268.4L572.0 268.6L572.0 269.9L572.3 270.3L572.3 268.7L572.5 269.6L572.5 269.4L572.8 268.5L572.8 270.1L573.0 269.5L573.0 269.8L573.2 268.5L573.2 270.2L573.5 270.1L573.5 269.9L573.7 268.9L573.7 270.8L574.0 269.9L574.0 269.1L574.2 270.0L574.2 268.5L574.5 269.7L574.5 269.9L574.7 268.3L574.7 270.9L575.0 270.1L575.0 269.5L575.3 268.6L575.3 270.4L575.5 269.4L575.5 268.6L575.8 268.3L575.8 270.2L576.0 269.7L576.0 270.2L576.3 270.2L576.3 268.3L576.5 269.2L576.5 270.1L576.7 270.1L576.7 268.1L577.0 269.9L577.0 270.4L577.2 270.4L577.2 268.8L577.5 269.3L577.5 269.6L577.7 268.4L577.7 270.5L578.0 269.2L578.0 270.1L578.3 270.5L578.3 268.1L578.5 270.3L578.5 269.3L578.8 267.6L578.8 270.9L579.0 268.7L579.0 271.1L579.2 271.1L579.2 268.4L579.5 269.4L579.5 269.7L579.7 268.4L579.7 270.2L580.0 268.4L580.0 269.1L580.2 268.3L580.2 270.6L580.5 270.6L580.5 268.7L580.7 268.0L580.7 270.5L581.0 269.4L581.0 269.5L581.3 269.0L581.3 269.7L581.5 269.4L581.5 269.8L581.8 270.2L581.8 268.7L582.0 268.7L582.0 269.8L582.3 268.6L582.3 271.0L582.5 269.3L582.5 270.2L582.7 270.5L582.7 268.7L583.0 268.7L583.0 269.0L583.2 268.4L583.2 270.2L583.5 269.8L583.5 269.7L583.7 269.8L583.7 268.7L584.0 269.5L584.0 268.9L584.3 268.9L584.3 270.0L584.5 269.9L584.5 269.7L584.8 270.2L584.8 268.7L585.0 269.9L585.0 268.5L585.2 268.5L585.2 269.9L585.5 269.9L585.5 269.6L585.7 270.1L585.7 268.3L586.0 269.8L586.0 269.3L586.2 270.0L586.2 268.6L586.5 269.6L586.5 269.0L586.7 269.9L586.7 268.8L587.0 269.3L587.0 269.0L587.3 268.5L587.3 269.9L587.5 269.7L587.5 269.4L587.8 269.9L587.8 268.8L588.0 269.2L588.0 269.3L588.3 268.8L588.3 270.1L588.5 269.2L588.5 269.2L588.7 268.1L588.7 270.4L589.0 269.4L589.0 268.5L589.2 267.7L589.2 270.5L589.5 269.7L589.5 269.3L589.7 268.2L589.7 269.8L590.0 269.1L590.0 269.3L590.3 268.8L590.3 270.7L590.5 269.5L590.5 269.3L590.8 270.3L590.8 268.5L591.0 269.8L591.0 270.0L591.2 270.3L591.2 268.2L591.5 269.0L591.5 271.1L591.7 271.1L591.7 268.2L592.0 268.8L592.0 270.1L592.2 270.1L592.2 268.8L592.5 269.2L592.5 268.6L592.7 268.6L592.7 270.5L593.0 269.5L593.0 269.4L593.3 268.8L593.3 270.1L593.5 269.6L593.5 270.1L593.8 270.2L593.8 268.1L594.0 269.8L594.0 269.0L594.3 268.4L594.3 270.3L594.5 270.0L594.5 269.7L594.7 270.3L594.7 269.0L595.0 269.8L595.0 269.5L595.2 268.4L595.2 270.0L595.5 269.2L595.5 269.1L595.7 270.1L595.7 268.6L596.0 269.1L596.0 269.3L596.3 270.1L596.3 268.8L596.5 269.8L596.5 269.7L596.8 268.8L596.8 269.9L597.0 269.2L597.0 269.7L597.2 270.2L597.2 268.5L597.5 268.8L597.5 269.5L597.7 271.0L597.7 267.8L598.0 267.8L598.0 270.8L598.2 270.8L598.2 267.9L598.5 269.1L598.5 269.3L598.7 270.4L598.7 268.6L599.0 268.6L599.0 269.7L599.3 268.8L599.3 270.9L599.5 268.9L599.5 270.0L599.8 270.7L599.8 268.6L600.0 268.6L600.0 269.7L600.3 268.5L600.3 270.1L600.5 269.6L600.5 269.6L600.7 268.9L600.7 270.0L601.0 269.7L601.0 269.5L601.2 268.7L601.2 270.6L601.5 269.5L601.5 269.5L601.7 268.7L601.7 269.9L602.0 269.1L602.0 269.3L602.3 269.9L602.3 268.9L602.5 269.1L602.5 269.6L602.8 270.3L602.8 269.0L603.0 269.0L603.0 268.2L603.2 271.3L603.2 267.7L603.5 270.7L603.5 268.6L603.7 267.9L603.7 271.4L604.0 271.4L604.0 269.5L604.2 270.4L604.2 268.2L604.5 269.0L604.5 268.5L604.7 268.5L604.7 270.5L605.0 269.4L605.0 269.7L605.3 270.5L605.3 268.6L605.5 269.0L605.5 269.4L605.8 268.6L605.8 270.0L606.0 268.9L606.0 268.8L606.3 268.7L606.3 270.1L606.5 270.1L606.5 269.3L606.7 268.9L606.7 269.9L607.0 268.9L607.0 269.4L607.2 268.6L607.2 269.9L607.5 269.7L607.5 269.5L607.7 270.5L607.7 268.4L608.0 269.4L608.0 269.0L608.3 268.2L608.3 270.1L608.5 269.7L608.5 269.1L608.8 268.2L608.8 270.7L609.0 270.0L609.0 269.8L609.2 268.8L609.2 270.3L609.5 269.8L609.5 268.4L609.7 268.4L609.7 269.8L610.0 269.3L610.0 269.1L610.2 269.7L610.2 269.0L610.5 269.0L610.5 269.7L610.7 268.9L610.7 269.9L611.0 269.2L611.0 270.2L611.3 270.2L611.3 268.8L611.5 269.3L611.5 268.5L611.8 268.5L611.8 270.2L612.0 269.8L612.0 269.6L612.3 269.8L612.3 268.1L612.5 269.1L612.5 269.7L612.7 270.1L612.7 268.6L613.0 269.1L613.0 268.9L613.2 268.4L613.2 269.9L613.5 269.9L613.5 269.4L613.7 270.3L613.7 268.6L614.0 269.4L614.0 268.8L614.3 270.2L614.3 268.6L614.5 269.8L614.5 268.8L614.8 268.6L614.8 269.9L615.0 269.9L615.0 269.9L615.2 270.0L615.2 268.6L615.5 269.9L615.5 269.0L615.7 270.3L615.7 268.6L616.0 268.7L616.0 270.0L616.2 268.3L616.2 270.2L616.5 269.2L616.5 267.6L616.7 267.6L616.7 271.1L617.0 269.9L617.0 269.7L617.3 268.5L617.3 270.6L617.5 270.6L617.5 269.7L617.8 271.1L617.8 268.6L618.0 270.0L618.0 270.4L618.3 268.0L618.3 271.3L618.5 271.3L618.5 268.3L618.7 268.3L618.7 270.4L619.0 269.8L619.0 269.2L619.2 270.2L619.2 268.6L619.5 269.7L619.5 269.6L619.7 270.2L619.7 268.4L620.0 269.5L620.0 269.4L620.3 267.3L620.3 270.9L620.5 268.9L620.5 269.6L620.8 268.4L620.8 270.2L621.0 268.7L621.0 269.6L621.2 268.4L621.2 269.8L621.5 269.6L621.5 269.2L621.7 270.2L621.7 269.1L622.0 269.3L622.0 268.8L622.2 268.8L622.2 270.1L622.5 269.7L622.5 269.0L622.7 270.3L622.7 268.6L623.0 269.3L623.0 270.5L623.3 270.5L623.3 268.4L623.5 268.6L623.5 270.1L623.8 270.1L623.8 268.5L624.0 269.6L624.0 269.3L624.3 269.8L624.3 268.8L624.5 269.5L624.5 269.3L624.7 270.0L624.7 268.9L625.0 269.1L625.0 268.8L625.2 270.2L625.2 268.7L625.5 268.8L625.5 269.9L625.7 268.9L625.7 270.4L626.0 269.6L626.0 268.5L626.3 268.5L626.3 270.1L626.5 269.1L626.5 269.3L626.8 268.9L626.8 270.2L627.0 269.2L627.0 269.2L627.2 268.4L627.2 269.9L627.5 269.4L627.5 269.9L627.7 270.3L627.7 268.8L628.0 268.8L628.0 269.2L628.2 269.9L628.2 268.6L628.5 269.6L628.5 269.3L628.7 270.1L628.7 268.9L629.0 269.4L629.0 269.1L629.3 268.8L629.3 269.8L629.5 269.8L629.5 269.5L629.8 270.0L629.8 268.4L630.0 269.7L630.0 269.0L630.3 269.8L630.3 268.7L630.5 269.3L630.5 269.6L630.7 268.7L630.7 270.2L631.0 269.4L631.0 269.0L631.2 268.1L631.2 270.1L631.5 270.1L631.5 269.7L631.7 270.2L631.7 267.8L632.0 268.5L632.0 269.7L632.3 268.4L632.3 270.3L632.5 269.6L632.5 270.0L632.8 267.5L632.8 270.5L633.0 269.2L633.0 269.8L633.2 270.6L633.2 267.9L633.5 268.0L633.5 270.0L633.7 270.4L633.7 268.5L634.0 269.2L634.0 269.8L634.2 268.3L634.2 270.0L634.5 268.8L634.5 269.2L634.7 270.4L634.7 268.4L635.0 269.6L635.0 269.2L635.3 270.1L635.3 268.6L635.5 269.1L635.5 269.2L635.8 268.7L635.8 270.1L636.0 269.1L636.0 269.5L636.3 270.0L636.3 268.6L636.5 269.8L636.5 269.7L636.7 268.7L636.7 270.4L637.0 269.3L637.0 269.6L637.2 268.7L637.2 270.3L637.5 269.6L637.5 269.5L637.7 268.4L637.7 270.3L638.0 269.0L638.0 269.5L638.3 270.0L638.3 268.5L638.5 269.2L638.5 269.4L638.8 270.0L638.8 268.7L639.0 269.4L639.0 269.8L639.2 268.4L639.2 270.4L639.5 269.7L639.5 269.6L639.7 268.4L639.7 270.2L640.0 269.3L640.0 269.3L640.2 270.1L640.2 268.7L640.5 269.2L640.5 268.1L640.7 268.1L640.7 270.4L641.0 269.9L641.0 269.1L641.3 269.9L641.3 268.9L641.5 269.5L641.5 269.1L641.8 268.4L641.8 270.1L642.0 269.3L642.0 270.1L642.3 270.1L642.3 267.7L642.5 268.7L642.5 269.3L642.7 268.8L642.7 270.0L643.0 269.1L643.0 268.8L643.2 268.5L643.2 270.2L643.5 269.3L643.5 269.4L643.7 268.4L643.7 270.2L644.0 269.4L644.0 269.5L644.3 270.4L644.3 268.6L644.5 268.6L644.5 269.9L644.8 269.9L644.8 268.8L645.0 269.5L645.0 269.2L645.2 268.6L645.2 270.3L645.5 269.2L645.5 269.0L645.7 269.8L645.7 268.6L646.0 269.4L646.0 269.0L646.2 268.7L646.2 270.2L646.5 269.5L646.5 269.2L646.7 268.6L646.7 270.2L647.0 269.9L647.0 268.8L647.3 270.1L647.3 268.3L647.5 269.5L647.5 268.6L647.8 268.6L647.8 270.3L648.0 269.4L648.0 269.3L648.3 268.1L648.3 270.3L648.5 269.1L648.5 268.2L648.7 268.2L648.7 269.9L649.0 269.1L649.0 269.0L649.2 269.0L649.2 269.9L649.5 269.9L649.5 269.5L649.7 270.2L649.7 268.8L650.0 269.7L650.0 268.8L650.3 269.8L650.3 268.8L650.5 269.2L650.5 269.6L650.8 270.0L650.8 268.1L651.0 269.4L651.0 268.6L651.2 268.6L651.2 270.5L651.5 269.5L651.5 269.8L651.7 268.6L651.7 270.0L652.0 269.9L652.0 269.6L652.2 270.3L652.2 268.8L652.5 269.4L652.5 269.4L652.7 270.2L652.7 268.3L653.0 269.2L653.0 269.1L653.3 268.6L653.3 270.0L653.5 269.2L653.5 269.8L653.8 268.7L653.8 270.7L654.0 269.8L654.0 269.1L654.3 268.7L654.3 270.2L654.5 268.8L654.5 269.9L654.7 270.5L654.7 268.2L655.0 268.2L655.0 268.8L655.2 270.3L655.2 268.8L655.5 270.2L655.5 269.6L655.7 270.4L655.7 268.8L656.0 269.8L656.0 269.4L656.3 269.9L656.3 268.5L656.5 268.8L656.5 269.3L656.8 270.1L656.8 268.6L657.0 269.3L657.0 269.2L657.2 269.0L657.2 270.2L657.5 269.1L657.5 269.9L657.7 268.4L657.7 270.4L658.0 270.4L658.0 269.9L658.2 270.5L658.2 268.6L658.5 269.3L658.5 269.1L658.7 270.7L658.7 268.8L659.0 269.3L659.0 269.5L659.3 268.5L659.3 270.3L659.5 270.3L659.5 268.8L659.8 269.9L659.8 268.3L660.0 269.3L660.0 269.8L660.3 268.3L660.3 270.3L660.5 269.3L660.5 270.0L660.7 268.3L660.7 270.4L661.0 270.2L661.0 269.6L661.2 270.0L661.2 268.5L661.5 269.3L661.5 270.0L661.7 270.5L661.7 268.5L662.0 269.4L662.0 269.1L662.3 270.6L662.3 268.0L662.5 269.4L662.5 269.8L662.8 268.5L662.8 270.6L663.0 269.6L663.0 269.6L663.2 268.5L663.2 270.6L663.5 270.2L663.5 269.3L663.7 269.9L663.7 268.4L664.0 268.4L664.0 269.3L664.2 268.9L664.2 270.3L664.5 269.9L664.5 269.4L664.7 268.8L664.7 270.2L665.0 270.1L665.0 269.5L665.3 270.5L665.3 268.6L665.5 269.4L665.5 269.1L665.8 270.0L665.8 268.9L666.0 269.6L666.0 269.9L666.3 269.9L666.3 268.7L666.5 269.3L666.5 269.4L666.7 268.5L666.7 270.2L667.0 269.0L667.0 269.7L667.2 270.0L667.2 268.5L667.5 269.7L667.5 269.4L667.7 268.8L667.7 270.2L668.0 270.2L668.0 269.8L668.3 268.5L668.3 270.2L668.5 269.3L668.5 270.4L668.8 271.4L668.8 268.0L669.0 269.6L669.0 268.5L669.2 268.4L669.2 270.7L669.5 269.6L669.5 270.1L669.7 270.2L669.7 268.4L670.0 269.7L670.0 269.4L670.2 269.0L670.2 270.0L670.5 269.6L670.5 269.7L670.7 268.6L670.7 270.1L671.0 269.3L671.0 269.3L671.3 270.1L671.3 268.8L671.5 269.6L671.5 269.8L671.8 268.6L671.8 270.1L672.0 269.3L672.0 269.0L672.3 270.2L672.3 268.7L672.5 268.9L672.5 269.4L672.7 268.7L672.7 270.1L673.0 269.5L673.0 269.7L673.2 268.4L673.2 270.4L673.5 270.4L673.5 269.0L673.7 269.9L673.7 268.3L674.0 269.3L674.0 269.6L674.3 270.2L674.3 267.8L674.5 269.6L674.5 268.3L674.8 268.3L674.8 270.8L675.0 269.9L675.0 268.6L675.2 268.3L675.2 270.2L675.5 269.0L675.5 269.3L675.7 270.4L675.7 268.6L676.0 269.1L676.0 269.9L676.2 270.4L676.2 268.6L676.5 269.6L676.5 269.4L676.7 268.3L676.7 269.8L677.0 269.0L677.0 268.9L677.3 268.9L677.3 269.8L677.5 269.0L677.5 269.2L677.8 270.3L677.8 269.1L678.0 269.7L678.0 269.1L678.3 270.4L678.3 268.4L678.5 269.4L678.5 269.9L678.7 270.6L678.7 268.4L679.0 269.0L679.0 269.8L679.2 268.8L679.2 269.9L679.5 269.0L679.5 268.8L679.7 268.2L679.7 269.9L680.0 269.3L680.0 269.7L680.3 270.0L680.3 268.7L680.5 269.1L680.5 269.0L680.8 270.2L680.8 268.9L681.0 269.3L681.0 269.6L681.2 270.3L681.2 268.8L681.5 269.8L681.5 269.3L681.7 270.2L681.7 268.9L682.0 269.3L682.0 269.3L682.2 268.4L682.2 269.9L682.5 269.6L682.5 269.2L682.7 270.2L682.7 268.8L683.0 269.6L683.0 268.9L683.3 270.1L683.3 268.9L683.5 269.1L683.5 269.2L683.8 270.2L683.8 268.5L684.0 269.5L684.0 269.7L684.3 270.4L684.3 268.5L684.5 269.1L684.5 268.2L684.7 268.2L684.7 270.4L685.0 268.8L685.0 269.5L685.2 270.2L685.2 268.8L685.5 269.3L685.5 269.4L685.7 268.6L685.7 270.5L686.0 269.4L686.0 269.1L686.3 269.9L686.3 268.3L686.5 269.4L686.5 269.2L686.8 269.0L686.8 270.2L687.0 269.7L687.0 269.3L687.2 268.2L687.2 270.1L687.5 270.1L687.5 269.6L687.7 267.9L687.7 270.4L688.0 269.3L688.0 268.9L688.2 268.3L688.2 270.4L688.5 269.7L688.5 269.2L688.7 268.3L688.7 270.0L689.0 269.8L689.0 268.6L689.3 268.6L689.3 270.1L689.5 269.7L689.5 269.5L689.8 270.1L689.8 268.5L690.0 268.5L690.0 268.9L690.3 268.9L690.3 269.9L690.5 269.9L690.5 269.5L690.7 269.9L690.7 269.0L691.0 269.8L691.0 269.6L691.2 268.9L691.2 270.2L691.5 269.6L691.5 268.9L691.7 268.7L691.7 270.0L692.0 268.8L692.0 269.4L692.3 268.4L692.3 270.4L692.5 268.7L692.5 269.5L692.8 268.7L692.8 269.9L693.0 269.9L693.0 269.7L693.2 268.4L693.2 269.9L693.5 269.6L693.5 268.8L693.7 268.8L693.7 270.3L694.0 270.1L694.0 269.0L694.2 270.3L694.2 269.0L694.5 269.2L694.5 269.7L694.7 268.8L694.7 270.1L695.0 269.4L695.0 269.0L695.3 270.4L695.3 268.6L695.5 269.5L695.5 270.1L695.8 270.1L695.8 269.0L696.0 269.9L696.0 269.4L696.3 270.2L696.3 268.7L696.5 269.1L696.5 269.2L696.7 270.8L696.7 268.7L697.0 269.4L697.0 269.5L697.2 269.0L697.2 270.1L697.5 269.7L697.5 269.2L697.7 270.0L697.7 268.7L698.0 269.5L698.0 269.4L698.3 268.1L698.3 270.6L698.5 269.8L698.5 269.1L698.8 268.9L698.8 270.4L699.0 270.4L699.0 269.5L699.2 270.1L699.2 268.5L699.5 268.5L699.5 269.2L699.7 268.6L699.7 270.1L700.0 269.5L700.0 269.5L700.2 270.5L700.2 268.8L700.5 268.8L700.5 269.7L700.7 270.3L700.7 268.7L701.0 269.2L701.0 268.8L701.3 268.6L701.3 270.6L701.5 268.9L701.5 269.8L701.8 270.1L701.8 268.7L702.0 269.7L702.0 269.2L702.3 270.0L702.3 268.6L702.5 269.6L702.5 269.6L702.7 269.7L702.7 268.9L703.0 269.4L703.0 269.3L703.2 270.1L703.2 268.4L703.5 269.8L703.5 269.3L703.7 268.8L703.7 270.1L704.0 269.5L704.0 269.3L704.3 269.9L704.3 268.8L704.5 269.4L704.5 268.8L704.8 268.6L704.8 270.0L705.0 269.4L705.0 269.9L705.2 270.4L705.2 268.4L705.5 269.3L705.5 270.0L705.7 268.5L705.7 270.1L706.0 270.1L706.0 269.4L706.2 268.9L706.2 270.2L706.5 269.5L706.5 269.6L706.7 269.8L706.7 268.8L707.0 269.6L707.0 269.6L707.3 270.5L707.3 268.9L707.5 268.9L707.5 269.1L707.8 268.9L707.8 269.9L708.0 269.0L708.0 269.2L708.3 270.4L708.3 269.0L708.5 269.4L708.5 269.0L708.7 270.2L708.7 268.9L709.0 269.7L709.0 269.5L709.2 268.5L709.2 270.1L709.5 268.7L709.5 268.7L709.7 270.1L709.7 268.6L710.0 269.0L710.0 269.6L710.3 268.4L710.3 269.9L710.5 269.9L710.5 269.0L710.8 270.1L710.8 268.1L711.0 269.7L711.0 269.4L711.2 270.1L711.2 268.5L711.5 269.2L711.5 268.4L711.7 268.4L711.7 270.6L712.0 269.9L712.0 269.5L712.2 268.7L712.2 270.4L712.5 268.8L712.5 268.9L712.7 268.7L712.7 270.2L713.0 269.8L713.0 269.0L713.3 268.5L713.3 270.0L713.5 269.0L713.5 269.6L713.8 268.5L713.8 270.3L714.0 269.5L714.0 269.7L714.3 269.9L714.3 268.8L714.5 269.4L714.5 269.8L714.7 270.1L714.7 268.7L715.0 269.8L715.0 269.4L715.2 268.0L715.2 270.1L715.5 270.1L715.5 269.2L715.7 268.9L715.7 270.1L716.0 269.5L716.0 269.2L716.3 270.4L716.3 268.6L716.5 268.6L716.5 269.3L716.8 270.4L716.8 268.5L717.0 268.5L717.0 269.2L717.2 270.3L717.2 268.2L717.5 269.4L717.5 269.2L717.7 268.6L717.7 270.1L718.0 269.0L718.0 269.1L718.2 270.3L718.2 268.6L718.5 270.0L718.5 269.8L718.7 269.8L718.7 268.7L719.0 269.7L719.0 269.0L719.3 268.8L719.3 270.0L719.5 269.4L719.5 269.6L719.8 268.8L719.8 270.3L720.0 269.8L720.0 270.0L720.3 270.0L720.3 268.8L720.5 268.9L720.5 270.1L720.7 270.1L720.7 269.0L721.0 269.3L721.0 270.0L721.2 270.1L721.2 268.8L721.5 269.5L721.5 269.4L721.7 270.4L721.7 268.7L722.0 269.2L722.0 269.4L722.3 270.2L722.3 268.6L722.5 269.7L722.5 269.4L722.8 268.5L722.8 270.2L723.0 268.8L723.0 268.0L723.2 268.0L723.2 270.4L723.5 269.2L723.5 269.6L723.7 268.8L723.7 270.2L724.0 269.8L724.0 269.2L724.2 269.9L724.2 269.1L724.5 269.5L724.5 269.9L724.7 269.9L724.7 268.6L725.0 269.4L725.0 269.5L725.3 268.7L725.3 269.9L725.5 269.2L725.5 268.9L725.8 270.1L725.8 268.5L726.0 268.7L726.0 269.5L726.3 268.8L726.3 270.4L726.5 269.8L726.5 269.5L726.7 270.1L726.7 268.7L727.0 269.6L727.0 269.8L727.2 268.2L727.2 270.4L727.5 268.9L727.5 268.7L727.7 270.2L727.7 268.1L728.0 269.8L728.0 269.2L728.3 268.4L728.3 270.0L728.5 269.2L728.5 269.6L728.8 270.0L728.8 268.7L729.0 268.7L729.0 268.0L729.2 268.0L729.2 270.0L729.5 268.8L729.5 269.0L729.7 269.0L729.7 270.3L730.0 269.8L730.0 269.5L730.2 268.9L730.2 270.2L730.5 269.0L730.5 269.4L730.7 268.5L730.7 270.5L731.0 269.0L731.0 269.7L731.3 270.2L731.3 268.5L731.5 269.7L731.5 269.3L731.8 268.2L731.8 270.1L732.0 269.9L732.0 269.3L732.3 268.1L732.3 270.3L732.5 268.9L732.5 269.3L732.7 270.0L732.7 268.7L733.0 270.0L733.0 268.7L733.2 268.3L733.2 270.4L733.5 269.0L733.5 269.9L733.7 270.1L733.7 268.7L734.0 269.3L734.0 269.3L734.3 268.6L734.3 270.2L734.5 269.4L734.5 269.2L734.8 271.0L734.8 268.7L735.0 268.9L735.0 268.2L735.2 268.2L735.2 270.2L735.5 269.8L735.5 269.6L735.7 268.7L735.7 270.3L736.0 269.4L736.0 269.3L736.2 270.6L736.2 269.1L736.5 269.4L736.5 269.7L736.7 269.9L736.7 268.8L737.0 268.9L737.0 269.8L737.3 270.6L737.3 268.2L737.5 269.5L737.5 270.4L737.8 270.4L737.8 267.8L738.0 269.1L738.0 270.0L738.3 270.0L738.3 268.6L738.5 269.6L738.5 269.0L738.7 268.7L738.7 270.3L739.0 268.9L739.0 268.4L739.2 268.4L739.2 270.1L739.5 268.9L739.5 269.6L739.7 270.2L739.7 268.4L740.0 269.8L740.0 269.3L740.3 270.1L740.3 268.4L740.5 269.1L740.5 268.4L740.8 268.4L740.8 270.2L741.0 269.9L741.0 269.9L741.2 268.7L741.2 270.2L741.5 269.5L741.5 268.9L741.7 267.8L741.7 271.9L742.0 269.7L742.0 269.3L742.2 268.0L742.2 270.9L742.5 270.3L742.5 269.3L742.7 270.7L742.7 268.1L743.0 268.3L743.0 270.3L743.3 268.6L743.3 270.5L743.5 269.6L743.5 269.0L743.8 268.1L743.8 269.9L744.0 269.8L744.0 269.6L744.3 268.5L744.3 269.9L744.5 269.2L744.5 269.6L744.7 270.3L744.7 268.6L745.0 269.3L745.0 269.3L745.2 268.8L745.2 270.3L745.5 269.2L745.5 269.9L745.7 271.1L745.7 267.9L746.0 270.8L746.0 269.7L746.3 270.3L746.3 268.3L746.5 269.4L746.5 269.9L746.8 270.3L746.8 268.7L747.0 270.0L747.0 269.4L747.2 268.7L747.2 270.5L747.5 270.5L747.5 270.0L747.7 270.3L747.7 268.6L748.0 269.3L748.0 269.2L748.2 268.9L748.2 269.9L748.5 269.4L748.5 270.0L748.7 270.3L748.7 268.3L749.0 268.3L749.0 268.5L749.3 271.1L749.3 268.0L749.5 269.4L749.5 267.3L749.8 267.3L749.8 271.0L750.0 269.4L750.0 268.3L750.3 268.0L750.3 270.5L750.5 270.2L750.5 269.3L750.7 270.1L750.7 268.8L751.0 269.3L751.0 269.7L751.2 268.7L751.2 270.3L751.5 270.3L751.5 269.9L751.7 270.0L751.7 268.7L752.0 268.7L752.0 270.4L752.3 270.4L752.3 268.2L752.5 269.8L752.5 269.2L752.8 270.6L752.8 268.3L753.0 269.7L753.0 269.1L753.2 268.7L753.2 270.5L753.5 269.7L753.5 269.9L753.7 268.5L753.7 270.3L754.0 270.0L754.0 270.0L754.2 270.0L754.2 268.4L754.5 269.2L754.5 270.4L754.7 270.4L754.7 268.7L755.0 269.1L755.0 269.2L755.3 268.6L755.3 270.2L755.5 269.4L755.5 269.3L755.8 268.7L755.8 270.0L756.0 269.5L756.0 269.2L756.3 269.9L756.3 268.9L756.5 269.3L756.5 269.7L756.7 268.7L756.7 270.0L757.0 269.4L757.0 268.9L757.2 268.8L757.2 269.9L757.5 269.1L757.5 269.6L757.7 270.0L757.7 268.8L758.0 270.0L758.0 269.8L758.3 268.0L758.3 270.2L758.5 268.5L758.5 269.8L758.8 270.3L758.8 268.6L759.0 269.7L759.0 270.0L759.2 268.9L759.2 270.2L759.5 269.5L759.5 269.5L759.7 268.4L759.7 270.2L760.0 269.0L760.0 270.1L760.2 270.4L760.2 269.0L760.5 269.7L760.5 269.3L760.7 268.9L760.7 269.8L761.0 269.3L761.0 269.1L761.3 269.9L761.3 268.9L761.5 269.6L761.5 269.3L761.8 269.0L761.8 270.4L762.0 269.1L762.0 269.0L762.3 270.5L762.3 268.1L762.5 269.1L762.5 269.6L762.7 271.1L762.7 268.4L763.0 269.4L763.0 269.8L763.2 267.9L763.2 270.1L763.5 269.3L763.5 269.9L763.7 270.3L763.7 268.4L764.0 269.6L764.0 268.1L764.3 268.1L764.3 270.7L764.5 268.7L764.5 269.2L764.8 270.3L764.8 267.9L765.0 268.7L765.0 270.2L765.2 270.2L765.2 268.5L765.5 269.0L765.5 269.4L765.7 268.4L765.7 270.3L766.0 269.6L766.0 268.8L766.2 268.8L766.2 270.1L766.5 269.1L766.5 268.7L766.7 270.3L766.7 268.5L767.0 268.9L767.0 269.4L767.3 270.3L767.3 268.8L767.5 269.1L767.5 269.6L767.8 270.0L767.8 268.7L768.0 269.2L768.0 269.0L768.3 270.0L768.3 268.6L768.5 269.1L768.5 269.2L768.7 270.2L768.7 268.7L769.0 270.0L769.0 269.6L769.2 268.7L769.2 270.1L769.5 269.1L769.5 270.0L769.7 270.0L769.7 268.2L770.0 269.1L770.0 268.8L770.3 268.8L770.3 270.1L770.5 268.9L770.5 269.9L770.8 270.4L770.8 268.7L771.0 269.4L771.0 269.1L771.2 269.9L771.2 268.5L771.5 269.6L771.5 269.3L771.7 268.8L771.7 270.1L772.0 269.2L772.0 270.2L772.2 270.2L772.2 268.5L772.5 269.9L772.5 269.2L772.7 268.6L772.7 270.2L773.0 269.9L773.0 270.3L773.3 270.3L773.3 268.7L773.5 269.8L773.5 269.4L773.8 268.7L773.8 270.7L774.0 269.4L774.0 268.6L774.3 268.6L774.3 270.0L774.5 269.7L774.5 269.1L774.7 268.6L774.7 270.0L775.0 270.0L775.0 269.4L775.2 268.6L775.2 270.5L775.5 270.5L775.5 269.2L775.7 268.0L775.7 270.2L776.0 268.1L776.0 270.2L776.3 267.7L776.3 270.2L776.5 269.9L776.5 268.9L776.8 267.9L776.8 270.0L777.0 269.7L777.0 269.1L777.2 269.9L777.2 268.8L777.5 269.2L777.5 269.1L777.7 269.9L777.7 268.6L778.0 269.4L778.0 268.9L778.2 268.8L778.2 269.9L778.5 269.9L778.5 269.7L778.7 269.1L778.7 270.5L779.0 269.2L779.0 269.3L779.3 270.1L779.3 268.7L779.5 269.6L779.5 268.6L779.8 270.5L779.8 268.4L780.0 269.4L780.0 269.4L780.3 270.3L780.3 268.5L780.5 268.7L780.5 269.3L780.7 269.9L780.7 268.8L781.0 269.4L781.0 270.1L781.2 270.2L781.2 269.0L781.5 269.0L781.5 269.1L781.7 268.9L781.7 270.1L782.0 269.3L782.0 269.7L782.3 269.7L782.3 268.7L782.5 268.7L782.5 270.4L782.8 268.6L782.8 271.4L783.0 271.4L783.0 269.6L783.2 267.8L783.2 270.9L783.5 269.9L783.5 270.6L783.7 270.6L783.7 267.3L784.0 269.1L784.0 269.1L784.2 270.4L784.2 268.0L784.5 269.0L784.5 270.5L784.7 270.5L784.7 268.4L785.0 269.2L785.0 269.3L785.3 268.6L785.3 269.8L785.5 269.0L785.5 269.1L785.8 268.4L785.8 270.0L786.0 269.1L786.0 269.0L786.3 270.1L786.3 269.0L786.5 269.8L786.5 269.6L786.7 268.8L786.7 270.5L787.0 269.1L787.0 270.1L787.2 268.2L787.2 270.9L787.5 268.7L787.5 268.8L787.7 268.5L787.7 270.4L788.0 269.0L788.0 268.8L788.3 267.5L788.3 271.1L788.5 269.2L788.5 270.0L788.8 270.8L788.8 268.4L789.0 268.5L789.0 269.3L789.2 268.6L789.2 271.0L789.5 268.9L789.5 268.9L789.7 268.1L789.7 270.9L790.0 270.9L790.0 268.6L790.2 268.2L790.2 271.3L790.5 269.7L790.5 268.5L790.7 268.3L790.7 270.7L791.0 268.8L791.0 268.6L791.3 268.6L791.3 270.3L791.5 270.1L791.5 269.3L791.8 268.6L791.8 270.6L792.0 269.1L792.0 269.5L792.3 270.1L792.3 268.3L792.5 268.8L792.5 269.1L792.7 268.1L792.7 270.3L793.0 269.9L793.0 269.0L793.2 270.6L793.2 268.7L793.5 269.7L793.5 268.8L793.7 268.6L793.7 270.7L794.0 269.1L794.0 269.5L794.3 270.3L794.3 268.7L794.5 269.9L794.5 269.1L794.8 270.4L794.8 268.9L795.0 268.9L795.0 269.2L795.2 270.3L795.2 268.6L795.5 268.6L795.5 269.4L795.7 268.6L795.7 270.3L796.0 269.9L796.0 269.0L796.2 270.0L796.2 268.9L796.5 269.7L796.5 269.5L796.7 270.1L796.7 268.6L797.0 268.6L797.0 269.9L797.3 269.0L797.3 270.2L797.5 269.2L797.5 268.8L797.8 270.7L797.8 268.6L798.0 270.2L798.0 269.3L798.3 270.0L798.3 268.2L798.5 268.7L798.5 269.0L798.7 268.3L798.7 270.8L799.0 269.1L799.0 269.0L799.2 270.4L799.2 268.3L799.5 269.8L799.5 268.5L799.7 268.4L799.7 269.9L800.0 269.8L800.0 269.1L800.3 268.3L800.3 270.0L800.5 269.4L800.5 268.8L800.8 270.1L800.8 268.1L801.0 269.4L801.0 268.5L801.2 270.5L801.2 267.9L801.5 270.2L801.5 269.7L801.7 270.0L801.7 268.6L802.0 268.9L802.0 269.7L802.2 269.9L802.2 268.3L802.5 269.1L802.5 268.5L802.7 268.5L802.7 270.3L803.0 269.2L803.0 269.2L803.3 268.9L803.3 270.0L803.5 269.2L803.5 269.5L803.8 268.6L803.8 270.4L804.0 269.3L804.0 268.8L804.3 268.8L804.3 269.8L804.5 269.4L804.5 269.5L804.7 270.7L804.7 268.8L805.0 270.3L805.0 269.0L805.2 271.0L805.2 268.7L805.5 270.6L805.5 269.7L805.7 268.6L805.7 270.0L806.0 269.0L806.0 269.2L806.3 270.1L806.3 268.5L806.5 269.0L806.5 269.2L806.8 268.7L806.8 270.0L807.0 269.3L807.0 269.0L807.2 270.0L807.2 268.8L807.5 269.2L807.5 269.4L807.7 269.9L807.7 269.1L808.0 269.1L808.0 269.6L808.2 268.9L808.2 270.1L808.5 269.6L808.5 268.8L808.7 269.9L808.7 268.5L809.0 269.3L809.0 269.7L809.3 268.5L809.3 270.0L809.5 269.8L809.5 269.7L809.8 270.4L809.8 268.7L810.0 268.7L810.0 270.0L810.3 268.5L810.3 270.3L810.5 269.8L810.5 269.7L810.7 270.3L810.7 269.2L811.0 269.7L811.0 269.7L811.2 270.1L811.2 268.6L811.5 268.7L811.5 268.3L811.7 270.5L811.7 268.3L812.0 269.3L812.0 270.0L812.3 268.6L812.3 270.8L812.5 270.5L812.5 270.3L812.8 270.6L812.8 268.0L813.0 268.0L813.0 270.1L813.2 270.5L813.2 268.2L813.5 270.0L813.5 270.4L813.7 270.4L813.7 268.0L814.0 269.7L814.0 268.7L814.2 268.7L814.2 270.6L814.5 270.6L814.5 270.4L814.7 270.4L814.7 268.9L815.0 269.9L815.0 269.4L815.3 268.8L815.3 270.1L815.5 269.6L815.5 269.5L815.8 268.7L815.8 269.9L816.0 269.2L816.0 269.4L816.3 268.7L816.3 270.0L816.5 269.6L816.5 269.5L816.7 268.8L816.7 269.8L817.0 269.5L817.0 270.2L817.2 270.2L817.2 268.7L817.5 270.1L817.5 269.7L817.7 270.1L817.7 268.9L818.0 269.5L818.0 269.9L818.3 268.7L818.3 270.2L818.5 270.2L818.5 269.0L818.8 268.9L818.8 270.1L819.0 269.1L819.0 270.1L819.2 268.5L819.2 270.1L819.5 269.4L819.5 268.9L819.7 270.1L819.7 268.8L820.0 269.7L820.0 268.7L820.2 268.7L820.2 269.9L820.5 269.0L820.5 269.3L820.7 270.3L820.7 268.7L821.0 269.5L821.0 268.7L821.3 270.5L821.3 268.2L821.5 268.2L821.5 270.6L821.8 270.6L821.8 268.5L822.0 269.3L822.0 268.8L822.3 268.8L822.3 269.9L822.5 269.6L822.5 269.7L822.7 270.1L822.7 269.1L823.0 269.1L823.0 269.6L823.2 270.4L823.2 268.7L823.5 269.3L823.5 270.0L823.7 268.4L823.7 270.1L824.0 269.2L824.0 268.8L824.3 268.6L824.3 270.3L824.5 269.4L824.5 268.8L824.8 270.1L824.8 268.7L825.0 269.7L825.0 268.8L825.2 268.3L825.2 270.5L825.5 269.0L825.5 269.0L825.7 268.1L825.7 270.4L826.0 268.9L826.0 269.2L826.2 268.4L826.2 270.2L826.5 268.8L826.5 269.0L826.7 269.9L826.7 268.4L827.0 269.6L827.0 269.2L827.3 270.2L827.3 269.0L827.5 269.6L827.5 269.0L827.8 269.9L827.8 268.8L828.0 269.6L828.0 269.5L828.3 268.7L828.3 270.0L828.5 269.6L828.5 268.8L828.7 268.8L828.7 270.1L829.0 269.4L829.0 269.5L829.2 269.9L829.2 268.8L829.5 269.7L829.5 269.3L829.7 270.1L829.7 268.4L830.0 268.4L830.0 269.8L830.3 269.0L830.3 270.2L830.5 269.4L830.5 269.6L830.8 268.4L830.8 270.8L831.0 270.1L831.0 269.7L831.2 270.3L831.2 268.7L831.5 269.4L831.5 269.9L831.7 270.3L831.7 268.4L832.0 269.9L832.0 270.8L832.2 270.8L832.2 268.4L832.5 269.1L832.5 269.2L832.7 268.3L832.7 269.9L833.0 269.6L833.0 268.4L833.3 270.3L833.3 268.3L833.5 268.5L833.5 269.3L833.8 268.8L833.8 270.4L834.0 269.2L834.0 268.7L834.3 270.2L834.3 268.7L834.5 268.7L834.5 269.0L834.7 270.1L834.7 268.5L835.0 269.2L835.0 268.8L835.2 270.0L835.2 268.0L835.5 269.1L835.5 269.3L835.7 270.4L835.7 268.7L836.0 269.3L836.0 269.6L836.3 270.3L836.3 268.2L836.5 270.1L836.5 269.5L836.8 270.3L836.8 268.2L837.0 269.9L837.0 270.1L837.2 270.5L837.2 268.8L837.5 269.2L837.5 270.0L837.7 269.0L837.7 270.1L838.0 269.4L838.0 269.5L838.2 270.0L838.2 268.7L838.5 269.2L838.5 269.3L838.7 270.4L838.7 268.7L839.0 268.7L839.0 268.8L839.3 270.6L839.3 268.3L839.5 270.0L839.5 269.9L839.8 270.2L839.8 268.9L840.0 269.0L840.0 269.6L840.3 270.2L840.3 268.0L840.5 268.0L840.5 269.1L840.7 268.6L840.7 270.4L841.0 269.3L841.0 269.5L841.2 268.5L841.2 270.5L841.5 270.5L841.5 269.4L841.7 270.8L841.7 267.8L842.0 270.0L842.0 270.1L842.3 270.7L842.3 267.4L842.5 270.0L842.5 268.9L842.8 268.6L842.8 270.0L843.0 269.6L843.0 269.5L843.2 270.0L843.2 267.7L843.5 269.5L843.5 269.4L843.7 268.0L843.7 270.7L844.0 270.3L844.0 267.6L844.2 267.6L844.2 270.2L844.5 268.7L844.5 268.8L844.7 270.3L844.7 268.2L845.0 269.8L845.0 269.2L845.3 268.5L845.3 269.9L845.5 269.0L845.5 269.7L845.8 269.9L845.8 268.8L846.0 269.7L846.0 269.3L846.3 268.6L846.3 270.1L846.5 269.1L846.5 268.6L846.7 268.6L846.7 270.2L847.0 268.8L847.0 269.0L847.2 270.1L847.2 268.2L847.5 269.8L847.5 269.0L847.7 268.2L847.7 270.1L848.0 269.4L848.0 269.3L848.3 268.6L848.3 270.2L848.5 269.4L848.5 269.5L848.8 268.8L848.8 270.6L849.0 269.4L849.0 269.6L849.2 268.8L849.2 270.2L849.5 269.7L849.5 270.0L849.7 270.0L849.7 268.6L850.0 269.3L850.0 269.1L850.2 270.8L850.2 268.8L850.5 269.4L850.5 268.9L850.7 269.8L850.7 268.7L851.0 269.8L851.0 269.7L851.3 269.9L851.3 269.0L851.5 269.5L851.5 269.7L851.8 268.9L851.8 269.9L852.0 269.2L852.0 269.7L852.3 268.8L852.3 270.2L852.5 269.4L852.5 269.7L852.7 270.4L852.7 268.4L853.0 269.7L853.0 270.2L853.2 270.2L853.2 268.9L853.5 269.3L853.5 269.3L853.7 270.3L853.7 268.3L854.0 269.2L854.0 269.3L854.3 268.6L854.3 270.3L854.5 269.2L854.5 269.9L854.8 268.7L854.8 270.0L855.0 269.5L855.0 268.9L855.2 270.2L855.2 268.7L855.5 268.7L855.5 269.6L855.7 270.9L855.7 268.3L856.0 269.2L856.0 269.4L856.2 270.8L856.2 268.6L856.5 268.7L856.5 269.5L856.7 268.5L856.7 270.3L857.0 269.6L857.0 269.3L857.3 268.6L857.3 270.3L857.5 269.6L857.5 269.6L857.8 270.0L857.8 268.8L858.0 269.5L858.0 269.6L858.3 269.7L858.3 269.0L858.5 269.0L858.5 269.4L858.7 270.0L858.7 268.6L859.0 269.4L859.0 269.3L859.2 268.7L859.2 270.0L859.5 269.7L859.5 269.7L859.7 268.5L859.7 270.0L860.0 269.5L860.0 269.7L860.3 269.9L860.3 268.5L860.5 268.6L860.5 269.6L860.8 268.6L860.8 270.0L861.0 269.3L861.0 269.5L861.2 270.4L861.2 268.4L861.5 269.8L861.5 269.7L861.7 268.8L861.7 270.1L862.0 269.4L862.0 269.5L862.2 270.2L862.2 269.0L862.5 269.1L862.5 270.1L862.7 270.1L862.7 268.7L863.0 268.7L863.0 269.6L863.3 269.8L863.3 268.7L863.5 268.9L863.5 269.2L863.8 269.9L863.8 268.9L864.0 269.8L864.0 269.4L864.3 268.5L864.3 269.9L864.5 268.6L864.5 270.0L864.7 270.0L864.7 268.5L865.0 269.5L865.0 269.8L865.2 269.9L865.2 268.7L865.5 269.2L865.5 269.1L865.7 268.4L865.7 270.1L866.0 268.7L866.0 269.5L866.3 270.4L866.3 268.7L866.5 269.5L866.5 269.6L866.8 268.5L866.8 270.1L867.0 269.1L867.0 270.0L867.2 270.0L867.2 268.6L867.5 269.6L867.5 269.1L867.7 269.7L867.7 268.7L868.0 268.7L868.0 270.1L868.2 270.3L868.2 268.6L868.5 270.2L868.5 269.1L868.7 270.0L868.7 268.4L869.0 269.4L869.0 269.1L869.3 268.8L869.3 270.0L869.5 269.6L869.5 269.9L869.8 268.5L869.8 270.1L870.0 269.8L870.0 269.5L870.3 270.0L870.3 268.8L870.5 268.8L870.5 269.2L870.7 270.0L870.7 268.7L871.0 269.8L871.0 269.5L871.2 269.9L871.2 268.8L871.5 269.6L871.5 268.9L871.7 268.7L871.7 270.2L872.0 270.2L872.0 269.0L872.3 269.0L872.3 270.4L872.5 269.7L872.5 269.7L872.8 270.4L872.8 268.4L873.0 269.2L873.0 269.2L873.2 268.3L873.2 270.4L873.5 269.2L873.5 269.6L873.7 268.7L873.7 270.2L874.0 269.2L874.0 269.2L874.2 268.6L874.2 270.2L874.5 269.9L874.5 268.4L874.7 270.4L874.7 268.2L875.0 268.2L875.0 270.0L875.3 268.5L875.3 270.2L875.5 269.4L875.5 269.7L875.8 270.4L875.8 268.8L876.0 269.4L876.0 269.4L876.3 269.0L876.3 270.1L876.5 269.4L876.5 269.5L876.7 268.8L876.7 270.3L877.0 269.2L877.0 269.7L877.2 269.9L877.2 268.9L877.5 268.9L877.5 269.7L877.7 268.6L877.7 270.5L878.0 269.5L878.0 269.7L878.3 270.1L878.3 268.8L878.5 269.3L878.5 269.3L878.8 269.8L878.8 268.9L879.0 269.4L879.0 269.4L879.2 268.6L879.2 270.3L879.5 268.9" fill="none" stroke="#ff6929" stroke-width="1" stroke-linejoin="round"/>
</g>
<g shape-rendering="crispEdges"><text x="338.3" y="386.300" font-family="Liberation Sans, sans-serif" font-size="10.670" fill="#b6b6b6" text-anchor="middle">0</text><line x1="393.5" y1="369.5" x2="393.5" y2="364.5" stroke="#c6c6c6"/><line x1="393.5" y1="173.5" x2="393.5" y2="178.5" stroke="#c6c6c6"/><text x="392.3" y="386.300" font-family="Liberation Sans, sans-serif" font-size="10.670" fill="#b6b6b6" text-anchor="middle">0.05</text><line x1="447.5" y1="369.5" x2="447.5" y2="364.5" stroke="#c6c6c6"/><line x1="447.5" y1="173.5" x2="447.5" y2="178.5" stroke="#c6c6c6"/><text x="446.3" y="386.300" font-family="Liberation Sans, sans-serif" font-size="10.670" fill="#b6b6b6" text-anchor="middle">0.1</text><line x1="501.5" y1="369.5" x2="501.5" y2="364.5" stroke="#c6c6c6"/><line x1="501.5" y1="173.5" x2="501.5" y2="178.5" stroke="#c6c6c6"/><text x="500.3" y="386.300" font-family="Liberation Sans, sans-serif" font-size="10.670" fill="#b6b6b6" text-anchor="middle">0.15</text><line x1="555.5" y1="369.5" x2="555.5" y2="364.5" stroke="#c6c6c6"/><line x1="555.5" y1="173.5" x2="555.5" y2="178.5" stroke="#c6c6c6"/><text x="554.3" y="386.300" font-family="Liberation Sans, sans-serif" font-size="10.670" fill="#b6b6b6" text-anchor="middle">0.2</text><line x1="609.5" y1="369.5" x2="609.5" y2="364.5" stroke="#c6c6c6"/><line x1="609.5" y1="173.5" x2="609.5" y2="178.5" stroke="#c6c6c6"/><text x="608.3" y="386.300" font-family="Liberation Sans, sans-serif" font-size="10.670" fill="#b6b6b6" text-anchor="middle">0.25</text><line x1="663.5" y1="369.5" x2="663.5" y2="364.5" stroke="#c6c6c6"/><line x1="663.5" y1="173.5" x2="663.5" y2="178.5" stroke="#c6c6c6"/><text x="662.3" y="386.300" font-family="Liberation Sans, sans-serif" font-size="10.670" fill="#b6b6b6" text-anchor="middle">0.3</text><line x1="717.5" y1="369.5" x2="717.5" y2="364.5" stroke="#c6c6c6"/><line x1="717.5" y1="173.5" x2="717.5" y2="178.5" stroke="#c6c6c6"/><text x="716.3" y="386.300" font-family="Liberation Sans, sans-serif" font-size="10.670" fill="#b6b6b6" text-anchor="middle">0.35</text><line x1="771.5" y1="369.5" x2="771.5" y2="364.5" stroke="#c6c6c6"/><line x1="771.5" y1="173.5" x2="771.5" y2="178.5" stroke="#c6c6c6"/><text x="770.3" y="386.300" font-family="Liberation Sans, sans-serif" font-size="10.670" fill="#b6b6b6" text-anchor="middle">0.4</text><line x1="825.5" y1="369.5" x2="825.5" y2="364.5" stroke="#c6c6c6"/><line x1="825.5" y1="173.5" x2="825.5" y2="178.5" stroke="#c6c6c6"/><text x="824.3" y="386.300" font-family="Liberation Sans, sans-serif" font-size="10.670" fill="#b6b6b6" text-anchor="middle">0.45</text><line x1="339.5" y1="189.5" x2="344.5" y2="189.5" stroke="#c6c6c6"/><line x1="878.5" y1="189.5" x2="873.5" y2="189.5" stroke="#c6c6c6"/><text x="333" y="194.5" font-family="Liberation Sans, sans-serif" font-size="10.670" fill="#b6b6b6" text-anchor="end">1</text><line x1="339.5" y1="229.5" x2="344.5" y2="229.5" stroke="#c6c6c6"/><line x1="878.5" y1="229.5" x2="873.5" y2="229.5" stroke="#c6c6c6"/><text x="333" y="234.5" font-family="Liberation Sans, sans-serif" font-size="10.670" fill="#b6b6b6" text-anchor="end">0.5</text><line x1="339.5" y1="269.5" x2="344.5" y2="269.5" stroke="#c6c6c6"/><line x1="878.5" y1="269.5" x2="873.5" y2="269.5" stroke="#c6c6c6"/><text x="333" y="274.5" font-family="Liberation Sans, sans-serif" font-size="10.670" fill="#b6b6b6" text-anchor="end">0</text><line x1="339.5" y1="309.5" x2="344.5" y2="309.5" stroke="#c6c6c6"/><line x1="878.5" y1="309.5" x2="873.5" y2="309.5" stroke="#c6c6c6"/><text x="333" y="314.5" font-family="Liberation Sans, sans-serif" font-size="10.670" fill="#b6b6b6" text-anchor="end">-0.5</text><line x1="339.5" y1="349.5" x2="344.5" y2="349.5" stroke="#c6c6c6"/><line x1="878.5" y1="349.5" x2="873.5" y2="349.5" stroke="#c6c6c6"/><text x="333" y="354.5" font-family="Liberation Sans, sans-serif" font-size="10.670" fill="#b6b6b6" text-anchor="end">-1</text><rect x="339.5" y="173.5" width="539.0" height="196.0" fill="none" stroke="#c6c6c6"/><text x="554.2" y="168.8" font-family="Liberation Sans, sans-serif" font-size="11.5" letter-spacing="0.506" fill="#b8b8b8" font-weight="bold" >Impulse Response</text><text x="586.0" y="402.8" font-family="Liberation Sans, sans-serif" font-size="11.7" letter-spacing="0.434" fill="#b6b6b6"  >Time (s)</text><g transform="translate(307.100,272.600) rotate(-90)"><text x="-27.6" y="0" font-family="Liberation Sans, sans-serif" font-size="11.7" letter-spacing="0.384" fill="#b6b6b6"  >Amplitude</text></g></g>
<g shape-rendering="crispEdges"><line x1="361.5" y1="437.5" x2="361.5" y2="636.5" stroke="#202020" stroke-dasharray="2 2"/><line x1="383.5" y1="437.5" x2="383.5" y2="636.5" stroke="#202020" stroke-dasharray="2 2"/><line x1="399.5" y1="437.5" x2="399.5" y2="636.5" stroke="#202020" stroke-dasharray="2 2"/><line x1="412.5" y1="437.5" x2="412.5" y2="636.5" stroke="#202020" stroke-dasharray="2 2"/><line x1="422.5" y1="437.5" x2="422.5" y2="636.5" stroke="#202020" stroke-dasharray="2 2"/><line x1="430.5" y1="437.5" x2="430.5" y2="636.5" stroke="#202020" stroke-dasharray="2 2"/><line x1="438.5" y1="437.5" x2="438.5" y2="636.5" stroke="#202020" stroke-dasharray="2 2"/><line x1="444.5" y1="437.5" x2="444.5" y2="636.5" stroke="#202020" stroke-dasharray="2 2"/><line x1="450.5" y1="437.5" x2="450.5" y2="636.5" stroke="#2a2a2a"/><line x1="489.5" y1="437.5" x2="489.5" y2="636.5" stroke="#202020" stroke-dasharray="2 2"/><line x1="511.5" y1="437.5" x2="511.5" y2="636.5" stroke="#202020" stroke-dasharray="2 2"/><line x1="527.5" y1="437.5" x2="527.5" y2="636.5" stroke="#202020" stroke-dasharray="2 2"/><line x1="540.5" y1="437.5" x2="540.5" y2="636.5" stroke="#202020" stroke-dasharray="2 2"/><line x1="550.5" y1="437.5" x2="550.5" y2="636.5" stroke="#202020" stroke-dasharray="2 2"/><line x1="558.5" y1="437.5" x2="558.5" y2="636.5" stroke="#202020" stroke-dasharray="2 2"/><line x1="566.5" y1="437.5" x2="566.5" y2="636.5" stroke="#202020" stroke-dasharray="2 2"/><line x1="572.5" y1="437.5" x2="572.5" y2="636.5" stroke="#202020" stroke-dasharray="2 2"/><line x1="578.5" y1="437.5" x2="578.5" y2="636.5" stroke="#2a2a2a"/><line x1="617.5" y1="437.5" x2="617.5" y2="636.5" stroke="#202020" stroke-dasharray="2 2"/><line x1="639.5" y1="437.5" x2="639.5" y2="636.5" stroke="#202020" stroke-dasharray="2 2"/><line x1="655.5" y1="437.5" x2="655.5" y2="636.5" stroke="#202020" stroke-dasharray="2 2"/><line x1="668.5" y1="437.5" x2="668.5" y2="636.5" stroke="#202020" stroke-dasharray="2 2"/><line x1="678.5" y1="437.5" x2="678.5" y2="636.5" stroke="#202020" stroke-dasharray="2 2"/><line x1="687.5" y1="437.5" x2="687.5" y2="636.5" stroke="#202020" stroke-dasharray="2 2"/><line x1="694.5" y1="437.5" x2="694.5" y2="636.5" stroke="#202020" stroke-dasharray="2 2"/><line x1="701.5" y1="437.5" x2="701.5" y2="636.5" stroke="#202020" stroke-dasharray="2 2"/><line x1="706.5" y1="437.5" x2="706.5" y2="636.5" stroke="#2a2a2a"/><line x1="745.5" y1="437.5" x2="745.5" y2="636.5" stroke="#202020" stroke-dasharray="2 2"/><line x1="768.5" y1="437.5" x2="768.5" y2="636.5" stroke="#202020" stroke-dasharray="2 2"/><line x1="784.5" y1="437.5" x2="784.5" y2="636.5" stroke="#202020" stroke-dasharray="2 2"/><line x1="796.5" y1="437.5" x2="796.5" y2="636.5" stroke="#202020" stroke-dasharray="2 2"/><line x1="806.5" y1="437.5" x2="806.5" y2="636.5" stroke="#202020" stroke-dasharray="2 2"/><line x1="815.5" y1="437.5" x2="815.5" y2="636.5" stroke="#202020" stroke-dasharray="2 2"/><line x1="822.5" y1="437.5" x2="822.5" y2="636.5" stroke="#202020" stroke-dasharray="2 2"/><line x1="829.5" y1="437.5" x2="829.5" y2="636.5" stroke="#202020" stroke-dasharray="2 2"/><line x1="835.5" y1="437.5" x2="835.5" y2="636.5" stroke="#2a2a2a"/><line x1="873.5" y1="437.5" x2="873.5" y2="636.5" stroke="#202020" stroke-dasharray="2 2"/><line x1="339.5" y1="470.5" x2="878.5" y2="470.5" stroke="#262626"/><line x1="339.5" y1="503.5" x2="878.5" y2="503.5" stroke="#262626"/><line x1="339.5" y1="536.5" x2="878.5" y2="536.5" stroke="#262626"/><line x1="339.5" y1="569.5" x2="878.5" y2="569.5" stroke="#262626"/><line x1="339.5" y1="602.5" x2="878.5" y2="602.5" stroke="#262626"/></g>
<g clip-path="url(#cbot)">
<path d="M339.1 485.3L377.7 499.5L400.2 498.2L416.2 509.6L428.7 493.1L438.8 495.2L447.4 503.8L454.8 510.4L461.4 501.8L467.2 507.6L472.5 502.5L477.4 507.4L481.8 512.4L485.9 503.3L489.8 509.4L493.4 498.2L496.8 501.3L499.9 511.4L502.9 497.5L505.8 494.2L508.5 496.7L511.1 497.5L513.6 498.4L515.9 513.2L518.2 508.2L520.4 508.2L522.5 507.4L524.5 502.5L526.5 500.0L528.4 501.7L530.2 493.2L531.9 495.8L533.7 495.5L535.3 489.4L536.9 501.6L538.5 498.3L540.0 514.1L541.5 490.7L543.0 485.9L544.4 489.3L545.7 488.7L547.1 482.9L548.4 485.3L549.7 484.9L550.9 485.7L552.1 483.7L553.3 480.6L554.5 485.1L555.7 487.7L556.8 486.0L557.9 483.6L559.0 480.0L560.0 478.0L561.1 479.0L562.1 479.3L563.1 499.9L564.1 477.0L565.0 484.8L566.0 481.9L566.9 475.0L567.8 479.8L568.7 483.7L569.6 478.0L570.5 483.9L571.4 484.8L572.2 475.7L573.1 476.4L573.9 469.7L574.7 490.7L575.5 481.1L576.3 479.7L577.1 474.3L577.8 483.4L578.6 474.3L579.3 478.9L580.1 479.4L580.8 482.2L581.5 479.4L582.2 482.1L582.9 485.6L583.6 481.5L584.3 475.1L585.0 477.2L585.6 473.5L586.3 487.4L587.0 489.4L587.6 472.8L588.2 478.9L588.9 478.6L589.5 488.1L590.1 479.5L590.7 480.9L591.3 479.5L591.9 475.9L592.5 486.6L593.1 480.8L593.7 498.3L594.2 478.8L594.8 488.5L595.3 472.5L595.9 493.8L596.4 474.1L597.0 487.8L597.5 496.2L598.1 478.1L598.6 479.9L599.1 484.8L599.6 488.8L600.1 494.1L600.6 484.0L601.2 479.7L601.7 489.9L602.1 478.1L602.6 474.2L603.1 480.5L603.6 478.7L604.1 478.8L604.6 485.6L605.0 476.5L605.5 490.5L606.0 478.0L606.4 474.3L606.9 483.5L607.3 486.0L607.8 499.7L608.2 473.4L608.6 473.1L609.1 484.4L609.5 481.1L609.9 479.8L610.4 474.9L610.8 491.9L611.2 478.0L611.6 507.2L612.0 477.2L612.5 474.0L612.9 474.5L613.3 477.4L613.7 484.4L614.1 483.2L614.5 491.3L614.9 473.9L615.2 474.7L615.6 485.6L616.0 490.7L616.4 475.5L616.8 481.4L617.2 483.6L617.5 480.8L617.9 476.4L618.3 479.6L618.6 478.0L619.0 481.3L619.4 479.8L619.7 483.5L620.1 477.1L620.4 480.5L620.8 483.1L621.1 479.5L621.5 482.7L621.8 478.7L622.2 476.2L622.5 476.8L622.9 494.6L623.2 482.6L623.5 480.3L623.9 486.7L624.2 475.5L624.5 482.4L624.9 483.9L625.2 495.2L625.5 493.9L625.8 479.3L626.2 472.8L626.5 484.1L626.8 495.6L627.1 474.8L627.4 480.1L627.7 475.8L628.1 484.1L628.4 476.6L628.7 477.8L629.0 487.6L629.3 482.7L629.6 480.6L629.9 485.5L630.2 475.4L630.5 483.0L630.8 475.4L631.1 482.2L631.4 478.0L631.6 477.9L631.9 500.7L632.2 482.9L632.5 477.0L632.8 482.4L633.1 472.2L633.4 474.5L633.6 479.9L633.9 479.7L634.2 478.4L634.5 485.3L634.7 473.5L635.0 476.8L635.3 479.9L635.6 486.6L635.8 480.3L636.1 486.3L636.4 476.8L636.6 486.6L636.9 476.7L637.2 471.6L637.4 488.5L637.7 483.2L637.9 474.2L638.2 479.3L638.5 486.2L638.7 481.1L639.0 479.4L639.2 477.4L639.5 484.7L639.7 482.9L640.0 481.5L640.2 479.3L640.5 482.5L640.7 488.2L641.0 485.9L641.2 475.5L641.4 483.8L641.7 480.6L641.9 481.0L642.2 478.8L642.4 474.2L642.6 480.7L642.9 477.1L643.1 478.4L643.4 479.0L643.6 489.5L643.8 482.6L644.1 476.6L644.3 482.5L644.5 482.6L644.7 482.2L644.7 489.6L645.0 489.6L645.2 486.6L645.4 480.0L645.7 487.0L645.9 488.5L646.1 476.8L646.3 477.1L646.6 478.5L646.8 488.2L646.8 476.4L647.0 476.4L647.2 477.4L647.4 489.5L647.6 486.1L647.9 493.1L648.1 480.3L648.3 475.4L648.5 474.7L648.7 474.7L648.7 490.0L648.9 478.3L649.2 480.6L649.4 479.2L649.6 477.4L649.8 475.7L649.8 480.9L650.0 480.9L650.2 483.0L650.4 478.2L650.6 473.7L650.8 492.2L651.0 486.7L651.2 486.7L651.2 478.4L651.4 482.7L651.6 484.1L651.8 477.1L652.0 478.8L652.2 478.8L652.2 481.7L652.4 481.7L652.6 486.9L652.8 475.6L653.0 485.1L653.2 485.1L653.2 489.3L653.4 485.4L653.6 481.7L653.8 472.6L654.0 481.4L654.2 481.4L654.2 472.7L654.4 472.7L654.6 481.9L654.8 481.9L654.8 475.1L655.0 478.9L655.2 477.9L655.4 486.9L655.5 479.3L655.7 479.3L655.7 486.4L655.9 486.4L656.1 478.0L656.3 478.0L656.3 482.8L656.5 480.9L656.7 476.3L656.8 512.8L657.0 480.4L657.2 480.4L657.2 494.8L657.4 492.5L657.6 481.4L657.8 481.4L657.8 503.3L657.9 503.3L658.1 479.4L658.3 481.4L658.3 476.3L658.5 476.3L658.7 477.1L658.8 481.1L659.0 497.8L659.2 497.8L659.2 479.3L659.4 479.3L659.5 478.7L659.7 477.3L659.7 478.9L659.9 478.9L660.1 479.9L660.2 479.9L660.2 484.1L660.4 484.1L660.6 479.0L660.8 477.0L660.8 482.8L660.9 482.8L661.1 484.8L661.3 484.8L661.3 477.9L661.4 477.9L661.6 480.0L661.8 471.6L661.8 480.3L661.9 480.3L662.1 480.4L662.3 480.4L662.3 483.0L662.4 483.0L662.6 480.1L662.8 480.1L662.8 474.8L662.9 474.8L663.1 475.1L663.3 475.1L663.3 485.2L663.4 485.2L663.6 478.1L663.8 478.1L663.8 486.7L663.9 481.7L664.1 477.4L664.3 481.2L664.3 472.7L664.4 472.7L664.6 481.1L664.7 483.0L664.7 479.1L664.9 479.1L665.1 476.9L665.2 476.9L665.2 489.7L665.4 483.5L665.5 488.4L665.8 497.8L665.8 482.6L666.0 482.6L666.2 476.2L666.3 486.4L666.3 476.1L666.5 476.1L666.6 486.8L666.8 483.0L666.8 491.3L666.9 491.3L667.1 478.8L667.2 477.7L667.2 479.8L667.4 479.8L667.5 476.6L667.8 484.8L667.8 473.9L668.0 479.1L668.1 487.4L668.3 487.4L668.3 481.7L668.4 481.9L668.6 489.8L668.7 489.8L668.7 474.4L668.9 474.4L669.0 479.0L669.3 479.0L669.3 471.7L669.5 477.4L669.6 486.4L669.8 486.4L669.8 477.0L669.9 485.9L670.1 475.6L670.3 475.6L670.3 486.9L670.5 486.9L670.6 497.3L670.8 497.3L670.8 475.5L670.9 475.5L671.1 476.0L671.3 476.0L671.3 483.4L671.5 483.4L671.6 478.1L671.8 478.1L671.8 483.5L671.9 480.1L672.1 478.0L672.3 478.0L672.3 483.2L672.5 483.2L672.6 477.8L672.8 476.2L672.8 493.4L672.9 493.4L673.0 471.6L673.2 471.6L673.2 487.7L673.4 487.7L673.6 486.3L673.8 475.6L673.8 499.5L674.0 499.5L674.1 484.5L674.3 482.4L674.3 487.5L674.4 487.5L674.5 473.1L674.7 473.1L674.7 494.0L674.9 494.0L675.1 481.0L675.3 480.1L675.3 490.8L675.5 490.8L675.6 476.3L675.8 482.0L675.8 475.9L676.0 477.6L676.1 484.3L676.2 484.3L676.2 479.1L676.4 483.4L676.5 479.7L676.7 476.5L676.7 505.2L676.9 505.2L677.0 479.8L677.2 477.4L677.2 485.0L677.4 485.0L677.5 480.5L677.7 480.5L677.7 478.4L677.9 478.5L678.0 481.8L678.2 484.3L678.2 480.9L678.4 480.9L678.5 479.8L678.7 473.9L678.7 486.3L678.9 486.3L679.0 474.5L679.2 474.5L679.2 484.2L679.4 479.4L679.5 475.1L679.7 475.1L679.7 481.4L679.9 475.6L680.0 474.4L680.3 474.4L680.3 507.5L680.5 507.5L680.6 482.9L680.8 487.3L680.8 478.5L681.0 478.5L681.1 479.6L681.3 476.8L681.3 484.7L681.5 484.7L681.6 477.0L681.8 489.4L681.8 475.7L681.9 475.7L682.0 479.4L682.2 479.4L682.2 489.9L682.4 481.0L682.5 472.6L682.7 472.6L682.7 487.4L683.0 484.3L683.1 489.7L683.3 489.7L683.3 475.7L683.4 475.7L683.5 476.9L683.7 472.9L683.7 481.1L683.9 481.1L684.0 482.6L684.2 495.2L684.2 476.2L684.5 476.2L684.6 486.6L684.7 486.6L684.7 482.7L684.9 483.1L685.0 492.4L685.2 492.4L685.2 477.8L685.5 483.9L685.6 482.6L685.8 484.2L685.8 475.5L686.0 481.2L686.1 478.2L686.3 478.2L686.3 491.4L686.4 491.4L686.5 478.8L686.8 478.8L686.8 490.4L687.0 490.4L687.1 475.2L687.2 471.0L687.2 489.9L687.4 489.9L687.5 482.8L687.7 482.8L687.7 479.6L687.9 479.9L688.0 473.6L688.2 473.6L688.2 508.6L688.5 508.6L688.6 478.0L688.8 502.1L688.8 477.2L689.0 479.2L689.1 483.2L689.3 484.3L689.3 473.3L689.5 473.3L689.6 478.9L689.8 486.0L689.8 474.5L690.0 474.5L690.1 482.0L690.3 482.0L690.3 474.5L690.4 474.8L690.5 485.5L690.7 474.9L690.7 497.2L690.9 484.3L691.0 484.1L691.2 484.7L691.2 476.7L691.4 483.0L691.5 473.5L691.7 473.5L691.7 488.4L692.0 479.5L692.1 476.1L692.3 480.1L692.3 474.7L692.5 474.7L692.6 477.5L692.8 486.8L692.8 474.8L693.0 474.8L693.1 483.9L693.3 483.9L693.3 471.9L693.4 471.9L693.5 476.6L693.7 476.6L693.7 490.4L693.9 485.0L694.0 474.5L694.2 474.5L694.2 481.8L694.5 477.9L694.6 479.8L694.8 479.8L694.8 484.6L694.9 480.2L695.0 476.7L695.2 510.2L695.2 475.6L695.4 475.6L695.5 477.4L695.7 477.4L695.7 487.1L696.0 480.3L696.1 477.2L696.2 489.5L696.2 474.1L696.4 474.1L696.5 495.0L696.7 495.0L696.7 476.6L697.0 479.0L697.0 480.2L697.3 491.5L697.3 472.5L697.5 472.5L697.6 474.0L697.8 486.5L697.8 469.9L697.9 471.5L698.0 477.7L698.2 483.7L698.2 476.7L698.5 483.6L698.5 479.5L698.8 486.1L698.8 477.2L699.0 481.0L699.1 489.7L699.3 478.2L699.3 496.4L699.5 478.6L699.6 480.4L699.8 483.9L699.8 480.1L699.9 480.2L700.0 476.2L700.2 482.1L700.2 473.1L700.4 473.1L700.5 490.1L700.7 490.1L700.7 473.4L700.9 473.4L701.0 473.5L701.2 473.5L701.2 483.5L701.4 473.5L701.5 485.2L701.7 488.6L701.7 472.0L701.9 481.3L702.0 475.5L702.3 475.5L702.3 483.3L702.5 477.2L702.6 477.3L702.8 475.1L702.8 479.2L703.0 477.3L703.1 488.1L703.3 488.1L703.3 476.3L703.5 479.4L703.5 479.1L703.7 479.1L703.7 486.9L703.9 480.4L704.0 483.1L704.3 488.2L704.3 477.2L704.5 478.5L704.6 481.1L704.8 488.6L704.8 477.1L705.0 477.1L705.0 481.8L705.3 491.0L705.3 473.3L705.5 477.1L705.6 481.0L705.8 484.9L705.8 474.3L706.0 474.3L706.0 487.0L706.3 487.1L706.3 472.4L706.5 472.4L706.6 476.1L706.7 475.2L706.7 483.5L706.9 483.5L707.0 480.5L707.2 483.0L707.2 474.1L707.5 474.1L707.5 480.1L707.8 497.0L707.8 475.5L708.0 484.3L708.0 477.1L708.3 496.8L708.3 472.5L708.5 479.7L708.6 481.7L708.8 476.4L708.8 497.1L709.0 497.1L709.1 484.7L709.3 472.6L709.3 500.7L709.5 500.7L709.6 484.2L709.8 484.2L709.8 475.9L710.0 482.7L710.1 485.9L710.3 474.8L710.3 493.6L710.5 493.6L710.6 479.3L710.8 488.3L710.8 475.5L711.0 483.1L711.0 486.8L711.3 486.8L711.3 473.3L711.5 482.9L711.5 480.3L711.7 471.1L711.7 487.6L711.9 487.6L712.0 477.7L712.3 477.0L712.3 486.7L712.5 484.1L712.6 476.7L712.8 476.7L712.8 486.5L713.0 477.2L713.0 477.2L713.3 497.3L713.3 476.8L713.5 495.3L713.6 480.1L713.8 493.3L713.8 476.4L714.0 476.4L714.0 474.4L714.3 474.4L714.3 491.6L714.5 489.4L714.6 478.0L714.7 482.7L714.7 471.6L714.9 478.8L715.0 479.1L715.2 492.8L715.2 476.6L715.5 480.8L715.5 482.9L715.7 482.9L715.7 472.8L716.0 473.1L716.0 477.3L716.3 495.6L716.3 474.3L716.5 475.7L716.5 471.7L716.8 471.7L716.8 487.2L717.0 479.7L717.0 475.6L717.3 487.1L717.3 474.0L717.5 474.0L717.5 477.7L717.8 474.7L717.8 489.7L718.0 489.7L718.0 490.0L718.2 476.0L718.2 492.3L718.5 476.4L718.5 484.9L718.7 484.9L718.7 474.4L718.9 480.3L719.0 484.0L719.2 473.4L719.2 495.7L719.5 478.4L719.5 484.0L719.8 490.3L719.8 474.9L720.0 474.9L720.0 480.1L720.3 482.8L720.3 475.1L720.5 478.2L720.6 478.0L720.8 478.0L720.8 488.8L721.0 488.8L721.0 479.6L721.3 483.3L721.3 474.7L721.5 480.4L721.5 509.3L721.7 509.3L721.7 471.1L721.9 484.1L722.0 485.4L722.2 485.4L722.2 474.7L722.5 478.2L722.5 483.1L722.7 474.6L722.7 493.1L723.0 486.4L723.0 485.5L723.2 491.7L723.2 470.5L723.5 479.1L723.5 473.6L723.7 506.9L723.7 472.5L724.0 472.5L724.0 477.8L724.2 471.0L724.2 493.4L724.5 493.4L724.5 479.0L724.7 478.5L724.7 494.4L724.9 494.4L725.0 478.5L725.2 488.1L725.2 475.5L725.5 479.1L725.5 480.5L725.8 501.4L725.8 473.2L726.0 473.2L726.0 481.7L726.3 493.9L726.3 474.6L726.5 492.6L726.6 478.2L726.8 469.9L726.8 491.1L727.0 471.4L727.0 478.3L727.3 474.5L727.3 494.5L727.5 478.4L727.5 478.3L727.7 478.3L727.7 496.7L728.0 483.8L728.0 482.1L728.2 471.3L728.2 521.2L728.5 521.2L728.5 485.0L728.7 474.2L728.7 505.7L729.0 483.3L729.0 474.9L729.2 494.3L729.2 474.2L729.5 491.0L729.5 490.0L729.7 473.1L729.7 492.7L730.0 476.8L730.0 481.7L730.2 488.3L730.2 474.8L730.5 482.2L730.5 482.2L730.7 484.3L730.7 472.0L731.0 476.3L731.0 477.4L731.2 476.3L731.2 481.0L731.5 476.9L731.5 478.8L731.7 474.5L731.7 496.4L732.0 496.4L732.0 482.2L732.2 490.6L732.2 469.9L732.5 473.6L732.5 499.1L732.7 499.1L732.7 473.0L733.0 474.8L733.0 483.7L733.2 488.7L733.2 471.3L733.5 487.2L733.5 475.2L733.7 473.1L733.7 496.0L734.0 478.0L734.0 479.5L734.3 470.8L734.3 486.9L734.5 486.9L734.5 484.9L734.8 474.5L734.8 493.0L735.0 476.4L735.0 485.0L735.3 475.5L735.3 489.1L735.5 488.0L735.5 477.5L735.7 477.5L735.7 484.1L736.0 483.3L736.0 480.6L736.2 498.5L736.2 473.5L736.5 473.5L736.5 483.9L736.7 474.4L736.7 487.8L737.0 481.5L737.0 477.0L737.2 503.8L737.2 474.4L737.5 486.0L737.5 479.8L737.7 479.8L737.7 472.4L738.0 476.7L738.0 477.9L738.3 486.3L738.3 474.0L738.5 479.3L738.5 476.3L738.8 490.3L738.8 472.3L739.0 474.7L739.0 473.2L739.2 473.2L739.2 490.1L739.5 490.1L739.5 484.1L739.8 486.6L739.8 475.2L740.0 485.4L740.0 476.3L740.3 491.0L740.3 474.3L740.5 479.4L740.5 484.6L740.8 484.6L740.8 473.6L741.0 474.6L741.0 480.4L741.2 471.6L741.2 481.2L741.5 475.9L741.5 478.9L741.7 472.0L741.7 495.3L742.0 475.0L742.0 482.2L742.2 468.7L742.2 487.4L742.5 483.0L742.5 477.8L742.7 484.4L742.7 475.3L743.0 479.8L743.0 496.9L743.3 496.9L743.3 471.9L743.5 476.5L743.5 479.3L743.8 471.5L743.8 485.3L744.0 479.0L744.0 492.8L744.3 494.5L744.3 474.9L744.5 480.4L744.5 475.4L744.8 490.6L744.8 472.7L745.0 474.3L745.0 474.7L745.2 483.2L745.2 469.9L745.5 479.6L745.5 475.8L745.7 490.2L745.7 470.8L746.0 470.8L746.0 475.0L746.2 473.0L746.2 487.6L746.5 477.7L746.5 487.5L746.7 487.5L746.7 472.6L747.0 472.6L747.0 481.4L747.3 488.7L747.3 473.2L747.5 479.4L747.5 478.3L747.8 484.3L747.8 471.1L748.0 481.9L748.0 476.5L748.3 491.3L748.3 474.1L748.5 477.7L748.5 475.3L748.8 471.5L748.8 486.9L749.0 475.4L749.0 479.8L749.3 489.6L749.3 472.5L749.5 481.9L749.5 475.3L749.8 474.0L749.8 500.5L750.0 480.1L750.0 480.5L750.3 483.8L750.3 470.7L750.5 479.2L750.5 482.1L750.8 485.8L750.8 471.8L751.0 483.0L751.0 472.2L751.3 472.2L751.3 484.9L751.5 482.4L751.5 473.6L751.7 473.6L751.7 486.8L752.0 480.1L752.0 485.1L752.2 503.6L752.2 473.5L752.5 478.7L752.5 475.2L752.8 494.5L752.8 474.5L753.0 475.2L753.0 482.1L753.3 472.1L753.3 490.3L753.5 480.0L753.5 477.8L753.8 493.3L753.8 470.9L754.0 476.1L754.0 478.0L754.3 474.0L754.3 487.6L754.5 477.0L754.5 482.7L754.7 472.6L754.7 492.0L755.0 477.8L755.0 476.1L755.3 472.1L755.3 483.7L755.5 475.0L755.5 480.3L755.8 500.8L755.8 472.2L756.0 476.0L756.0 477.6L756.2 472.3L756.2 482.9L756.5 482.9L756.5 478.3L756.8 471.1L756.8 495.0L757.0 486.6L757.0 486.6L757.3 472.8L757.3 492.9L757.5 476.8L757.5 474.2L757.8 492.8L757.8 472.1L758.0 482.9L758.0 482.6L758.2 472.7L758.2 495.1L758.5 474.6L758.5 474.8L758.7 487.2L758.7 474.3L759.0 474.3L759.0 483.3L759.2 483.3L759.2 471.8L759.5 473.5L759.5 480.6L759.7 487.9L759.7 471.4L760.0 474.9L760.0 469.8L760.3 469.8L760.3 489.9L760.5 478.8L760.5 485.5L760.8 493.2L760.8 471.4L761.0 471.4L761.0 489.6L761.2 474.7L761.2 506.5L761.5 483.1L761.5 482.2L761.7 472.1L761.7 490.2L762.0 478.4L762.0 478.5L762.2 472.1L762.2 491.0L762.5 491.0L762.5 481.1L762.8 471.2L762.8 484.2L763.0 477.0L763.0 479.0L763.3 486.0L763.3 472.1L763.5 482.6L763.5 485.3L763.7 485.3L763.7 469.7L764.0 479.4L764.0 475.6L764.2 469.2L764.2 489.1L764.5 475.1L764.5 470.4L764.7 470.4L764.7 492.2L765.0 479.1L765.0 479.5L765.2 489.2L765.2 472.2L765.5 472.9L765.5 484.6L765.7 488.8L765.7 470.7L766.0 480.6L766.0 473.9L766.3 473.8L766.3 488.6L766.5 482.5L766.5 475.6L766.8 495.4L766.8 473.4L767.0 478.9L767.0 475.9L767.2 502.5L767.2 471.4L767.5 479.3L767.5 478.8L767.8 474.3L767.8 485.4L768.0 474.8L768.0 476.6L768.3 500.7L768.3 470.9L768.5 476.4L768.5 478.5L768.7 473.2L768.7 490.5L769.0 478.2L769.0 477.6L769.3 468.9L769.3 490.2L769.5 473.5L769.5 488.1L769.7 474.0L769.7 494.8L770.0 477.9L770.0 473.2L770.2 472.9L770.2 490.3L770.5 475.1L770.5 478.4L770.7 473.9L770.7 493.9L771.0 479.3L771.0 481.8L771.2 511.3L771.2 471.7L771.5 482.4L771.5 478.6L771.7 489.8L771.7 471.1L772.0 472.7L772.0 478.4L772.2 471.4L772.2 511.0L772.5 490.3L772.5 473.5L772.7 483.5L772.7 470.9L773.0 470.9L773.0 476.4L773.2 473.5L773.2 498.1L773.5 476.6L773.5 484.9L773.7 485.1L773.7 472.3L774.0 476.6L774.0 477.0L774.2 491.7L774.2 472.0L774.5 479.2L774.5 470.4L774.7 470.4L774.7 488.7L775.0 474.0L775.0 489.1L775.2 489.1L775.2 471.8L775.5 479.3L775.5 472.8L775.7 489.2L775.7 467.0L776.0 476.8L776.0 476.3L776.2 469.9L776.2 484.1L776.5 474.3L776.5 476.9L776.7 468.7L776.7 482.9L777.0 476.8L777.0 479.3L777.2 484.0L777.2 472.2L777.5 480.1L777.5 475.3L777.7 492.5L777.7 466.4L778.0 478.3L778.0 471.7L778.2 468.6L778.2 489.1L778.5 474.6L778.5 471.4L778.8 489.6L778.8 470.2L779.0 471.5L779.0 484.6L779.3 484.6L779.3 470.5L779.5 477.0L779.5 476.4L779.8 468.8L779.8 483.0L780.0 480.1L780.0 473.0L780.3 467.9L780.3 489.7L780.5 489.7L780.5 477.8L780.8 466.4L780.8 496.0L781.0 496.0L781.0 470.6L781.3 465.8L781.3 496.8L781.5 470.5L781.5 473.0L781.7 504.1L781.7 466.8L782.0 470.9L782.0 475.7L782.3 465.4L782.3 505.8L782.5 468.2L782.5 468.1L782.8 480.6L782.8 465.1L783.0 467.0L783.0 474.6L783.3 464.5L783.3 491.6L783.5 476.8L783.5 474.3L783.8 483.5L783.8 464.2L784.0 465.5L784.0 469.0L784.3 465.0L784.3 493.3L784.5 469.4L784.5 466.2L784.7 482.1L784.7 461.8L785.0 467.7L785.0 466.2L785.2 463.1L785.2 481.0L785.5 470.4L785.5 469.4L785.8 480.1L785.8 460.9L786.0 477.6L786.0 472.0L786.2 465.5L786.2 483.6L786.5 467.3L786.5 482.7L786.7 484.1L786.7 464.6L787.0 467.4L787.0 469.4L787.2 467.2L787.2 483.4L787.5 483.4L787.5 471.0L787.7 489.3L787.7 464.7L788.0 477.9L788.0 471.2L788.3 467.3L788.3 484.4L788.5 474.1L788.5 478.7L788.8 489.4L788.8 467.1L789.0 482.2L789.0 470.3L789.3 481.2L789.3 467.6L789.5 474.9L789.5 469.3L789.8 486.5L789.8 468.2L790.0 478.7L790.0 476.6L790.3 469.0L790.3 498.1L790.5 474.5L790.5 471.6L790.8 468.4L790.8 482.7L791.0 471.9L791.0 473.5L791.3 484.7L791.3 467.7L791.5 477.2L791.5 478.6L791.8 471.7L791.8 488.8L792.0 474.7L792.0 485.4L792.2 485.4L792.2 470.1L792.5 472.8L792.5 475.4L792.7 509.0L792.7 470.8L793.0 478.5L793.0 479.2L793.3 494.7L793.3 469.7L793.5 475.6L793.5 473.6L793.7 470.5L793.7 488.6L794.0 488.6L794.0 481.4L794.2 471.4L794.2 486.8L794.5 480.1L794.5 485.9L794.7 470.6L794.7 488.1L795.0 472.4L795.0 480.8L795.2 498.5L795.2 471.1L795.5 478.5L795.5 478.3L795.7 472.1L795.7 496.2L796.0 476.6L796.0 478.7L796.2 515.7L796.2 472.1L796.5 485.7L796.5 486.4L796.8 489.6L796.8 470.6L797.0 480.3L797.0 473.0L797.3 472.6L797.3 493.7L797.5 479.7L797.5 474.3L797.8 489.3L797.8 472.7L798.0 475.0L798.0 478.8L798.3 486.0L798.3 470.2L798.5 481.4L798.5 479.6L798.7 489.8L798.7 471.0L799.0 471.0L799.0 483.3L799.2 471.3L799.2 500.9L799.5 477.1L799.5 481.7L799.7 468.5L799.7 489.1L800.0 480.0L800.0 477.8L800.2 470.0L800.2 485.2L800.5 483.5L800.5 479.5L800.7 483.6L800.7 470.6L801.0 475.0L801.0 478.0L801.3 480.6L801.3 467.7L801.5 472.3L801.5 479.6L801.8 464.6L801.8 481.9L802.0 470.3L802.0 469.1L802.2 488.9L802.2 465.1L802.5 474.4L802.5 472.3L802.8 489.8L802.8 463.1L803.0 470.0L803.0 469.1L803.2 477.6L803.2 462.6L803.5 472.7L803.5 472.4L803.7 479.4L803.7 460.8L804.0 472.4L804.0 461.6L804.2 461.3L804.2 501.1L804.5 469.6L804.5 468.4L804.7 460.6L804.7 481.1L805.0 464.9L805.0 466.9L805.2 478.1L805.2 460.8L805.5 471.7L805.5 468.2L805.8 459.8L805.8 482.4L806.0 466.3L806.0 470.6L806.3 463.6L806.3 483.8L806.5 470.8L806.5 472.0L806.8 477.4L806.8 464.8L807.0 470.2L807.0 475.7L807.2 464.7L807.2 483.5L807.5 471.7L807.5 470.7L807.7 466.0L807.7 480.5L808.0 480.0L808.0 479.5L808.3 492.1L808.3 466.5L808.5 469.9L808.5 472.0L808.8 466.6L808.8 484.2L809.0 473.0L809.0 471.6L809.2 486.4L809.2 466.8L809.5 477.1L809.5 470.0L809.8 469.3L809.8 489.5L810.0 476.8L810.0 473.5L810.3 471.1L810.3 491.8L810.5 475.5L810.5 480.7L810.7 496.0L810.7 470.4L811.0 488.1L811.0 499.2L811.2 499.2L811.2 469.6L811.5 476.2L811.5 480.8L811.8 496.2L811.8 473.2L812.0 481.3L812.0 480.6L812.2 474.1L812.2 487.8L812.5 486.4L812.5 479.0L812.7 474.7L812.7 489.5L813.0 480.9L813.0 480.7L813.3 474.7L813.3 494.4L813.5 475.9L813.5 479.7L813.8 474.5L813.8 496.8L814.0 487.6L814.0 484.1L814.3 491.4L814.3 476.2L814.5 488.4L814.5 486.0L814.7 496.9L814.7 477.2L815.0 484.7L815.0 487.2L815.3 494.3L815.3 477.0L815.5 480.6L815.5 483.5L815.8 511.7L815.8 481.3L816.0 483.5L816.0 489.9L816.2 500.4L816.2 483.9L816.5 490.9L816.5 486.5L816.7 483.7L816.7 526.1L817.0 513.2L817.0 488.3L817.2 518.7L817.2 486.2L817.5 499.0L817.5 488.8L817.8 484.6L817.8 526.2L818.0 489.8L818.0 503.3L818.2 489.3L818.2 524.3L818.5 499.4L818.5 502.0L818.7 492.3L818.7 531.8L819.0 531.8L819.0 508.6L819.2 493.9L819.2 528.3L819.5 528.3L819.5 521.0L819.7 545.2L819.7 497.3L820.0 505.4L820.0 502.3L820.2 502.1L820.2 537.4L820.5 523.3L820.5 500.5L820.8 500.5L820.8 540.6L821.0 520.9L821.0 515.8L821.3 538.6L821.3 503.8L821.5 515.3L821.5 517.6L821.7 547.9L821.7 507.6L822.0 527.9L822.0 523.3L822.2 504.3L822.2 551.0L822.5 526.0L822.5 536.2L822.7 557.1L822.7 510.0L823.0 527.9L823.0 534.4L823.3 517.9L823.3 560.8L823.5 528.8L823.5 542.8L823.7 547.5L823.7 518.3L824.0 539.8L824.0 526.4L824.2 595.2L824.2 522.8L824.5 533.9L824.5 537.4L824.7 564.2L824.7 522.9L825.0 538.1L825.0 544.1L825.3 558.4L825.3 522.4L825.5 538.7L825.5 534.1L825.7 580.2L825.7 529.1L826.0 543.4L826.0 535.0L826.2 526.3L826.2 569.9L826.5 555.1L826.5 536.6L826.7 532.6L826.7 572.8L827.0 539.1L827.0 558.0L827.3 583.1L827.3 532.8L827.5 543.2L827.5 539.6L827.7 570.6L827.7 534.7L828.0 549.9L828.0 537.3L828.3 577.9L828.3 532.7L828.5 546.0L828.5 558.4L828.8 534.0L828.8 572.5L829.0 551.0L829.0 539.3L829.2 528.2L829.2 586.1L829.5 546.9L829.5 560.7L829.7 531.5L829.7 576.2L830.0 554.2L830.0 535.1L830.2 528.6L830.2 571.2L830.5 550.3L830.5 551.5L830.7 578.4L830.7 533.8L831.0 541.8L831.0 548.6L831.2 590.8L831.2 534.6L831.5 538.1L831.5 552.0L831.7 530.6L831.7 570.0L832.0 542.6L832.0 544.7L832.2 570.2L832.2 534.7L832.5 544.9L832.5 536.6L832.8 588.3L832.8 533.1L833.0 558.6L833.0 543.6L833.2 583.6L833.2 532.3L833.5 542.7L833.5 558.0L833.7 565.4L833.7 535.5L834.0 542.7L834.0 542.7L834.2 566.3L834.2 535.9L834.5 544.5L834.5 548.0L834.7 578.3L834.7 528.5L835.0 528.5L835.0 541.8L835.3 534.1L835.3 588.6L835.5 545.6L835.5 542.8L835.7 577.6L835.7 529.8L836.0 539.9L836.0 550.9L836.2 536.3L836.2 587.2L836.5 556.9L836.5 548.6L836.8 571.1L836.8 531.8L837.0 544.6L837.0 531.0L837.3 531.0L837.3 568.4L837.5 540.8L837.5 562.1L837.7 598.4L837.7 530.4L838.0 542.3L838.0 543.4L838.3 537.9L838.3 582.8L838.5 546.6L838.5 553.9L838.8 587.6L838.8 534.1L839.0 541.8L839.0 542.2L839.2 535.2L839.2 570.1L839.5 549.8L839.5 544.1L839.8 536.7L839.8 569.0L840.0 545.3L840.0 554.7L840.3 537.1L840.3 575.3L840.5 555.6L840.5 539.5L840.7 534.0L840.7 567.4L841.0 543.8L841.0 560.0L841.3 579.8L841.3 536.7L841.5 557.8L841.5 543.0L841.8 576.9L841.8 534.7L842.0 545.5L842.0 555.9L842.3 530.4L842.3 584.2L842.5 547.6L842.5 554.6L842.8 534.2L842.8 579.4L843.0 579.4L843.0 549.4L843.3 532.2L843.3 577.7L843.5 547.9L843.5 565.6L843.8 534.4L843.8 594.2L844.0 556.7L844.0 541.0L844.3 585.2L844.3 533.5L844.5 567.6L844.5 534.5L844.8 534.5L844.8 583.2L845.0 557.8L845.0 547.9L845.2 581.3L845.2 534.7L845.5 560.2L845.5 546.2L845.7 534.0L845.7 600.2L846.0 555.9L846.0 543.8L846.2 585.6L846.2 531.6L846.5 545.2L846.5 537.3L846.7 577.0L846.7 533.1L847.0 551.6L847.0 554.2L847.2 532.3L847.2 575.4L847.5 551.7L847.5 538.7L847.7 578.2L847.7 532.5L848.0 567.9L848.0 553.2L848.2 579.9L848.2 535.3L848.5 536.4L848.5 539.4L848.7 533.4L848.7 591.8L849.0 538.7L849.0 569.4L849.3 534.8L849.3 596.3L849.5 549.3L849.5 555.8L849.7 576.3L849.7 536.4L850.0 549.8L850.0 560.4L850.2 534.8L850.2 580.2L850.5 548.7L850.5 549.2L850.8 607.2L850.8 530.4L851.0 540.6L851.0 542.3L851.3 585.5L851.3 531.1L851.5 545.9L851.5 538.0L851.7 535.0L851.7 582.7L852.0 535.2L852.0 545.4L852.2 535.2L852.2 579.7L852.5 545.3L852.5 575.2L852.8 584.9L852.8 532.7L853.0 559.1L853.0 561.7L853.2 570.6L853.2 535.7L853.5 538.7L853.5 562.5L853.7 536.2L853.7 573.8L854.0 562.1L854.0 546.1L854.2 529.9L854.2 585.4L854.5 585.4L854.5 548.3L854.7 580.2L854.7 532.1L855.0 539.9L855.0 547.2L855.2 568.4L855.2 533.4L855.5 548.9L855.5 567.9L855.7 577.7L855.7 533.5L856.0 539.0L856.0 538.5L856.3 583.4L856.3 534.4L856.5 547.6L856.5 556.2L856.7 534.9L856.7 575.2L857.0 542.7L857.0 554.7L857.2 574.3L857.2 529.0L857.5 557.0L857.5 540.9L857.7 535.2L857.7 600.6L858.0 537.1L858.0 550.6L858.3 581.3L858.3 533.0L858.5 545.0L858.5 543.4L858.8 578.0L858.8 536.0L859.0 557.5L859.0 546.6L859.3 586.1L859.3 535.7L859.5 546.0L859.5 545.9L859.8 585.7L859.8 534.8L860.0 567.9L860.0 542.6L860.3 576.2L860.3 531.8L860.5 549.0L860.5 552.3L860.8 529.0L860.8 575.3L861.0 566.4L861.0 551.9L861.3 530.9L861.3 568.6L861.5 545.2L861.5 548.7L861.8 531.1L861.8 572.7L862.0 547.9L862.0 545.8L862.3 581.7L862.3 531.0L862.5 553.7L862.5 553.5L862.8 536.5L862.8 573.3L863.0 538.2L863.0 545.1L863.2 534.7L863.2 581.4L863.5 556.0L863.5 536.6L863.7 532.0L863.7 575.3L864.0 551.5L864.0 546.5L864.3 586.4L864.3 534.3L864.5 543.0L864.5 558.7L864.8 533.6L864.8 577.4L865.0 551.6L865.0 543.6L865.3 584.9L865.3 533.3L865.5 536.2L865.5 548.4L865.7 580.2L865.7 532.6L866.0 562.8L866.0 542.7L866.2 585.8L866.2 532.9L866.5 555.7L866.5 541.4L866.7 532.1L866.7 587.3L867.0 543.1L867.0 567.9L867.3 576.9L867.3 529.6L867.5 546.1L867.5 559.5L867.8 535.0L867.8 586.0L868.0 537.9L868.0 550.4L868.3 530.3L868.3 577.5L868.5 567.8L868.5 556.1L868.7 572.2L868.7 533.7L869.0 564.8L869.0 546.0L869.3 591.6L869.3 533.9L869.5 571.0L869.5 561.8L869.8 574.3L869.8 532.9L870.0 558.0L870.0 544.6L870.2 578.3L870.2 532.5L870.5 551.7L870.5 540.8L870.8 580.6L870.8 534.2L871.0 549.4L871.0 545.0L871.3 576.6L871.3 530.3L871.5 538.8L871.5 546.4L871.8 574.9L871.8 531.6L872.0 547.6L872.0 552.6L872.3 532.4L872.3 580.5L872.5 575.2L872.5 541.1L872.7 575.6L872.7 534.1L873.0 544.2L873.0 542.3L873.2 573.1L873.2 531.2L873.5 538.5L873.5 540.0L873.7 534.1L873.7 579.4L874.0 554.6L874.0 547.4L874.3 593.9L874.3 528.9L874.5 542.8L874.5 559.8L874.7 532.3L874.7 591.7L875.0 536.2L875.0 547.5L875.2 528.8L875.2 572.9L875.5 560.7L875.5 550.4L875.7 582.1L875.7 534.0L876.0 551.4L876.0 543.0L876.2 532.5L876.2 584.2L876.5 542.6L876.5 536.4L876.7 572.9L876.7 528.8L877.0 545.3L877.0 540.7L877.3 585.3L877.3 534.5L877.5 547.0L877.5 553.9L877.7 534.1L877.7 583.2L878.0 540.0L878.0 537.0L878.2 576.6L878.2 530.0L878.5 555.1L878.5 543.3L878.8 529.7L878.8 594.4L879.0 543.0L879.0 543.6L879.0 575.8L879.0 539.1L879.1 554.6" fill="none" stroke="#66d419" stroke-width="1" stroke-linejoin="round"/>
<path d="M339.1 481.9L377.7 491.9L400.2 502.8L416.2 510.4L428.7 497.5L438.8 506.9L447.4 498.0L454.8 507.9L461.4 501.5L467.2 495.7L472.5 494.1L477.4 495.7L481.8 503.3L485.9 510.2L489.8 507.6L493.4 517.5L496.8 516.0L499.9 499.2L502.9 494.2L505.8 493.1L508.5 495.1L511.1 496.7L513.6 496.7L515.9 527.4L518.2 516.0L520.4 515.3L522.5 505.8L524.5 496.4L526.5 528.4L528.4 495.4L530.2 505.2L531.9 493.7L533.7 502.6L535.3 493.2L536.9 521.6L538.5 499.5L540.0 498.4L541.5 483.7L543.0 480.5L544.4 489.7L545.7 483.1L547.1 481.6L548.4 483.7L549.7 489.7L550.9 499.3L552.1 504.2L553.3 481.9L554.5 474.9L555.7 481.7L556.8 485.8L557.9 473.4L559.0 479.4L560.0 479.1L561.1 472.3L562.1 476.5L563.1 481.3L564.1 480.2L565.0 476.6L566.0 480.6L566.9 473.1L567.8 482.3L568.7 498.4L569.6 479.5L570.5 473.3L571.4 483.1L572.2 483.4L573.1 488.1L573.9 487.5L574.7 482.6L575.5 489.2L576.3 473.3L577.1 482.3L577.8 480.2L578.6 474.6L579.3 474.4L580.1 482.0L580.8 478.3L581.5 477.1L582.2 481.7L582.9 493.8L583.6 477.7L584.3 476.6L585.0 478.0L585.6 480.2L586.3 481.7L587.0 481.9L587.6 481.4L588.2 475.0L588.9 474.4L589.5 476.8L590.1 478.1L590.7 477.2L591.3 480.5L591.9 480.9L592.5 482.6L593.1 480.9L593.7 471.5L594.2 476.6L594.8 480.7L595.3 481.8L595.9 478.5L596.4 478.6L597.0 478.6L597.5 489.5L598.1 477.5L598.6 483.8L599.1 473.9L599.6 479.7L600.1 471.8L600.6 482.9L601.2 479.8L601.7 478.8L602.1 475.1L602.6 477.0L603.1 485.6L603.6 479.0L604.1 479.2L604.6 479.4L605.0 483.7L605.5 473.1L606.0 482.4L606.4 485.0L606.9 477.1L607.3 478.5L607.8 480.4L608.2 476.2L608.6 477.9L609.1 477.9L609.5 475.8L609.9 478.9L610.4 483.7L610.8 482.0L611.2 482.3L611.6 479.2L612.0 484.0L612.5 489.4L612.9 479.5L613.3 488.9L613.7 494.8L614.1 477.1L614.5 484.4L614.9 477.4L615.2 483.0L615.6 482.7L616.0 487.8L616.4 480.7L616.8 481.6L617.2 485.1L617.5 481.0L617.9 490.4L618.3 478.1L618.6 493.7L619.0 480.7L619.4 476.9L619.7 475.5L620.1 473.3L620.4 482.6L620.8 476.8L621.1 475.1L621.5 475.7L621.8 483.5L622.2 478.2L622.5 472.9L622.9 490.2L623.2 477.3L623.5 475.4L623.9 484.2L624.2 476.2L624.5 486.7L624.9 479.3L625.2 480.3L625.5 478.7L625.8 480.6L626.2 476.0L626.5 485.8L626.8 480.8L627.1 474.8L627.4 476.3L627.7 488.7L628.1 476.2L628.4 482.5L628.7 478.0L629.0 478.3L629.3 475.0L629.6 477.7L629.9 494.5L630.2 489.2L630.5 476.6L630.8 481.4L631.1 474.7L631.4 478.6L631.6 483.5L631.9 475.5L632.2 481.7L632.5 493.8L632.8 472.3L633.1 495.8L633.4 476.6L633.6 475.9L633.9 478.5L634.2 492.4L634.5 475.5L634.7 487.8L635.0 483.7L635.3 477.8L635.6 476.4L635.8 478.4L636.1 476.1L636.4 481.0L636.6 480.4L636.9 478.6L637.2 478.7L637.4 476.9L637.7 481.5L637.9 477.7L638.2 483.0L638.5 483.3L638.7 479.1L639.0 480.7L639.2 477.0L639.5 478.7L639.7 473.0L640.0 480.0L640.2 479.4L640.5 485.7L640.7 479.3L641.0 474.9L641.2 484.1L641.4 480.2L641.7 476.8L641.9 479.9L642.2 481.5L642.4 475.8L642.6 479.5L642.9 476.8L643.1 475.0L643.4 475.0L643.6 480.9L643.8 482.8L644.1 476.7L644.3 478.4L644.5 490.2L644.7 490.2L644.7 474.7L645.0 479.8L645.2 476.6L645.4 480.5L645.7 474.6L645.9 482.9L646.1 480.4L646.3 489.4L646.6 479.4L646.8 479.4L646.8 480.9L647.0 479.9L647.2 477.2L647.4 477.0L647.6 475.7L647.9 482.4L648.1 485.3L648.3 479.6L648.5 477.0L648.7 477.0L648.7 474.5L648.9 474.7L649.2 488.4L649.4 478.2L649.6 474.0L649.8 474.0L649.8 482.2L650.0 482.2L650.2 477.3L650.4 482.6L650.6 476.3L650.8 479.8L651.0 474.1L651.2 474.1L651.2 478.6L651.4 478.6L651.6 476.6L651.8 475.5L652.0 480.9L652.2 480.9L652.2 484.8L652.4 484.8L652.6 476.0L652.8 482.0L653.0 495.4L653.2 495.4L653.2 481.0L653.4 481.0L653.6 476.5L653.8 480.0L654.0 477.6L654.2 477.6L654.2 488.5L654.4 488.5L654.6 475.8L654.8 475.8L654.8 479.9L655.0 479.9L655.2 474.6L655.4 485.4L655.5 481.9L655.7 481.9L655.7 471.8L655.9 471.8L656.1 479.7L656.3 473.1L656.3 483.1L656.5 483.1L656.7 476.8L656.8 480.7L657.0 490.3L657.2 490.3L657.2 475.0L657.4 475.0L657.6 480.5L657.8 480.5L657.8 474.0L657.9 474.0L658.1 486.5L658.3 490.1L658.3 483.2L658.5 483.2L658.7 485.9L658.8 473.9L659.0 477.0L659.2 477.0L659.2 484.7L659.4 481.6L659.5 470.1L659.7 470.1L659.7 484.0L659.9 484.0L660.1 478.4L660.2 476.2L660.2 478.7L660.4 478.7L660.6 481.4L660.8 486.4L660.8 477.1L660.9 477.1L661.1 480.0L661.3 490.0L661.3 474.3L661.4 474.3L661.6 475.2L661.8 475.2L661.8 479.4L661.9 479.4L662.1 477.0L662.3 477.0L662.3 486.7L662.4 486.7L662.6 478.3L662.8 487.2L662.8 478.0L662.9 478.0L663.1 489.4L663.3 489.4L663.3 479.4L663.4 479.4L663.6 472.9L663.8 472.9L663.8 487.6L663.9 487.6L664.1 483.1L664.3 483.1L664.3 481.9L664.4 481.9L664.6 475.2L664.7 476.3L664.7 473.4L664.9 473.4L665.1 478.2L665.2 478.2L665.2 470.6L665.4 472.4L665.5 480.7L665.8 501.0L665.8 477.3L666.0 477.3L666.2 499.1L666.3 499.1L666.3 479.1L666.5 479.3L666.6 482.0L666.8 482.0L666.8 475.5L666.9 475.5L667.1 482.1L667.2 478.5L667.2 482.8L667.4 482.8L667.5 483.9L667.8 483.9L667.8 477.3L668.0 482.7L668.1 490.9L668.3 490.9L668.3 477.1L668.4 486.1L668.6 478.5L668.7 472.9L668.7 478.9L668.9 478.9L669.0 485.8L669.3 487.3L669.3 474.8L669.5 479.4L669.6 477.2L669.8 474.2L669.8 479.9L669.9 479.9L670.1 480.8L670.3 480.8L670.3 511.7L670.5 488.8L670.6 477.2L670.8 477.2L670.8 480.5L670.9 477.4L671.1 479.0L671.3 474.9L671.3 483.8L671.5 483.8L671.6 479.7L671.8 490.7L671.8 475.2L671.9 475.2L672.1 479.2L672.3 479.2L672.3 473.5L672.5 475.1L672.6 479.9L672.8 476.3L672.8 488.7L672.9 488.7L673.0 477.4L673.2 489.1L673.2 474.3L673.4 474.3L673.6 478.3L673.8 481.8L673.8 474.9L674.0 474.9L674.1 474.4L674.3 474.4L674.3 489.8L674.4 489.8L674.5 479.4L674.7 475.1L674.7 482.8L674.9 482.8L675.1 477.4L675.3 477.4L675.3 504.9L675.5 487.6L675.6 478.0L675.8 478.0L675.8 486.3L676.0 481.3L676.1 487.8L676.2 487.8L676.2 479.3L676.4 483.1L676.5 481.6L676.7 482.9L676.7 475.7L676.9 479.2L677.0 477.3L677.2 482.8L677.2 477.0L677.4 477.0L677.5 475.5L677.7 475.5L677.7 481.6L677.9 480.1L678.0 475.9L678.2 471.6L678.2 484.0L678.4 475.7L678.5 481.3L678.7 481.3L678.7 475.2L678.9 475.2L679.0 507.8L679.2 507.8L679.2 480.0L679.4 480.0L679.5 483.3L679.7 483.3L679.7 472.4L679.9 472.4L680.0 520.8L680.3 520.8L680.3 477.1L680.5 480.1L680.6 482.6L680.8 484.8L680.8 474.9L681.0 474.9L681.1 477.8L681.3 477.8L681.3 481.7L681.5 479.3L681.6 474.9L681.8 474.9L681.8 481.2L681.9 478.7L682.0 486.5L682.2 486.5L682.2 473.5L682.4 484.4L682.5 477.5L682.7 484.8L682.7 473.7L683.0 480.7L683.1 475.3L683.3 475.3L683.3 483.0L683.4 482.1L683.5 480.3L683.7 478.0L683.7 481.8L683.9 481.8L684.0 476.3L684.2 475.3L684.2 488.3L684.5 476.2L684.6 475.0L684.7 475.0L684.7 485.1L684.9 478.2L685.0 472.9L685.2 472.9L685.2 493.4L685.5 484.3L685.6 477.1L685.8 486.4L685.8 474.1L686.0 478.7L686.1 481.7L686.3 481.7L686.3 492.8L686.4 492.8L686.5 473.4L686.8 473.4L686.8 486.3L687.0 482.2L687.1 479.8L687.2 484.8L687.2 472.5L687.4 483.6L687.5 482.9L687.7 482.9L687.7 473.6L687.9 482.0L688.0 478.1L688.2 476.5L688.2 484.7L688.5 484.7L688.6 485.2L688.8 486.6L688.8 474.0L689.0 478.6L689.1 484.8L689.3 484.8L689.3 475.6L689.5 475.6L689.6 486.0L689.8 486.0L689.8 476.1L690.0 478.4L690.1 477.4L690.3 475.3L690.3 483.3L690.4 483.3L690.5 479.0L690.7 485.8L690.7 476.2L690.9 476.2L691.0 487.8L691.2 487.8L691.2 473.5L691.4 483.0L691.5 480.4L691.7 487.6L691.7 468.6L692.0 475.7L692.1 475.5L692.3 473.6L692.3 479.1L692.5 479.1L692.6 474.2L692.8 482.8L692.8 473.5L693.0 473.5L693.1 478.8L693.3 482.8L693.3 472.5L693.4 472.5L693.5 475.8L693.7 474.5L693.7 481.7L693.9 474.8L694.0 473.3L694.2 473.3L694.2 480.5L694.5 476.2L694.6 483.2L694.8 484.7L694.8 472.5L694.9 472.5L695.0 479.9L695.2 479.2L695.2 489.3L695.4 489.3L695.5 477.1L695.7 485.6L695.7 472.4L696.0 472.4L696.1 478.3L696.2 474.3L696.2 484.8L696.4 484.8L696.5 476.7L696.7 479.9L696.7 476.3L697.0 479.3L697.0 476.4L697.3 474.4L697.3 487.6L697.5 483.5L697.6 477.2L697.8 487.1L697.8 473.5L697.9 479.7L698.0 474.6L698.2 474.6L698.2 486.3L698.5 486.3L698.5 479.0L698.8 474.8L698.8 484.3L699.0 484.3L699.1 479.9L699.3 479.9L699.3 476.5L699.5 479.8L699.6 479.5L699.8 481.9L699.8 473.3L699.9 473.3L700.0 478.4L700.2 472.3L700.2 488.4L700.4 486.1L700.5 485.1L700.7 472.6L700.7 487.1L700.9 477.1L701.0 478.6L701.2 485.8L701.2 477.4L701.4 477.4L701.5 479.1L701.7 491.4L701.7 478.5L701.9 478.5L702.0 476.7L702.3 475.0L702.3 525.2L702.5 525.2L702.6 479.5L702.8 474.8L702.8 482.6L703.0 481.5L703.1 475.9L703.3 475.9L703.3 488.4L703.5 488.4L703.5 477.7L703.7 474.4L703.7 484.9L703.9 484.9L704.0 475.2L704.3 474.0L704.3 482.0L704.5 482.0L704.6 484.1L704.8 484.1L704.8 471.7L705.0 481.4L705.0 485.2L705.3 473.6L705.3 493.2L705.5 478.2L705.6 475.6L705.8 483.8L705.8 474.2L706.0 482.7L706.0 487.0L706.3 491.2L706.3 475.1L706.5 479.8L706.6 481.1L706.7 474.0L706.7 490.3L706.9 475.5L707.0 484.1L707.2 497.5L707.2 471.9L707.5 487.1L707.5 471.8L707.8 471.8L707.8 484.9L708.0 480.5L708.0 481.3L708.3 473.1L708.3 481.6L708.5 478.1L708.6 482.5L708.8 473.3L708.8 487.1L709.0 478.4L709.1 480.6L709.3 488.6L709.3 475.4L709.5 479.1L709.6 477.5L709.8 482.4L709.8 474.0L710.0 482.2L710.1 488.1L710.3 488.1L710.3 475.2L710.5 475.2L710.6 476.5L710.8 481.3L710.8 476.1L711.0 480.3L711.0 475.4L711.3 475.4L711.3 483.8L711.5 477.1L711.5 481.0L711.7 482.3L711.7 478.0L711.9 481.0L712.0 477.8L712.3 483.1L712.3 475.7L712.5 479.9L712.6 485.9L712.8 474.4L712.8 495.4L713.0 477.6L713.0 484.3L713.3 486.2L713.3 477.0L713.5 477.0L713.6 475.2L713.8 484.9L713.8 473.2L714.0 476.5L714.0 482.7L714.3 490.2L714.3 471.6L714.5 481.9L714.6 475.3L714.7 473.6L714.7 484.6L714.9 477.7L715.0 478.6L715.2 471.1L715.2 480.2L715.5 473.5L715.5 487.8L715.7 493.2L715.7 475.6L716.0 481.9L716.0 484.0L716.3 484.0L716.3 473.6L716.5 473.6L716.5 477.2L716.8 473.1L716.8 488.0L717.0 476.1L717.0 480.8L717.3 474.2L717.3 484.9L717.5 484.9L717.5 486.5L717.8 486.5L717.8 470.5L718.0 476.0L718.0 476.8L718.2 487.2L718.2 473.2L718.5 475.0L718.5 479.1L718.7 486.0L718.7 472.3L718.9 472.3L719.0 474.1L719.2 474.1L719.2 482.3L719.5 477.9L719.5 477.0L719.8 472.3L719.8 483.8L720.0 481.4L720.0 478.5L720.3 474.2L720.3 479.6L720.5 479.6L720.6 490.0L720.8 490.0L720.8 472.6L721.0 480.4L721.0 473.3L721.3 473.3L721.3 481.4L721.5 474.7L721.5 478.3L721.7 484.4L721.7 474.4L721.9 477.7L722.0 485.3L722.2 485.3L722.2 473.6L722.5 475.9L722.5 480.6L722.7 471.0L722.7 487.5L723.0 478.8L723.0 478.0L723.2 472.9L723.2 481.8L723.5 480.9L723.5 475.2L723.7 473.2L723.7 483.2L724.0 477.1L724.0 482.5L724.2 484.8L724.2 470.5L724.5 484.1L724.5 474.0L724.7 474.0L724.7 487.5L724.9 480.6L725.0 478.2L725.2 480.1L725.2 470.1L725.5 475.4L725.5 484.4L725.8 484.4L725.8 475.9L726.0 483.5L726.0 479.2L726.3 487.1L726.3 475.1L726.5 485.5L726.6 476.4L726.8 485.0L726.8 474.9L727.0 479.1L727.0 476.8L727.3 499.1L727.3 473.3L727.5 474.5L727.5 478.8L727.7 497.8L727.7 475.7L728.0 480.8L728.0 481.9L728.2 486.0L728.2 474.9L728.5 475.4L728.5 473.3L728.7 472.7L728.7 497.0L729.0 483.1L729.0 475.7L729.2 479.5L729.2 473.9L729.5 476.9L729.5 478.3L729.7 475.3L729.7 484.8L730.0 479.9L730.0 480.1L730.2 482.9L730.2 471.2L730.5 476.3L730.5 484.5L730.7 484.5L730.7 473.6L731.0 483.9L731.0 473.7L731.2 482.9L731.2 473.5L731.5 473.5L731.5 491.7L731.7 491.7L731.7 476.3L732.0 477.8L732.0 476.2L732.2 473.9L732.2 518.7L732.5 485.8L732.5 472.4L732.7 471.4L732.7 486.6L733.0 473.5L733.0 475.9L733.2 487.9L733.2 475.8L733.5 478.7L733.5 479.0L733.7 472.1L733.7 484.3L734.0 478.8L734.0 476.9L734.3 474.0L734.3 486.0L734.5 479.9L734.5 478.2L734.8 485.8L734.8 474.7L735.0 476.2L735.0 475.4L735.3 484.7L735.3 471.6L735.5 473.4L735.5 477.8L735.7 482.1L735.7 471.5L736.0 480.4L736.0 479.0L736.2 488.4L736.2 472.6L736.5 478.1L736.5 476.3L736.7 475.3L736.7 488.6L737.0 480.5L737.0 477.2L737.2 474.1L737.2 488.1L737.5 485.9L737.5 483.7L737.7 489.2L737.7 471.8L738.0 483.4L738.0 490.1L738.3 490.1L738.3 471.6L738.5 479.9L738.5 479.2L738.8 472.8L738.8 486.0L739.0 477.2L739.0 475.4L739.2 488.4L739.2 472.0L739.5 473.7L739.5 482.6L739.8 472.5L739.8 484.8L740.0 473.3L740.0 478.6L740.3 473.9L740.3 485.9L740.5 482.6L740.5 480.1L740.8 487.9L740.8 472.9L741.0 479.2L741.0 482.7L741.2 475.7L741.2 487.1L741.5 487.1L741.5 479.8L741.7 488.4L741.7 471.0L742.0 480.8L742.0 476.0L742.2 489.6L742.2 471.8L742.5 471.8L742.5 474.8L742.7 470.4L742.7 484.0L743.0 473.0L743.0 475.0L743.3 486.5L743.3 469.2L743.5 485.3L743.5 480.0L743.8 472.4L743.8 497.1L744.0 478.1L744.0 472.9L744.3 472.9L744.3 481.1L744.5 473.5L744.5 471.6L744.8 470.7L744.8 482.9L745.0 476.5L745.0 486.5L745.2 472.4L745.2 489.6L745.5 475.5L745.5 482.0L745.7 483.2L745.7 471.6L746.0 471.6L746.0 478.4L746.2 486.9L746.2 473.6L746.5 482.8L746.5 478.2L746.7 489.2L746.7 473.8L747.0 483.8L747.0 478.3L747.3 473.3L747.3 487.2L747.5 485.2L747.5 479.6L747.8 481.4L747.8 474.1L748.0 477.4L748.0 474.9L748.3 491.8L748.3 471.2L748.5 474.7L748.5 475.1L748.8 491.9L748.8 472.5L749.0 483.6L749.0 484.0L749.3 467.7L749.3 489.4L749.5 482.7L749.5 476.0L749.8 485.1L749.8 469.4L750.0 479.1L750.0 477.4L750.3 489.5L750.3 470.4L750.5 481.4L750.5 487.9L750.8 487.9L750.8 471.0L751.0 472.6L751.0 480.7L751.3 486.2L751.3 472.9L751.5 482.3L751.5 477.4L751.7 491.7L751.7 474.7L752.0 478.7L752.0 476.7L752.2 485.4L752.2 471.6L752.5 471.6L752.5 474.6L752.8 471.8L752.8 481.9L753.0 473.7L753.0 480.3L753.3 497.4L753.3 474.0L753.5 475.5L753.5 485.7L753.8 493.0L753.8 471.1L754.0 477.3L754.0 476.4L754.3 489.9L754.3 473.0L754.5 478.6L754.5 478.9L754.7 490.6L754.7 473.5L755.0 476.4L755.0 477.8L755.3 473.9L755.3 483.1L755.5 478.4L755.5 485.0L755.8 471.9L755.8 486.7L756.0 476.3L756.0 475.0L756.2 472.0L756.2 485.4L756.5 481.2L756.5 476.6L756.8 472.2L756.8 484.8L757.0 484.8L757.0 482.8L757.3 487.6L757.3 472.2L757.5 475.4L757.5 477.3L757.8 468.0L757.8 485.9L758.0 474.5L758.0 472.8L758.2 471.7L758.2 487.1L758.5 478.9L758.5 476.1L758.7 470.2L758.7 490.5L759.0 477.6L759.0 479.1L759.2 471.7L759.2 486.5L759.5 481.3L759.5 488.2L759.7 470.2L759.7 496.9L760.0 480.9L760.0 474.2L760.3 484.5L760.3 470.3L760.5 479.9L760.5 479.7L760.8 471.5L760.8 482.1L761.0 476.5L761.0 473.6L761.2 470.6L761.2 486.7L761.5 483.5L761.5 483.3L761.7 485.6L761.7 471.5L762.0 476.6L762.0 479.1L762.2 472.3L762.2 487.1L762.5 483.0L762.5 475.6L762.8 471.8L762.8 487.5L763.0 477.2L763.0 484.8L763.3 487.0L763.3 470.9L763.5 473.9L763.5 484.3L763.7 505.2L763.7 470.9L764.0 477.5L764.0 479.0L764.2 488.4L764.2 470.3L764.5 476.7L764.5 479.8L764.7 484.2L764.7 472.5L765.0 478.1L765.0 470.2L765.2 470.2L765.2 488.9L765.5 478.0L765.5 476.2L765.7 491.1L765.7 473.7L766.0 479.3L766.0 469.1L766.3 469.1L766.3 485.4L766.5 485.4L766.5 474.6L766.8 472.6L766.8 489.2L767.0 476.5L767.0 481.2L767.2 471.5L767.2 486.1L767.5 474.5L767.5 490.0L767.8 470.7L767.8 490.4L768.0 477.4L768.0 471.9L768.3 471.3L768.3 493.0L768.5 474.4L768.5 479.9L768.7 471.8L768.7 483.9L769.0 483.9L769.0 483.6L769.3 486.2L769.3 470.3L769.5 479.1L769.5 473.9L769.7 486.6L769.7 471.4L770.0 473.1L770.0 477.1L770.2 488.2L770.2 470.9L770.5 479.5L770.5 478.1L770.7 483.9L770.7 471.9L771.0 471.9L771.0 476.4L771.2 490.5L771.2 472.1L771.5 480.0L771.5 478.9L771.7 470.3L771.7 482.1L772.0 473.0L772.0 472.1L772.2 483.4L772.2 470.9L772.5 470.9L772.5 478.1L772.7 484.9L772.7 471.3L773.0 473.7L773.0 488.2L773.2 488.2L773.2 469.3L773.5 476.3L773.5 475.6L773.7 470.4L773.7 485.7L774.0 476.2L774.0 478.4L774.2 485.6L774.2 468.3L774.5 479.4L774.5 475.0L774.7 481.4L774.7 470.0L775.0 475.0L775.0 471.7L775.2 486.5L775.2 471.7L775.5 474.9L775.5 472.4L775.7 492.7L775.7 468.6L776.0 471.9L776.0 472.5L776.2 481.8L776.2 468.9L776.5 480.5L776.5 474.8L776.7 488.0L776.7 469.3L777.0 473.0L777.0 475.5L777.2 483.5L777.2 469.5L777.5 470.1L777.5 477.9L777.7 487.4L777.7 469.1L778.0 472.0L778.0 471.8L778.2 505.4L778.2 467.2L778.5 479.9L778.5 481.2L778.8 487.9L778.8 465.4L779.0 480.1L779.0 474.6L779.3 484.3L779.3 468.4L779.5 471.1L779.5 474.4L779.8 486.4L779.8 469.4L780.0 480.7L780.0 474.8L780.3 468.3L780.3 490.6L780.5 473.7L780.5 471.6L780.8 467.9L780.8 482.4L781.0 473.7L781.0 476.7L781.3 464.9L781.3 481.8L781.5 468.7L781.5 470.5L781.7 482.7L781.7 467.7L782.0 472.5L782.0 471.4L782.3 464.9L782.3 494.8L782.5 470.8L782.5 476.0L782.8 463.4L782.8 483.6L783.0 483.6L783.0 472.2L783.3 464.7L783.3 482.0L783.5 468.1L783.5 466.2L783.8 485.1L783.8 465.0L784.0 475.7L784.0 465.5L784.3 462.6L784.3 476.0L784.5 472.9L784.5 469.1L784.7 473.5L784.7 463.3L785.0 465.8L785.0 463.7L785.2 461.8L785.2 487.7L785.5 471.2L785.5 466.4L785.8 476.7L785.8 465.8L786.0 470.1L786.0 471.3L786.2 463.8L786.2 474.8L786.5 469.1L786.5 475.5L786.7 487.6L786.7 466.1L787.0 469.6L787.0 470.8L787.2 479.0L787.2 465.6L787.5 466.5L787.5 472.0L787.7 465.9L787.7 476.5L788.0 474.9L788.0 471.3L788.3 480.8L788.3 465.2L788.5 473.9L788.5 474.9L788.8 466.7L788.8 488.3L789.0 479.7L789.0 476.4L789.3 483.3L789.3 467.2L789.5 477.6L789.5 472.5L789.8 467.8L789.8 485.8L790.0 475.5L790.0 474.8L790.3 481.4L790.3 468.3L790.5 472.4L790.5 478.1L790.8 468.4L790.8 486.7L791.0 472.5L791.0 477.8L791.3 468.0L791.3 503.9L791.5 473.7L791.5 484.9L791.8 470.8L791.8 487.0L792.0 487.0L792.0 480.2L792.2 487.2L792.2 470.2L792.5 476.5L792.5 476.0L792.7 483.1L792.7 470.6L793.0 475.1L793.0 479.1L793.3 469.6L793.3 487.4L793.5 479.8L793.5 481.5L793.7 490.2L793.7 470.7L794.0 479.3L794.0 477.9L794.2 470.4L794.2 486.2L794.5 475.9L794.5 478.9L794.7 471.8L794.7 491.1L795.0 491.1L795.0 478.0L795.2 472.1L795.2 513.0L795.5 476.1L795.5 472.7L795.7 496.3L795.7 471.1L796.0 476.8L796.0 475.5L796.2 482.2L796.2 470.6L796.5 480.2L796.5 475.4L796.8 474.5L796.8 492.5L797.0 478.4L797.0 479.3L797.3 471.6L797.3 484.2L797.5 481.9L797.5 481.2L797.8 471.1L797.8 486.4L798.0 473.9L798.0 475.7L798.3 494.7L798.3 471.7L798.5 474.2L798.5 477.6L798.7 481.4L798.7 471.0L799.0 474.4L799.0 483.3L799.2 484.2L799.2 470.8L799.5 481.8L799.5 476.8L799.7 485.0L799.7 468.2L800.0 470.4L800.0 484.9L800.2 484.9L800.2 466.0L800.5 471.1L800.5 468.1L800.7 466.1L800.7 487.2L801.0 473.0L801.0 469.8L801.3 483.3L801.3 468.9L801.5 474.5L801.5 467.5L801.8 467.4L801.8 484.2L802.0 470.1L802.0 468.9L802.2 465.0L802.2 485.7L802.5 476.1L802.5 469.8L802.8 463.8L802.8 479.0L803.0 467.0L803.0 472.2L803.2 462.7L803.2 480.1L803.5 472.6L803.5 470.7L803.7 476.5L803.7 461.6L804.0 466.4L804.0 462.9L804.2 476.8L804.2 460.7L804.5 464.8L804.5 462.0L804.7 477.2L804.7 458.4L805.0 467.0L805.0 464.6L805.2 460.0L805.2 476.6L805.5 472.2L805.5 462.4L805.8 460.6L805.8 478.1L806.0 467.7L806.0 465.0L806.3 481.9L806.3 462.7L806.5 470.3L806.5 460.7L806.8 460.7L806.8 484.2L807.0 469.0L807.0 467.3L807.2 464.6L807.2 484.6L807.5 474.9L807.5 469.0L807.7 466.7L807.7 479.5L808.0 469.3L808.0 472.5L808.3 492.3L808.3 467.7L808.5 472.7L808.5 475.4L808.8 483.8L808.8 465.8L809.0 471.2L809.0 472.6L809.2 487.0L809.2 467.2L809.5 473.3L809.5 473.5L809.8 468.0L809.8 487.9L810.0 475.5L810.0 472.0L810.3 491.6L810.3 470.3L810.5 479.4L810.5 473.3L810.7 489.7L810.7 468.2L811.0 472.6L811.0 478.2L811.2 472.7L811.2 493.6L811.5 473.7L811.5 475.8L811.8 471.6L811.8 492.4L812.0 477.3L812.0 479.4L812.2 471.0L812.2 488.3L812.5 479.3L812.5 479.2L812.7 474.2L812.7 489.7L813.0 478.5L813.0 477.2L813.3 473.5L813.3 490.3L813.5 477.4L813.5 480.4L813.8 474.3L813.8 490.3L814.0 480.5L814.0 491.4L814.3 474.4L814.3 501.1L814.5 484.6L814.5 480.9L814.7 476.4L814.7 495.9L815.0 482.8L815.0 480.2L815.3 476.9L815.3 494.2L815.5 494.2L815.5 482.5L815.8 481.0L815.8 503.1L816.0 487.1L816.0 484.6L816.2 481.3L816.2 511.0L816.5 488.1L816.5 489.1L816.7 483.8L816.7 501.5L817.0 486.7L817.0 486.7L817.2 485.0L817.2 525.0L817.5 493.5L817.5 489.5L817.8 514.5L817.8 486.7L818.0 492.5L818.0 490.1L818.2 489.6L818.2 522.0L818.5 491.5L818.5 497.5L818.7 492.4L818.7 532.8L819.0 515.3L819.0 497.6L819.2 491.9L819.2 524.3L819.5 509.9L819.5 508.9L819.7 495.4L819.7 526.7L820.0 505.6L820.0 514.8L820.2 497.8L820.2 546.8L820.5 523.3L820.5 512.1L820.8 500.5L820.8 543.2L821.0 520.9L821.0 505.9L821.3 500.2L821.3 561.1L821.5 531.0L821.5 509.0L821.7 506.8L821.7 536.3L822.0 516.7L822.0 524.9L822.2 546.5L822.2 506.9L822.5 530.3L822.5 523.2L822.7 509.4L822.7 552.1L823.0 523.9L823.0 529.3L823.3 554.0L823.3 516.1L823.5 518.9L823.5 525.3L823.7 554.0L823.7 519.4L824.0 529.9L824.0 534.6L824.2 548.6L824.2 515.1L824.5 528.7L824.5 530.8L824.7 561.2L824.7 517.9L825.0 531.7L825.0 541.0L825.3 564.4L825.3 522.3L825.5 525.8L825.5 554.4L825.7 585.6L825.7 521.4L826.0 540.9L826.0 539.6L826.2 525.4L826.2 560.0L826.5 528.2L826.5 537.1L826.7 526.6L826.7 596.9L827.0 540.9L827.0 534.7L827.3 571.8L827.3 529.0L827.5 537.4L827.5 554.4L827.7 570.2L827.7 529.2L828.0 538.6L828.0 543.2L828.3 564.5L828.3 526.5L828.5 544.5L828.5 543.9L828.8 563.9L828.8 528.3L829.0 549.8L829.0 542.6L829.2 528.0L829.2 570.0L829.5 556.1L829.5 541.7L829.7 529.6L829.7 563.3L830.0 542.1L830.0 553.4L830.2 573.5L830.2 530.2L830.5 546.4L830.5 541.7L830.7 574.7L830.7 526.4L831.0 556.8L831.0 546.3L831.2 526.1L831.2 568.9L831.5 556.1L831.5 544.2L831.7 526.3L831.7 557.7L832.0 557.7L832.0 537.9L832.2 532.1L832.2 567.9L832.5 547.0L832.5 542.3L832.8 530.3L832.8 609.8L833.0 533.8L833.0 533.8L833.2 528.2L833.2 564.3L833.5 544.3L833.5 551.3L833.7 558.0L833.7 527.2L834.0 538.5L834.0 540.0L834.2 576.3L834.2 529.0L834.5 555.7L834.5 533.9L834.7 532.0L834.7 571.9L835.0 539.0L835.0 544.3L835.3 530.2L835.3 572.0L835.5 541.0L835.5 535.2L835.7 527.2L835.7 573.1L836.0 537.3L836.0 561.7L836.2 565.8L836.2 530.8L836.5 542.0L836.5 556.9L836.8 581.9L836.8 530.7L837.0 552.2L837.0 560.3L837.3 567.4L837.3 530.1L837.5 566.3L837.5 538.0L837.7 565.9L837.7 531.0L838.0 560.6L838.0 541.3L838.3 529.7L838.3 578.5L838.5 553.8L838.5 539.7L838.8 572.7L838.8 531.2L839.0 549.9L839.0 538.5L839.2 531.4L839.2 584.3L839.5 534.4L839.5 553.3L839.8 575.0L839.8 531.4L840.0 545.4L840.0 553.2L840.3 532.9L840.3 564.7L840.5 541.2L840.5 544.1L840.7 533.8L840.7 584.3L841.0 550.8L841.0 551.5L841.3 531.9L841.3 564.8L841.5 551.3L841.5 558.1L841.8 581.1L841.8 531.8L842.0 531.8L842.0 551.7L842.3 532.2L842.3 574.5L842.5 549.3L842.5 544.3L842.8 603.1L842.8 531.1L843.0 540.7L843.0 546.0L843.3 574.5L843.3 528.6L843.5 544.4L843.5 535.2L843.8 566.3L843.8 527.3L844.0 534.7L844.0 557.0L844.3 527.6L844.3 575.4L844.5 533.0L844.5 531.2L844.8 580.7L844.8 530.3L845.0 547.5L845.0 532.3L845.2 579.3L845.2 531.4L845.5 539.9L845.5 554.3L845.7 531.4L845.7 574.5L846.0 542.6L846.0 537.1L846.2 568.9L846.2 525.3L846.5 555.8L846.5 540.2L846.7 532.4L846.7 579.6L847.0 559.0L847.0 538.8L847.2 531.8L847.2 577.8L847.5 543.0L847.5 548.4L847.7 533.2L847.7 591.5L848.0 534.1L848.0 536.5L848.2 577.2L848.2 531.0L848.5 549.8L848.5 547.7L848.7 566.9L848.7 530.2L849.0 533.9L849.0 553.9L849.3 572.8L849.3 530.5L849.5 543.5L849.5 550.4L849.7 532.1L849.7 570.2L850.0 543.4L850.0 539.8L850.2 530.8L850.2 577.8L850.5 554.7L850.5 543.1L850.8 591.8L850.8 530.9L851.0 540.6L851.0 544.6L851.3 589.0L851.3 530.6L851.5 544.3L851.5 546.4L851.7 533.2L851.7 570.4L852.0 538.9L852.0 555.9L852.2 566.1L852.2 532.4L852.5 543.6L852.5 537.5L852.8 590.4L852.8 531.5L853.0 543.8L853.0 552.0L853.2 530.3L853.2 574.3L853.5 540.0L853.5 577.6L853.7 577.6L853.7 527.7L854.0 535.3L854.0 534.4L854.2 578.6L854.2 529.7L854.5 543.6L854.5 565.8L854.7 586.5L854.7 530.9L855.0 543.2L855.0 536.1L855.2 529.6L855.2 581.0L855.5 540.7L855.5 539.2L855.7 580.8L855.7 530.4L856.0 548.5L856.0 545.7L856.3 579.2L856.3 528.6L856.5 550.3L856.5 544.0L856.7 582.4L856.7 528.6L857.0 532.3L857.0 572.7L857.2 577.6L857.2 532.7L857.5 537.0L857.5 544.3L857.7 531.6L857.7 568.6L858.0 541.3L858.0 542.4L858.3 569.8L858.3 530.3L858.5 566.1L858.5 546.0L858.8 589.6L858.8 529.4L859.0 533.0L859.0 581.6L859.3 531.7L859.3 586.9L859.5 542.6L859.5 545.9L859.8 527.9L859.8 575.7L860.0 549.8L860.0 550.1L860.3 530.2L860.3 596.9L860.5 596.9L860.5 550.1L860.8 530.1L860.8 578.9L861.0 540.2L861.0 537.5L861.3 570.0L861.3 530.5L861.5 539.0L861.5 542.0L861.8 533.0L861.8 565.8L862.0 548.8L862.0 550.1L862.3 528.4L862.3 579.5L862.5 546.1L862.5 562.0L862.8 528.0L862.8 564.4L863.0 535.5L863.0 540.9L863.2 568.3L863.2 527.0L863.5 551.1L863.5 542.9L863.7 573.7L863.7 529.1L864.0 566.1L864.0 546.9L864.3 573.7L864.3 528.6L864.5 549.8L864.5 567.3L864.8 578.9L864.8 529.7L865.0 536.9L865.0 560.2L865.3 530.1L865.3 573.0L865.5 532.6L865.5 548.1L865.7 579.4L865.7 528.7L866.0 546.4L866.0 534.5L866.2 590.9L866.2 530.5L866.5 543.9L866.5 547.8L866.7 527.6L866.7 589.7L867.0 545.8L867.0 534.5L867.3 576.5L867.3 530.0L867.5 538.8L867.5 535.7L867.8 532.3L867.8 579.8L868.0 538.3L868.0 563.6L868.3 589.0L868.3 528.3L868.5 543.6L868.5 534.7L868.7 528.9L868.7 569.4L869.0 554.3L869.0 543.6L869.3 573.6L869.3 529.9L869.5 546.1L869.5 552.9L869.8 528.3L869.8 579.9L870.0 565.6L870.0 545.6L870.2 573.7L870.2 526.4L870.5 539.5L870.5 544.5L870.8 529.5L870.8 582.6L871.0 536.4L871.0 539.5L871.3 574.1L871.3 531.9L871.5 540.1L871.5 544.9L871.8 528.1L871.8 585.3L872.0 569.5L872.0 552.9L872.3 527.4L872.3 571.4L872.5 539.7L872.5 533.7L872.7 573.5L872.7 528.4L873.0 540.7L873.0 535.0L873.2 529.5L873.2 569.9L873.5 530.6L873.5 532.6L873.7 529.3L873.7 578.4L874.0 536.0L874.0 532.2L874.3 528.4L874.3 574.1L874.5 534.3L874.5 551.0L874.7 574.5L874.7 528.7L875.0 562.6L875.0 531.4L875.2 583.7L875.2 527.4L875.5 544.7L875.5 567.9L875.7 598.8L875.7 529.5L876.0 534.1L876.0 551.2L876.2 570.1L876.2 530.2L876.5 543.9L876.5 540.6L876.7 528.8L876.7 572.6L877.0 550.5L877.0 531.5L877.3 578.5L877.3 526.9L877.5 560.9L877.5 553.6L877.7 587.9L877.7 528.4L878.0 540.2L878.0 537.9L878.2 529.3L878.2 579.9L878.5 548.0L878.5 538.0L878.8 587.1L878.8 524.6L879.0 546.8L879.0 541.6L879.0 527.0L879.0 554.2L879.1 552.1" fill="none" stroke="#ff6929" stroke-width="1" stroke-linejoin="round"/>
</g>
<g shape-rendering="crispEdges"><line x1="361.5" y1="636.5" x2="361.5" y2="633.5" stroke="#c6c6c6"/><line x1="361.5" y1="437.5" x2="361.5" y2="440.5" stroke="#c6c6c6"/><line x1="383.5" y1="636.5" x2="383.5" y2="633.5" stroke="#c6c6c6"/><line x1="383.5" y1="437.5" x2="383.5" y2="440.5" stroke="#c6c6c6"/><line x1="399.5" y1="636.5" x2="399.5" y2="633.5" stroke="#c6c6c6"/><line x1="399.5" y1="437.5" x2="399.5" y2="440.5" stroke="#c6c6c6"/><line x1="412.5" y1="636.5" x2="412.5" y2="633.5" stroke="#c6c6c6"/><line x1="412.5" y1="437.5" x2="412.5" y2="440.5" stroke="#c6c6c6"/><line x1="422.5" y1="636.5" x2="422.5" y2="633.5" stroke="#c6c6c6"/><line x1="422.5" y1="437.5" x2="422.5" y2="440.5" stroke="#c6c6c6"/><line x1="430.5" y1="636.5" x2="430.5" y2="633.5" stroke="#c6c6c6"/><line x1="430.5" y1="437.5" x2="430.5" y2="440.5" stroke="#c6c6c6"/><line x1="438.5" y1="636.5" x2="438.5" y2="633.5" stroke="#c6c6c6"/><line x1="438.5" y1="437.5" x2="438.5" y2="440.5" stroke="#c6c6c6"/><line x1="444.5" y1="636.5" x2="444.5" y2="633.5" stroke="#c6c6c6"/><line x1="444.5" y1="437.5" x2="444.5" y2="440.5" stroke="#c6c6c6"/><line x1="450.5" y1="636.5" x2="450.5" y2="631.5" stroke="#c6c6c6"/><line x1="450.5" y1="437.5" x2="450.5" y2="442.5" stroke="#c6c6c6"/><text x="441.7" y="657" font-family="Liberation Sans, sans-serif" font-size="10.670" fill="#b6b6b6">10<tspan dx="1.200" dy="-5.100" font-size="8.500">1</tspan></text><line x1="489.5" y1="636.5" x2="489.5" y2="633.5" stroke="#c6c6c6"/><line x1="489.5" y1="437.5" x2="489.5" y2="440.5" stroke="#c6c6c6"/><line x1="511.5" y1="636.5" x2="511.5" y2="633.5" stroke="#c6c6c6"/><line x1="511.5" y1="437.5" x2="511.5" y2="440.5" stroke="#c6c6c6"/><line x1="527.5" y1="636.5" x2="527.5" y2="633.5" stroke="#c6c6c6"/><line x1="527.5" y1="437.5" x2="527.5" y2="440.5" stroke="#c6c6c6"/><line x1="540.5" y1="636.5" x2="540.5" y2="633.5" stroke="#c6c6c6"/><line x1="540.5" y1="437.5" x2="540.5" y2="440.5" stroke="#c6c6c6"/><line x1="550.5" y1="636.5" x2="550.5" y2="633.5" stroke="#c6c6c6"/><line x1="550.5" y1="437.5" x2="550.5" y2="440.5" stroke="#c6c6c6"/><line x1="558.5" y1="636.5" x2="558.5" y2="633.5" stroke="#c6c6c6"/><line x1="558.5" y1="437.5" x2="558.5" y2="440.5" stroke="#c6c6c6"/><line x1="566.5" y1="636.5" x2="566.5" y2="633.5" stroke="#c6c6c6"/><line x1="566.5" y1="437.5" x2="566.5" y2="440.5" stroke="#c6c6c6"/><line x1="572.5" y1="636.5" x2="572.5" y2="633.5" stroke="#c6c6c6"/><line x1="572.5" y1="437.5" x2="572.5" y2="440.5" stroke="#c6c6c6"/><line x1="578.5" y1="636.5" x2="578.5" y2="631.5" stroke="#c6c6c6"/><line x1="578.5" y1="437.5" x2="578.5" y2="442.5" stroke="#c6c6c6"/><text x="569.7" y="657" font-family="Liberation Sans, sans-serif" font-size="10.670" fill="#b6b6b6">10<tspan dx="1.200" dy="-5.100" font-size="8.500">2</tspan></text><line x1="617.5" y1="636.5" x2="617.5" y2="633.5" stroke="#c6c6c6"/><line x1="617.5" y1="437.5" x2="617.5" y2="440.5" stroke="#c6c6c6"/><line x1="639.5" y1="636.5" x2="639.5" y2="633.5" stroke="#c6c6c6"/><line x1="639.5" y1="437.5" x2="639.5" y2="440.5" stroke="#c6c6c6"/><line x1="655.5" y1="636.5" x2="655.5" y2="633.5" stroke="#c6c6c6"/><line x1="655.5" y1="437.5" x2="655.5" y2="440.5" stroke="#c6c6c6"/><line x1="668.5" y1="636.5" x2="668.5" y2="633.5" stroke="#c6c6c6"/><line x1="668.5" y1="437.5" x2="668.5" y2="440.5" stroke="#c6c6c6"/><line x1="678.5" y1="636.5" x2="678.5" y2="633.5" stroke="#c6c6c6"/><line x1="678.5" y1="437.5" x2="678.5" y2="440.5" stroke="#c6c6c6"/><line x1="687.5" y1="636.5" x2="687.5" y2="633.5" stroke="#c6c6c6"/><line x1="687.5" y1="437.5" x2="687.5" y2="440.5" stroke="#c6c6c6"/><line x1="694.5" y1="636.5" x2="694.5" y2="633.5" stroke="#c6c6c6"/><line x1="694.5" y1="437.5" x2="694.5" y2="440.5" stroke="#c6c6c6"/><line x1="701.5" y1="636.5" x2="701.5" y2="633.5" stroke="#c6c6c6"/><line x1="701.5" y1="437.5" x2="701.5" y2="440.5" stroke="#c6c6c6"/><line x1="706.5" y1="636.5" x2="706.5" y2="631.5" stroke="#c6c6c6"/><line x1="706.5" y1="437.5" x2="706.5" y2="442.5" stroke="#c6c6c6"/><text x="697.7" y="657" font-family="Liberation Sans, sans-serif" font-size="10.670" fill="#b6b6b6">10<tspan dx="1.200" dy="-5.100" font-size="8.500">3</tspan></text><line x1="745.5" y1="636.5" x2="745.5" y2="633.5" stroke="#c6c6c6"/><line x1="745.5" y1="437.5" x2="745.5" y2="440.5" stroke="#c6c6c6"/><line x1="768.5" y1="636.5" x2="768.5" y2="633.5" stroke="#c6c6c6"/><line x1="768.5" y1="437.5" x2="768.5" y2="440.5" stroke="#c6c6c6"/><line x1="784.5" y1="636.5" x2="784.5" y2="633.5" stroke="#c6c6c6"/><line x1="784.5" y1="437.5" x2="784.5" y2="440.5" stroke="#c6c6c6"/><line x1="796.5" y1="636.5" x2="796.5" y2="633.5" stroke="#c6c6c6"/><line x1="796.5" y1="437.5" x2="796.5" y2="440.5" stroke="#c6c6c6"/><line x1="806.5" y1="636.5" x2="806.5" y2="633.5" stroke="#c6c6c6"/><line x1="806.5" y1="437.5" x2="806.5" y2="440.5" stroke="#c6c6c6"/><line x1="815.5" y1="636.5" x2="815.5" y2="633.5" stroke="#c6c6c6"/><line x1="815.5" y1="437.5" x2="815.5" y2="440.5" stroke="#c6c6c6"/><line x1="822.5" y1="636.5" x2="822.5" y2="633.5" stroke="#c6c6c6"/><line x1="822.5" y1="437.5" x2="822.5" y2="440.5" stroke="#c6c6c6"/><line x1="829.5" y1="636.5" x2="829.5" y2="633.5" stroke="#c6c6c6"/><line x1="829.5" y1="437.5" x2="829.5" y2="440.5" stroke="#c6c6c6"/><line x1="835.5" y1="636.5" x2="835.5" y2="631.5" stroke="#c6c6c6"/><line x1="835.5" y1="437.5" x2="835.5" y2="442.5" stroke="#c6c6c6"/><text x="826.7" y="657" font-family="Liberation Sans, sans-serif" font-size="10.670" fill="#b6b6b6">10<tspan dx="1.200" dy="-5.100" font-size="8.500">4</tspan></text><line x1="873.5" y1="636.5" x2="873.5" y2="633.5" stroke="#c6c6c6"/><line x1="873.5" y1="437.5" x2="873.5" y2="440.5" stroke="#c6c6c6"/><line x1="339.5" y1="470.5" x2="344.5" y2="470.5" stroke="#c6c6c6"/><line x1="878.5" y1="470.5" x2="873.5" y2="470.5" stroke="#c6c6c6"/><text x="333" y="475.5" font-family="Liberation Sans, sans-serif" font-size="10.670" fill="#b6b6b6" text-anchor="end">20</text><line x1="339.5" y1="503.5" x2="344.5" y2="503.5" stroke="#c6c6c6"/><line x1="878.5" y1="503.5" x2="873.5" y2="503.5" stroke="#c6c6c6"/><text x="333" y="508.5" font-family="Liberation Sans, sans-serif" font-size="10.670" fill="#b6b6b6" text-anchor="end">0</text><line x1="339.5" y1="536.5" x2="344.5" y2="536.5" stroke="#c6c6c6"/><line x1="878.5" y1="536.5" x2="873.5" y2="536.5" stroke="#c6c6c6"/><text x="333" y="541.5" font-family="Liberation Sans, sans-serif" font-size="10.670" fill="#b6b6b6" text-anchor="end">-20</text><line x1="339.5" y1="569.5" x2="344.5" y2="569.5" stroke="#c6c6c6"/><line x1="878.5" y1="569.5" x2="873.5" y2="569.5" stroke="#c6c6c6"/><text x="333" y="574.5" font-family="Liberation Sans, sans-serif" font-size="10.670" fill="#b6b6b6" text-anchor="end">-40</text><line x1="339.5" y1="602.5" x2="344.5" y2="602.5" stroke="#c6c6c6"/><line x1="878.5" y1="602.5" x2="873.5" y2="602.5" stroke="#c6c6c6"/><text x="333" y="607.5" font-family="Liberation Sans, sans-serif" font-size="10.670" fill="#b6b6b6" text-anchor="end">-60</text><text x="333" y="640.5" font-family="Liberation Sans, sans-serif" font-size="10.670" fill="#b6b6b6" text-anchor="end">-80</text><rect x="339.5" y="437.5" width="539.0" height="199.0" fill="none" stroke="#c6c6c6"/><text x="546.5" y="433.0" font-family="Liberation Sans, sans-serif" font-size="11.5" letter-spacing="0.468" fill="#b8b8b8" font-weight="bold" >Magnitude Response</text><text x="566.1" y="673.8" font-family="Liberation Sans, sans-serif" font-size="11.7" letter-spacing="0.437" fill="#b6b6b6"  >Frequency (Hz)</text><g transform="translate(309.600,537.700) rotate(-90)"><text x="-31.8" y="0" font-family="Liberation Sans, sans-serif" font-size="11.7" letter-spacing="0.565" fill="#b6b6b6"  >Power (dB)</text></g></g>
</svg>

<div id="status"></div><div class="abs" style="left:249px;top:677px;width:696px;height:1px;background:#fbfbfb"></div><div class="abs" style="left:941px;top:690px;width:2px;height:2px;background:#b0a896"></div><div class="abs" style="left:937px;top:694px;width:2px;height:2px;background:#b0a896"></div><div class="abs" style="left:941px;top:694px;width:2px;height:2px;background:#b0a896"></div><div class="abs" style="left:933px;top:698px;width:2px;height:2px;background:#b0a896"></div><div class="abs" style="left:937px;top:698px;width:2px;height:2px;background:#b0a896"></div><div class="abs" style="left:941px;top:698px;width:2px;height:2px;background:#b0a896"></div><div class="abs" style="left:5.1px;top:683.8px;font-size:12px;line-height:13.9px;letter-spacing:-0.572px;color:#000;white-space:nowrap;">Ready</div>
</div>
</body></html>
